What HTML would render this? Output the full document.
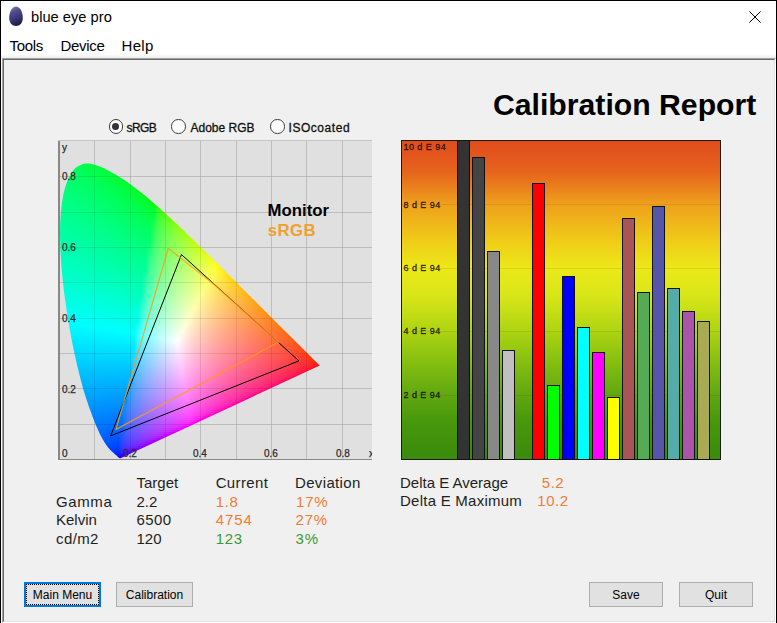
<!DOCTYPE html>
<html><head><meta charset="utf-8">
<style>
*{margin:0;padding:0;box-sizing:border-box}
html,body{width:777px;height:623px;overflow:hidden;background:#fff}
body{position:relative;font-family:"Liberation Sans",sans-serif;color:#000}
.a{position:absolute}
.t{position:absolute;line-height:1;white-space:pre}
#client{position:absolute;left:2px;top:58px;width:774px;height:565px;background:#f0f0f0;
  border-top:1px solid #a0a0a0;border-left:1px solid #a0a0a0;border-right:1px solid #fff;border-bottom:1px solid #fff}
#client2{position:absolute;left:3px;top:59px;width:772px;height:563px;
  border-top:1px solid #696969;border-left:1px solid #696969;border-right:1px solid #e3e3e3;border-bottom:1px solid #e3e3e3}
.menu{font-size:15px;letter-spacing:-0.3px;color:#000;top:37.8px}
.radio{position:absolute;width:14.5px;height:14.5px;border-radius:50%;border:1.3px solid #3c3c3c;background:#fff;top:119.2px}
.radio.on::after{content:"";position:absolute;left:2.45px;top:2.45px;width:7px;height:7px;border-radius:50%;background:#333}
.rl{font-size:12px;top:121.5px;color:#111;-webkit-text-stroke:0.3px #111}
#cie{position:absolute;left:58px;top:140px;width:314px;height:320px;background:#e0e0e0;overflow:hidden}
#horse{position:absolute;left:0;top:0;width:314px;height:320px;clip-path:polygon(62.6px 318.2px,61.9px 318.3px,61.2px 317.9px,60.6px 317.5px,60.0px 316.9px,59.5px 316.4px,58.8px 315.8px,58.2px 315.3px,57.5px 314.7px,56.9px 314.2px,56.4px 313.7px,55.8px 313.2px,55.1px 312.6px,54.4px 311.9px,53.6px 311.2px,52.8px 310.4px,51.9px 309.4px,51.0px 308.4px,50.5px 307.9px,50.0px 307.3px,49.4px 306.6px,48.9px 305.8px,48.3px 305.0px,47.6px 304.0px,47.0px 303.1px,46.3px 302.0px,45.6px 300.8px,44.8px 299.5px,44.0px 298.0px,43.2px 296.5px,42.4px 294.9px,41.5px 293.2px,40.6px 291.3px,39.7px 289.1px,38.7px 286.9px,37.7px 284.4px,36.6px 281.9px,35.5px 279.1px,34.3px 276.1px,33.2px 272.8px,31.9px 269.4px,30.6px 265.7px,29.3px 261.8px,27.9px 257.7px,26.5px 253.3px,25.1px 248.7px,23.8px 243.7px,22.4px 238.5px,21.0px 233.0px,19.6px 227.3px,18.2px 221.3px,16.8px 215.1px,15.5px 208.7px,14.1px 201.9px,12.8px 194.9px,11.5px 187.8px,10.2px 180.5px,9.1px 173.3px,8.0px 166.0px,6.9px 158.5px,5.9px 150.9px,5.1px 143.4px,4.3px 135.9px,3.6px 128.6px,3.1px 121.4px,2.6px 114.3px,2.3px 107.2px,2.1px 100.3px,2.0px 93.6px,2.1px 87.2px,2.3px 81.0px,2.7px 74.9px,3.2px 69.0px,3.9px 63.4px,4.7px 58.2px,5.6px 53.3px,6.8px 48.8px,8.1px 44.6px,9.5px 40.7px,11.1px 37.2px,12.8px 34.0px,14.5px 31.3px,16.4px 29.1px,18.4px 27.3px,20.5px 25.9px,22.7px 24.9px,24.9px 24.1px,27.1px 23.6px,29.4px 23.4px,31.7px 23.5px,34.1px 24.0px,36.5px 24.7px,38.9px 25.5px,41.3px 26.3px,43.7px 27.2px,46.1px 28.3px,48.5px 29.5px,50.9px 30.8px,53.3px 32.2px,55.7px 33.5px,58.0px 34.8px,60.3px 36.2px,62.6px 37.7px,64.8px 39.1px,67.1px 40.6px,69.3px 42.1px,71.5px 43.7px,73.7px 45.3px,75.8px 46.9px,78.0px 48.5px,80.2px 50.2px,82.3px 51.8px,84.5px 53.6px,86.6px 55.3px,88.8px 57.1px,90.9px 58.9px,93.1px 60.7px,95.2px 62.5px,97.3px 64.4px,99.4px 66.2px,101.6px 68.1px,103.7px 70.0px,105.8px 72.0px,107.9px 73.9px,110.0px 75.8px,112.2px 77.8px,114.3px 79.8px,116.4px 81.8px,118.5px 83.8px,120.6px 85.8px,122.7px 87.8px,124.9px 89.8px,127.0px 91.8px,129.1px 93.9px,131.2px 95.9px,133.3px 98.0px,135.5px 100.0px,137.6px 102.1px,139.7px 104.2px,141.8px 106.3px,143.9px 108.3px,146.0px 110.4px,148.1px 112.5px,150.2px 114.5px,152.3px 116.6px,154.4px 118.7px,156.5px 120.7px,158.6px 122.8px,160.7px 124.9px,162.7px 126.9px,164.8px 129.0px,166.8px 131.0px,168.9px 133.0px,170.9px 135.1px,172.9px 137.1px,175.0px 139.1px,177.0px 141.1px,179.0px 143.1px,180.9px 145.1px,182.9px 147.0px,184.8px 149.0px,186.8px 150.9px,188.7px 152.8px,190.6px 154.7px,192.5px 156.6px,194.4px 158.5px,196.2px 160.3px,198.1px 162.1px,199.9px 163.9px,201.7px 165.7px,203.4px 167.5px,205.2px 169.2px,206.9px 170.9px,208.6px 172.6px,210.2px 174.3px,211.9px 175.9px,213.5px 177.5px,215.0px 179.0px,216.5px 180.6px,218.0px 182.0px,219.5px 183.5px,220.9px 184.9px,222.2px 186.2px,223.6px 187.6px,224.9px 188.9px,226.2px 190.2px,227.5px 191.5px,228.8px 192.7px,230.0px 193.9px,231.1px 195.1px,232.3px 196.2px,233.4px 197.3px,234.4px 198.3px,235.4px 199.3px,236.4px 200.3px,237.4px 201.3px,238.3px 202.2px,239.2px 203.1px,240.1px 203.9px,240.9px 204.8px,241.7px 205.6px,242.5px 206.3px,243.2px 207.1px,243.9px 207.8px,244.6px 208.5px,245.3px 209.1px,245.9px 209.8px,246.5px 210.4px,247.1px 211.0px,247.7px 211.6px,248.2px 212.1px,248.8px 212.6px,249.3px 213.1px,250.2px 214.1px,251.1px 215.0px,252.0px 215.8px,252.7px 216.6px,253.5px 217.3px,254.2px 218.0px,254.8px 218.7px,255.5px 219.3px,256.0px 219.9px,256.6px 220.4px,257.3px 221.1px,257.9px 221.7px,258.5px 222.3px,259.1px 222.9px,259.6px 223.4px,260.1px 223.9px,260.7px 224.5px,261.2px 225.0px,261.7px 225.5px)}
#horse i{position:absolute;left:0;width:314px;display:block}
.gu{position:absolute;background:#d0d0d0}.gl{position:absolute;background:rgba(0,0,0,0.09)}
.cl{font-size:10px;color:#2a2a2a;-webkit-text-stroke:0.25px #2a2a2a}
#bars{position:absolute;left:401px;top:140px;width:320px;height:320px;border:1px solid #1a1a1a;
  background:linear-gradient(180deg,#e04c1c 0px,#e6621c 30px,#eea01c 63px,#f0cc18 100px,#ece818 127px,#d8e618 155px,#aed412 190px,#86c010 220px,#62a810 253px,#48980c 280px,#3a8a0c 318px)}
.bar{position:absolute;width:13px;border:1px solid #111;bottom:0}
.bl{font-size:9px;letter-spacing:0.45px;color:rgba(20,12,0,0.85);-webkit-text-stroke:0.3px rgba(20,12,0,0.85);left:1.5px}
.bg{position:absolute;left:0;width:318px;height:1px;background:rgba(90,60,0,0.12)}
.tb{font-size:15px;color:#1e1e1e}
.or{color:#f07d32}
.gr{color:#3c9a30}
.btn{position:absolute;top:582px;width:77px;height:25px;background:#e1e1e1;border:1px solid #adadad;font-size:12px;color:#000;line-height:23px;text-align:center}
</style></head><body>
<!-- window frame -->
<div class="a" style="left:0;top:0;width:777px;height:1px;background:#000"></div>
<div class="a" style="left:0;top:0;width:1px;height:623px;background:#000"></div>
<div class="a" style="left:776px;top:0;width:1px;height:623px;background:#000"></div>
<!-- icon -->
<svg class="a" style="left:8px;top:6px" width="16" height="21" viewBox="0 0 16 21">
<defs><linearGradient id="eg" x1="0" y1="0" x2="0.3" y2="1"><stop offset="0" stop-color="#8c8ab4"/><stop offset="0.35" stop-color="#504c90"/><stop offset="0.7" stop-color="#3a3676"/><stop offset="1" stop-color="#22203e"/></linearGradient></defs>
<path d="M8 0.5 C4.2 0.5 1.2 5.5 1.2 11.8 C1.2 17.2 4.2 20 8 20 C11.8 20 14.8 17.2 14.8 11.8 C14.8 5.5 11.8 0.5 8 0.5Z" fill="url(#eg)"/>
</svg>
<div class="t" style="left:31px;top:9.5px;font-size:14.7px;color:#000">blue eye pro</div>
<!-- close X -->
<svg class="a" style="left:748px;top:10px" width="14" height="14" viewBox="0 0 14 14"><path d="M1.4 1.4L12.6 12.6M12.6 1.4L1.4 12.6" stroke="#000" stroke-width="1"/></svg>
<!-- menu -->
<div class="t menu" style="left:9.5px">Tools</div>
<div class="t menu" style="left:60.5px">Device</div>
<div class="t menu" style="left:121.5px;letter-spacing:0.3px">Help</div>
<div class="a" style="left:1px;top:54px;width:775px;height:4px;background:linear-gradient(180deg,#fff,#ededed)"></div><div id="client"></div><div id="client2"></div>

<div class="t" style="left:493px;top:89.8px;font-size:30.2px;font-weight:bold;color:#000">Calibration Report</div>

<!-- radios -->
<div class="radio on" style="left:108.7px"></div>
<div class="t rl" style="left:126.5px;letter-spacing:-0.6px">sRGB</div>
<div class="radio" style="left:171px"></div>
<div class="t rl" style="left:190.5px">Adobe RGB</div>
<div class="radio" style="left:270px"></div>
<div class="t rl" style="left:288.5px;letter-spacing:0.55px">ISOcoated</div>

<!-- CIE chart -->
<div id="cie">
<div class="gu" style="left:36px;top:0;width:1px;height:320px"></div><div class="gu" style="left:0;top:284px;width:314px;height:1px"></div><div class="gu" style="left:72px;top:0;width:1px;height:320px"></div><div class="gu" style="left:0;top:248px;width:314px;height:1px"></div><div class="gu" style="left:107px;top:0;width:1px;height:320px"></div><div class="gu" style="left:0;top:213px;width:314px;height:1px"></div><div class="gu" style="left:142px;top:0;width:1px;height:320px"></div><div class="gu" style="left:0;top:178px;width:314px;height:1px"></div><div class="gu" style="left:178px;top:0;width:1px;height:320px"></div><div class="gu" style="left:0;top:142px;width:314px;height:1px"></div><div class="gu" style="left:213px;top:0;width:1px;height:320px"></div><div class="gu" style="left:0;top:107px;width:314px;height:1px"></div><div class="gu" style="left:248px;top:0;width:1px;height:320px"></div><div class="gu" style="left:0;top:72px;width:314px;height:1px"></div><div class="gu" style="left:284px;top:0;width:1px;height:320px"></div><div class="gu" style="left:0;top:36px;width:314px;height:1px"></div><div id="horse"><i style="top:0px;height:2px;background:linear-gradient(90deg,#00ff4c 0px,#00ff49 4px,#00ff44 8px,#00ff3f 12px,#00ff39 16px,#00ff33 20px,#00ff2b 24px,#00ff21 28px,#00ff0f 32px,#00ff00 36px,#00ff00 40px,#00ff00 44px,#00ff00 48px,#00ff00 52px,#00ff00 56px,#00ff00 60px,#00ff00 64px,#00ff00 68px,#00ff00 72px,#00ff00 76px,#00ff00 80px,#00ff00 84px,#00ff00 88px,#00ff00 92px,#00ff00 96px,#00ff00 100px,#00ff00 104px,#0fff00 108px,#35ff00 112px,#47ff00 116px,#55ff00 120px,#61ff00 124px,#6cff00 128px,#75ff00 132px,#7eff00 136px,#86ff00 140px,#8eff00 144px,#96ff00 148px,#9dff00 152px,#a3ff00 156px,#aaff00 160px,#b0ff00 164px,#b6ff00 168px,#bcff00 172px,#c2ff00 176px,#c8ff00 180px,#cdff00 184px,#d3ff00 188px,#d8ff00 192px,#deff00 196px,#e3ff00 200px,#e8ff00 204px,#edff00 208px,#f2ff00 212px,#f7ff00 216px,#fcff00 220px,#fffd00 224px,#fff800 228px,#fff400 232px,#ffef00 236px,#ffeb00 240px,#ffe700 244px,#ffe300 248px,#ffe000 252px,#ffdc00 256px,#ffd900 260px,#ffd500 264px,#ffd200 268px,#ffcf00 272px,#ffcc00 276px,#ffc900 280px,#ffc600 284px,#ffc400 288px,#ffc100 292px,#ffbe00 296px,#ffbc00 300px,#ffb900 304px,#ffb700 308px,#ffb400 312px,#ffb200 316px)"></i><i style="top:2px;height:2px;background:linear-gradient(90deg,#00ff4f 0px,#00ff4b 4px,#00ff47 8px,#00ff42 12px,#00ff3d 16px,#00ff37 20px,#00ff2f 24px,#00ff27 28px,#00ff1a 32px,#00ff00 36px,#00ff00 40px,#00ff00 44px,#00ff00 48px,#00ff00 52px,#00ff00 56px,#00ff00 60px,#00ff00 64px,#00ff00 68px,#00ff00 72px,#00ff00 76px,#00ff00 80px,#00ff00 84px,#00ff00 88px,#00ff00 92px,#00ff00 96px,#00ff00 100px,#00ff00 104px,#15ff00 108px,#36ff00 112px,#49ff00 116px,#57ff00 120px,#62ff00 124px,#6dff00 128px,#76ff00 132px,#7fff00 136px,#87ff00 140px,#8fff00 144px,#97ff00 148px,#9eff00 152px,#a4ff00 156px,#abff00 160px,#b1ff00 164px,#b7ff00 168px,#bdff00 172px,#c3ff00 176px,#c9ff00 180px,#cfff00 184px,#d4ff00 188px,#daff00 192px,#dfff00 196px,#e4ff00 200px,#e9ff00 204px,#eeff00 208px,#f3ff00 212px,#f9ff00 216px,#fdff00 220px,#fffc00 224px,#fff700 228px,#fff200 232px,#ffee00 236px,#ffea00 240px,#ffe600 244px,#ffe200 248px,#ffdf00 252px,#ffdb00 256px,#ffd800 260px,#ffd400 264px,#ffd100 268px,#ffce00 272px,#ffcb00 276px,#ffc800 280px,#ffc500 284px,#ffc300 288px,#ffc000 292px,#ffbd00 296px,#ffbb00 300px,#ffb800 304px,#ffb600 308px,#ffb300 312px,#ffb100 316px)"></i><i style="top:4px;height:2px;background:linear-gradient(90deg,#00ff51 0px,#00ff4e 4px,#00ff49 8px,#00ff45 12px,#00ff40 16px,#00ff3a 20px,#00ff33 24px,#00ff2c 28px,#00ff21 32px,#00ff0f 36px,#00ff00 40px,#00ff00 44px,#00ff00 48px,#00ff00 52px,#00ff00 56px,#00ff00 60px,#00ff00 64px,#00ff00 68px,#00ff00 72px,#00ff00 76px,#00ff00 80px,#00ff00 84px,#00ff00 88px,#00ff00 92px,#00ff00 96px,#00ff00 100px,#00ff00 104px,#1aff00 108px,#38ff00 112px,#4aff00 116px,#58ff00 120px,#64ff00 124px,#6eff00 128px,#78ff00 132px,#80ff00 136px,#88ff00 140px,#90ff00 144px,#98ff00 148px,#9fff00 152px,#a5ff00 156px,#acff00 160px,#b2ff00 164px,#b8ff00 168px,#beff00 172px,#c4ff00 176px,#caff00 180px,#d0ff00 184px,#d5ff00 188px,#dbff00 192px,#e0ff00 196px,#e5ff00 200px,#eaff00 204px,#f0ff00 208px,#f5ff00 212px,#faff00 216px,#ffff00 220px,#fffa00 224px,#fff600 228px,#fff100 232px,#ffed00 236px,#ffe900 240px,#ffe500 244px,#ffe100 248px,#ffde00 252px,#ffda00 256px,#ffd700 260px,#ffd300 264px,#ffd000 268px,#ffcd00 272px,#ffca00 276px,#ffc700 280px,#ffc400 284px,#ffc200 288px,#ffbf00 292px,#ffbc00 296px,#ffba00 300px,#ffb700 304px,#ffb500 308px,#ffb300 312px,#ffb000 316px)"></i><i style="top:6px;height:2px;background:linear-gradient(90deg,#00ff53 0px,#00ff50 4px,#00ff4c 8px,#00ff48 12px,#00ff43 16px,#00ff3d 20px,#00ff37 24px,#00ff30 28px,#00ff27 32px,#00ff1b 36px,#00ff00 40px,#00ff00 44px,#00ff00 48px,#00ff00 52px,#00ff00 56px,#00ff00 60px,#00ff00 64px,#00ff00 68px,#00ff00 72px,#00ff00 76px,#00ff00 80px,#00ff00 84px,#00ff00 88px,#00ff00 92px,#00ff00 96px,#00ff00 100px,#00ff00 104px,#1eff00 108px,#3aff00 112px,#4bff00 116px,#59ff00 120px,#65ff00 124px,#6fff00 128px,#79ff00 132px,#81ff00 136px,#89ff00 140px,#91ff00 144px,#99ff00 148px,#a0ff00 152px,#a6ff00 156px,#adff00 160px,#b3ff00 164px,#b9ff00 168px,#c0ff00 172px,#c5ff00 176px,#cbff00 180px,#d1ff00 184px,#d6ff00 188px,#dcff00 192px,#e1ff00 196px,#e6ff00 200px,#ecff00 204px,#f1ff00 208px,#f6ff00 212px,#fbff00 216px,#fffe00 220px,#fff900 224px,#fff400 228px,#fff000 232px,#ffec00 236px,#ffe800 240px,#ffe400 244px,#ffe000 248px,#ffdc00 252px,#ffd900 256px,#ffd600 260px,#ffd200 264px,#ffcf00 268px,#ffcc00 272px,#ffc900 276px,#ffc600 280px,#ffc300 284px,#ffc100 288px,#ffbe00 292px,#ffbb00 296px,#ffb900 300px,#ffb600 304px,#ffb400 308px,#ffb200 312px,#ffaf00 316px)"></i><i style="top:8px;height:2px;background:linear-gradient(90deg,#00ff55 0px,#00ff52 4px,#00ff4e 8px,#00ff4a 12px,#00ff45 16px,#00ff40 20px,#00ff3b 24px,#00ff34 28px,#00ff2c 32px,#00ff22 36px,#00ff10 40px,#00ff00 44px,#00ff00 48px,#00ff00 52px,#00ff00 56px,#00ff00 60px,#00ff00 64px,#00ff00 68px,#00ff00 72px,#00ff00 76px,#00ff00 80px,#00ff00 84px,#00ff00 88px,#00ff00 92px,#00ff00 96px,#00ff00 100px,#00ff00 104px,#21ff00 108px,#3cff00 112px,#4dff00 116px,#5aff00 120px,#66ff00 124px,#70ff00 128px,#7aff00 132px,#82ff00 136px,#8bff00 140px,#92ff00 144px,#9aff00 148px,#a1ff00 152px,#a7ff00 156px,#aeff00 160px,#b4ff00 164px,#bbff00 168px,#c1ff00 172px,#c6ff00 176px,#ccff00 180px,#d2ff00 184px,#d7ff00 188px,#ddff00 192px,#e2ff00 196px,#e8ff00 200px,#edff00 204px,#f2ff00 208px,#f7ff00 212px,#fcff00 216px,#fffd00 220px,#fff800 224px,#fff300 228px,#ffef00 232px,#ffeb00 236px,#ffe700 240px,#ffe300 244px,#ffdf00 248px,#ffdb00 252px,#ffd800 256px,#ffd400 260px,#ffd100 264px,#ffce00 268px,#ffcb00 272px,#ffc800 276px,#ffc500 280px,#ffc200 284px,#ffc000 288px,#ffbd00 292px,#ffba00 296px,#ffb800 300px,#ffb500 304px,#ffb300 308px,#ffb100 312px,#ffae00 316px)"></i><i style="top:10px;height:2px;background:linear-gradient(90deg,#00ff58 0px,#00ff55 4px,#00ff51 8px,#00ff4d 12px,#00ff48 16px,#00ff43 20px,#00ff3e 24px,#00ff38 28px,#00ff31 32px,#00ff28 36px,#00ff1b 40px,#00ff00 44px,#00ff00 48px,#00ff00 52px,#00ff00 56px,#00ff00 60px,#00ff00 64px,#00ff00 68px,#00ff00 72px,#00ff00 76px,#00ff00 80px,#00ff00 84px,#00ff00 88px,#00ff00 92px,#00ff00 96px,#00ff00 100px,#00ff00 104px,#24ff00 108px,#3dff00 112px,#4eff00 116px,#5bff00 120px,#67ff00 124px,#71ff00 128px,#7bff00 132px,#83ff00 136px,#8cff00 140px,#93ff00 144px,#9bff00 148px,#a2ff00 152px,#a8ff00 156px,#afff00 160px,#b5ff00 164px,#bcff00 168px,#c2ff00 172px,#c8ff00 176px,#cdff00 180px,#d3ff00 184px,#d9ff00 188px,#deff00 192px,#e4ff00 196px,#e9ff00 200px,#eeff00 204px,#f3ff00 208px,#f8ff00 212px,#feff00 216px,#fffb00 220px,#fff700 224px,#fff200 228px,#ffee00 232px,#ffe900 236px,#ffe500 240px,#ffe200 244px,#ffde00 248px,#ffda00 252px,#ffd700 256px,#ffd300 260px,#ffd000 264px,#ffcd00 268px,#ffca00 272px,#ffc700 276px,#ffc400 280px,#ffc100 284px,#ffbf00 288px,#ffbc00 292px,#ffb900 296px,#ffb700 300px,#ffb400 304px,#ffb200 308px,#ffb000 312px,#ffad00 316px)"></i><i style="top:12px;height:2px;background:linear-gradient(90deg,#00ff5a 0px,#00ff57 4px,#00ff53 8px,#00ff4f 12px,#00ff4b 16px,#00ff46 20px,#00ff41 24px,#00ff3b 28px,#00ff35 32px,#00ff2d 36px,#00ff22 40px,#00ff11 44px,#00ff00 48px,#00ff00 52px,#00ff00 56px,#00ff00 60px,#00ff00 64px,#00ff00 68px,#00ff00 72px,#00ff00 76px,#00ff00 80px,#00ff00 84px,#00ff00 88px,#00ff00 92px,#00ff00 96px,#00ff00 100px,#00ff00 104px,#27ff00 108px,#3fff00 112px,#4fff00 116px,#5dff00 120px,#68ff00 124px,#72ff00 128px,#7cff00 132px,#84ff00 136px,#8dff00 140px,#94ff00 144px,#9cff00 148px,#a3ff00 152px,#aaff00 156px,#b0ff00 160px,#b7ff00 164px,#bdff00 168px,#c3ff00 172px,#c9ff00 176px,#cfff00 180px,#d4ff00 184px,#daff00 188px,#dfff00 192px,#e5ff00 196px,#eaff00 200px,#efff00 204px,#f5ff00 208px,#faff00 212px,#ffff00 216px,#fffa00 220px,#fff500 224px,#fff100 228px,#ffec00 232px,#ffe800 236px,#ffe400 240px,#ffe000 244px,#ffdd00 248px,#ffd900 252px,#ffd600 256px,#ffd200 260px,#ffcf00 264px,#ffcc00 268px,#ffc900 272px,#ffc600 276px,#ffc300 280px,#ffc000 284px,#ffbe00 288px,#ffbb00 292px,#ffb800 296px,#ffb600 300px,#ffb300 304px,#ffb100 308px,#ffaf00 312px,#ffac00 316px)"></i><i style="top:14px;height:2px;background:linear-gradient(90deg,#00ff5c 0px,#00ff59 4px,#00ff55 8px,#00ff52 12px,#00ff4d 16px,#00ff49 20px,#00ff44 24px,#00ff3e 28px,#00ff38 32px,#00ff31 36px,#00ff28 40px,#00ff1c 44px,#00ff00 48px,#00ff00 52px,#00ff00 56px,#00ff00 60px,#00ff00 64px,#00ff00 68px,#00ff00 72px,#00ff00 76px,#00ff00 80px,#00ff00 84px,#00ff00 88px,#00ff00 92px,#00ff00 96px,#00ff00 100px,#00ff00 104px,#29ff00 108px,#41ff00 112px,#51ff00 116px,#5eff00 120px,#69ff00 124px,#73ff00 128px,#7dff00 132px,#85ff00 136px,#8eff00 140px,#95ff00 144px,#9dff00 148px,#a4ff00 152px,#abff00 156px,#b1ff00 160px,#b8ff00 164px,#beff00 168px,#c4ff00 172px,#caff00 176px,#d0ff00 180px,#d5ff00 184px,#dbff00 188px,#e0ff00 192px,#e6ff00 196px,#ebff00 200px,#f1ff00 204px,#f6ff00 208px,#fbff00 212px,#fffe00 216px,#fff900 220px,#fff400 224px,#fff000 228px,#ffeb00 232px,#ffe700 236px,#ffe300 240px,#ffdf00 244px,#ffdc00 248px,#ffd800 252px,#ffd500 256px,#ffd100 260px,#ffce00 264px,#ffcb00 268px,#ffc800 272px,#ffc500 276px,#ffc200 280px,#ffbf00 284px,#ffbd00 288px,#ffba00 292px,#ffb700 296px,#ffb500 300px,#ffb200 304px,#ffb000 308px,#ffae00 312px,#ffac00 316px)"></i><i style="top:16px;height:2px;background:linear-gradient(90deg,#00ff5e 0px,#00ff5b 4px,#00ff58 8px,#00ff54 12px,#00ff50 16px,#00ff4c 20px,#00ff47 24px,#00ff42 28px,#00ff3c 32px,#00ff35 36px,#00ff2d 40px,#00ff23 44px,#00ff12 48px,#00ff00 52px,#00ff00 56px,#00ff00 60px,#00ff00 64px,#00ff00 68px,#00ff00 72px,#00ff00 76px,#00ff00 80px,#00ff00 84px,#00ff00 88px,#00ff00 92px,#00ff00 96px,#00ff00 100px,#00ff00 104px,#2cff00 108px,#42ff00 112px,#52ff00 116px,#5fff00 120px,#6aff00 124px,#75ff00 128px,#7eff00 132px,#87ff00 136px,#8fff00 140px,#96ff00 144px,#9eff00 148px,#a5ff00 152px,#acff00 156px,#b2ff00 160px,#b9ff00 164px,#bfff00 168px,#c5ff00 172px,#cbff00 176px,#d1ff00 180px,#d7ff00 184px,#dcff00 188px,#e2ff00 192px,#e7ff00 196px,#edff00 200px,#f2ff00 204px,#f7ff00 208px,#fcff00 212px,#fffc00 216px,#fff800 220px,#fff300 224px,#ffee00 228px,#ffea00 232px,#ffe600 236px,#ffe200 240px,#ffde00 244px,#ffda00 248px,#ffd700 252px,#ffd300 256px,#ffd000 260px,#ffcd00 264px,#ffca00 268px,#ffc700 272px,#ffc400 276px,#ffc100 280px,#ffbe00 284px,#ffbc00 288px,#ffb900 292px,#ffb600 296px,#ffb400 300px,#ffb200 304px,#ffaf00 308px,#ffad00 312px,#ffab00 316px)"></i><i style="top:18px;height:2px;background:linear-gradient(90deg,#00ff60 0px,#00ff5d 4px,#00ff5a 8px,#00ff56 12px,#00ff52 16px,#00ff4e 20px,#00ff4a 24px,#00ff45 28px,#00ff3f 32px,#00ff39 36px,#00ff32 40px,#00ff29 44px,#00ff1c 48px,#00ff00 52px,#00ff00 56px,#00ff00 60px,#00ff00 64px,#00ff00 68px,#00ff00 72px,#00ff00 76px,#00ff00 80px,#00ff00 84px,#00ff00 88px,#00ff00 92px,#00ff00 96px,#00ff00 100px,#00ff00 104px,#2eff00 108px,#44ff00 112px,#53ff00 116px,#60ff00 120px,#6cff00 124px,#76ff00 128px,#7fff00 132px,#88ff00 136px,#90ff00 140px,#97ff00 144px,#9fff00 148px,#a6ff00 152px,#adff00 156px,#b3ff00 160px,#baff00 164px,#c0ff00 168px,#c6ff00 172px,#ccff00 176px,#d2ff00 180px,#d8ff00 184px,#ddff00 188px,#e3ff00 192px,#e8ff00 196px,#eeff00 200px,#f3ff00 204px,#f8ff00 208px,#feff00 212px,#fffb00 216px,#fff600 220px,#fff200 224px,#ffed00 228px,#ffe900 232px,#ffe500 236px,#ffe100 240px,#ffdd00 244px,#ffd900 248px,#ffd600 252px,#ffd200 256px,#ffcf00 260px,#ffcc00 264px,#ffc900 268px,#ffc600 272px,#ffc300 276px,#ffc000 280px,#ffbd00 284px,#ffbb00 288px,#ffb800 292px,#ffb500 296px,#ffb300 300px,#ffb100 304px,#ffae00 308px,#ffac00 312px,#ffaa00 316px)"></i><i style="top:20px;height:2px;background:linear-gradient(90deg,#00ff62 0px,#00ff5f 4px,#00ff5c 8px,#00ff58 12px,#00ff55 16px,#00ff51 20px,#00ff4c 24px,#00ff48 28px,#00ff42 32px,#00ff3c 36px,#00ff36 40px,#00ff2e 44px,#00ff23 48px,#00ff12 52px,#00ff00 56px,#00ff00 60px,#00ff00 64px,#00ff00 68px,#00ff00 72px,#00ff00 76px,#00ff00 80px,#00ff00 84px,#00ff00 88px,#00ff00 92px,#00ff00 96px,#00ff00 100px,#00ff00 104px,#30ff00 108px,#45ff00 112px,#55ff00 116px,#62ff00 120px,#6dff00 124px,#77ff00 128px,#80ff00 132px,#89ff00 136px,#91ff00 140px,#99ff00 144px,#a0ff00 148px,#a7ff00 152px,#aeff00 156px,#b4ff00 160px,#bbff00 164px,#c1ff00 168px,#c7ff00 172px,#cdff00 176px,#d3ff00 180px,#d9ff00 184px,#dfff00 188px,#e4ff00 192px,#eaff00 196px,#efff00 200px,#f4ff00 204px,#faff00 208px,#ffff00 212px,#fffa00 216px,#fff500 220px,#fff000 224px,#ffec00 228px,#ffe800 232px,#ffe300 236px,#ffe000 240px,#ffdc00 244px,#ffd800 248px,#ffd500 252px,#ffd100 256px,#ffce00 260px,#ffcb00 264px,#ffc800 268px,#ffc500 272px,#ffc200 276px,#ffbf00 280px,#ffbc00 284px,#ffba00 288px,#ffb700 292px,#ffb400 296px,#ffb200 300px,#ffb000 304px,#ffad00 308px,#ffab00 312px,#ffa900 316px)"></i><i style="top:22px;height:2px;background:linear-gradient(90deg,#00ff64 0px,#00ff61 4px,#00ff5e 8px,#00ff5b 12px,#00ff57 16px,#00ff53 20px,#00ff4f 24px,#00ff4a 28px,#00ff45 32px,#00ff40 36px,#00ff3a 40px,#00ff32 44px,#00ff29 48px,#00ff1d 52px,#00ff00 56px,#00ff00 60px,#00ff00 64px,#00ff00 68px,#00ff00 72px,#00ff00 76px,#00ff00 80px,#00ff00 84px,#00ff00 88px,#00ff00 92px,#00ff00 96px,#00ff00 100px,#00ff00 104px,#32ff00 108px,#47ff00 112px,#56ff00 116px,#63ff00 120px,#6eff00 124px,#78ff00 128px,#81ff00 132px,#8aff00 136px,#92ff00 140px,#9aff00 144px,#a1ff00 148px,#a8ff00 152px,#afff00 156px,#b6ff00 160px,#bcff00 164px,#c2ff00 168px,#c8ff00 172px,#ceff00 176px,#d4ff00 180px,#daff00 184px,#e0ff00 188px,#e5ff00 192px,#ebff00 196px,#f0ff00 200px,#f6ff00 204px,#fbff00 208px,#fffe00 212px,#fff900 216px,#fff400 220px,#ffef00 224px,#ffeb00 228px,#ffe600 232px,#ffe200 236px,#ffde00 240px,#ffdb00 244px,#ffd700 248px,#ffd300 252px,#ffd000 256px,#ffcd00 260px,#ffca00 264px,#ffc700 268px,#ffc400 272px,#ffc100 276px,#ffbe00 280px,#ffbb00 284px,#ffb900 288px,#ffb600 292px,#ffb300 296px,#ffb100 300px,#ffaf00 304px,#ffac00 308px,#ffaa00 312px,#ffa800 316px)"></i><i style="top:24px;height:2px;background:linear-gradient(90deg,#00ff66 0px,#00ff64 4px,#00ff60 8px,#00ff5d 12px,#00ff59 16px,#00ff55 20px,#00ff51 24px,#00ff4d 28px,#00ff48 32px,#00ff43 36px,#00ff3d 40px,#00ff36 44px,#00ff2e 48px,#00ff24 52px,#00ff13 56px,#00ff00 60px,#00ff00 64px,#00ff00 68px,#00ff00 72px,#00ff00 76px,#00ff00 80px,#00ff00 84px,#00ff00 88px,#00ff00 92px,#00ff00 96px,#00ff00 100px,#00ff00 104px,#34ff00 108px,#48ff00 112px,#57ff00 116px,#64ff00 120px,#6fff00 124px,#79ff00 128px,#82ff00 132px,#8bff00 136px,#93ff00 140px,#9bff00 144px,#a2ff00 148px,#a9ff00 152px,#b0ff00 156px,#b7ff00 160px,#bdff00 164px,#c3ff00 168px,#caff00 172px,#d0ff00 176px,#d6ff00 180px,#dbff00 184px,#e1ff00 188px,#e7ff00 192px,#ecff00 196px,#f2ff00 200px,#f7ff00 204px,#fcff00 208px,#fffc00 212px,#fff700 216px,#fff200 220px,#ffee00 224px,#ffe900 228px,#ffe500 232px,#ffe100 236px,#ffdd00 240px,#ffd900 244px,#ffd600 248px,#ffd200 252px,#ffcf00 256px,#ffcc00 260px,#ffc900 264px,#ffc600 268px,#ffc300 272px,#ffc000 276px,#ffbd00 280px,#ffba00 284px,#ffb800 288px,#ffb500 292px,#ffb200 296px,#ffb000 300px,#ffae00 304px,#ffab00 308px,#ffa900 312px,#ffa700 316px)"></i><i style="top:26px;height:2px;background:linear-gradient(90deg,#00ff68 0px,#00ff66 4px,#00ff62 8px,#00ff5f 12px,#00ff5c 16px,#00ff58 20px,#00ff54 24px,#00ff50 28px,#00ff4b 32px,#00ff46 36px,#00ff40 40px,#00ff3a 44px,#00ff33 48px,#00ff2a 52px,#00ff1d 56px,#00ff00 60px,#00ff00 64px,#00ff00 68px,#00ff00 72px,#00ff00 76px,#00ff00 80px,#00ff00 84px,#00ff00 88px,#00ff00 92px,#00ff00 96px,#00ff00 100px,#0eff00 104px,#36ff00 108px,#4aff00 112px,#59ff00 116px,#65ff00 120px,#70ff00 124px,#7aff00 128px,#83ff00 132px,#8cff00 136px,#94ff00 140px,#9cff00 144px,#a3ff00 148px,#aaff00 152px,#b1ff00 156px,#b8ff00 160px,#beff00 164px,#c5ff00 168px,#cbff00 172px,#d1ff00 176px,#d7ff00 180px,#ddff00 184px,#e2ff00 188px,#e8ff00 192px,#edff00 196px,#f3ff00 200px,#f8ff00 204px,#feff00 208px,#fffb00 212px,#fff600 216px,#fff100 220px,#ffed00 224px,#ffe800 228px,#ffe400 232px,#ffe000 236px,#ffdc00 240px,#ffd800 244px,#ffd500 248px,#ffd100 252px,#ffce00 256px,#ffcb00 260px,#ffc700 264px,#ffc400 268px,#ffc100 272px,#ffbf00 276px,#ffbc00 280px,#ffb900 284px,#ffb600 288px,#ffb400 292px,#ffb100 296px,#ffaf00 300px,#ffad00 304px,#ffaa00 308px,#ffa800 312px,#ffa600 316px)"></i><i style="top:28px;height:2px;background:linear-gradient(90deg,#00ff6a 0px,#00ff67 4px,#00ff64 8px,#00ff61 12px,#00ff5e 16px,#00ff5a 20px,#00ff56 24px,#00ff52 28px,#00ff4e 32px,#00ff49 36px,#00ff44 40px,#00ff3e 44px,#00ff37 48px,#00ff2f 52px,#00ff25 56px,#00ff14 60px,#00ff00 64px,#00ff00 68px,#00ff00 72px,#00ff00 76px,#00ff00 80px,#00ff00 84px,#00ff00 88px,#00ff00 92px,#00ff00 96px,#00ff00 100px,#15ff00 104px,#38ff00 108px,#4bff00 112px,#5aff00 116px,#66ff00 120px,#71ff00 124px,#7bff00 128px,#84ff00 132px,#8dff00 136px,#95ff00 140px,#9dff00 144px,#a4ff00 148px,#abff00 152px,#b2ff00 156px,#b9ff00 160px,#bfff00 164px,#c6ff00 168px,#ccff00 172px,#d2ff00 176px,#d8ff00 180px,#deff00 184px,#e4ff00 188px,#e9ff00 192px,#efff00 196px,#f4ff00 200px,#faff00 204px,#ffff00 208px,#fffa00 212px,#fff500 216px,#fff000 220px,#ffeb00 224px,#ffe700 228px,#ffe300 232px,#ffdf00 236px,#ffdb00 240px,#ffd700 244px,#ffd400 248px,#ffd000 252px,#ffcd00 256px,#ffca00 260px,#ffc600 264px,#ffc300 268px,#ffc000 272px,#ffbe00 276px,#ffbb00 280px,#ffb800 284px,#ffb500 288px,#ffb300 292px,#ffb000 296px,#ffae00 300px,#ffac00 304px,#ffa900 308px,#ffa700 312px,#ffa500 316px)"></i><i style="top:30px;height:2px;background:linear-gradient(90deg,#00ff6c 0px,#00ff69 4px,#00ff66 8px,#00ff63 12px,#00ff60 16px,#00ff5c 20px,#00ff59 24px,#00ff55 28px,#00ff50 32px,#00ff4c 36px,#00ff47 40px,#00ff41 44px,#00ff3b 48px,#00ff33 52px,#00ff2a 56px,#00ff1e 60px,#00ff00 64px,#00ff00 68px,#00ff00 72px,#00ff00 76px,#00ff00 80px,#00ff00 84px,#00ff00 88px,#00ff00 92px,#00ff00 96px,#00ff00 100px,#1aff00 104px,#3aff00 108px,#4dff00 112px,#5bff00 116px,#68ff00 120px,#72ff00 124px,#7cff00 128px,#86ff00 132px,#8eff00 136px,#96ff00 140px,#9eff00 144px,#a5ff00 148px,#adff00 152px,#b3ff00 156px,#baff00 160px,#c1ff00 164px,#c7ff00 168px,#cdff00 172px,#d3ff00 176px,#d9ff00 180px,#dfff00 184px,#e5ff00 188px,#ebff00 192px,#f0ff00 196px,#f6ff00 200px,#fbff00 204px,#fffd00 208px,#fff800 212px,#fff300 216px,#ffef00 220px,#ffea00 224px,#ffe600 228px,#ffe100 232px,#ffdd00 236px,#ffda00 240px,#ffd600 244px,#ffd200 248px,#ffcf00 252px,#ffcc00 256px,#ffc800 260px,#ffc500 264px,#ffc200 268px,#ffbf00 272px,#ffbd00 276px,#ffba00 280px,#ffb700 284px,#ffb400 288px,#ffb200 292px,#ffaf00 296px,#ffad00 300px,#ffab00 304px,#ffa800 308px,#ffa600 312px,#ffa400 316px)"></i><i style="top:32px;height:2px;background:linear-gradient(90deg,#00ff6e 0px,#00ff6b 4px,#00ff68 8px,#00ff65 12px,#00ff62 16px,#00ff5f 20px,#00ff5b 24px,#00ff57 28px,#00ff53 32px,#00ff4f 36px,#00ff4a 40px,#00ff44 44px,#00ff3e 48px,#00ff38 52px,#00ff30 56px,#00ff25 60px,#00ff14 64px,#00ff00 68px,#00ff00 72px,#00ff00 76px,#00ff00 80px,#00ff00 84px,#00ff00 88px,#00ff00 92px,#00ff00 96px,#00ff00 100px,#1eff00 104px,#3cff00 108px,#4eff00 112px,#5dff00 116px,#69ff00 120px,#74ff00 124px,#7eff00 128px,#87ff00 132px,#8fff00 136px,#97ff00 140px,#9fff00 144px,#a7ff00 148px,#aeff00 152px,#b5ff00 156px,#bbff00 160px,#c2ff00 164px,#c8ff00 168px,#ceff00 172px,#d4ff00 176px,#daff00 180px,#e0ff00 184px,#e6ff00 188px,#ecff00 192px,#f1ff00 196px,#f7ff00 200px,#fdff00 204px,#fffc00 208px,#fff700 212px,#fff200 216px,#ffed00 220px,#ffe900 224px,#ffe400 228px,#ffe000 232px,#ffdc00 236px,#ffd800 240px,#ffd500 244px,#ffd100 248px,#ffce00 252px,#ffcb00 256px,#ffc700 260px,#ffc400 264px,#ffc100 268px,#ffbe00 272px,#ffbb00 276px,#ffb900 280px,#ffb600 284px,#ffb300 288px,#ffb100 292px,#ffae00 296px,#ffac00 300px,#ffaa00 304px,#ffa700 308px,#ffa500 312px,#ffa300 316px)"></i><i style="top:34px;height:2px;background:linear-gradient(90deg,#00ff70 0px,#00ff6d 4px,#00ff6a 8px,#00ff67 12px,#00ff64 16px,#00ff61 20px,#00ff5d 24px,#00ff5a 28px,#00ff56 32px,#00ff51 36px,#00ff4d 40px,#00ff48 44px,#00ff42 48px,#00ff3c 52px,#00ff34 56px,#00ff2b 60px,#00ff1e 64px,#00ff00 68px,#00ff00 72px,#00ff00 76px,#00ff00 80px,#00ff00 84px,#00ff00 88px,#00ff00 92px,#00ff00 96px,#00ff00 100px,#22ff00 104px,#3eff00 108px,#50ff00 112px,#5eff00 116px,#6aff00 120px,#75ff00 124px,#7fff00 128px,#88ff00 132px,#90ff00 136px,#98ff00 140px,#a0ff00 144px,#a8ff00 148px,#afff00 152px,#b6ff00 156px,#bcff00 160px,#c3ff00 164px,#c9ff00 168px,#d0ff00 172px,#d6ff00 176px,#dcff00 180px,#e2ff00 184px,#e7ff00 188px,#edff00 192px,#f3ff00 196px,#f8ff00 200px,#feff00 204px,#fffb00 208px,#fff500 212px,#fff100 216px,#ffec00 220px,#ffe700 224px,#ffe300 228px,#ffdf00 232px,#ffdb00 236px,#ffd700 240px,#ffd400 244px,#ffd000 248px,#ffcd00 252px,#ffc900 256px,#ffc600 260px,#ffc300 264px,#ffc000 268px,#ffbd00 272px,#ffba00 276px,#ffb800 280px,#ffb500 284px,#ffb200 288px,#ffb000 292px,#ffad00 296px,#ffab00 300px,#ffa900 304px,#ffa600 308px,#ffa400 312px,#ffa200 316px)"></i><i style="top:36px;height:2px;background:linear-gradient(90deg,#00ff71 0px,#00ff6f 4px,#00ff6c 8px,#00ff69 12px,#00ff66 16px,#00ff63 20px,#00ff60 24px,#00ff5c 28px,#00ff58 32px,#00ff54 36px,#00ff4f 40px,#00ff4b 44px,#00ff45 48px,#00ff3f 52px,#00ff38 56px,#00ff30 60px,#00ff26 64px,#00ff15 68px,#00ff00 72px,#00ff00 76px,#00ff00 80px,#00ff00 84px,#00ff00 88px,#00ff00 92px,#00ff00 96px,#00ff00 100px,#25ff00 104px,#40ff00 108px,#51ff00 112px,#5fff00 116px,#6bff00 120px,#76ff00 124px,#80ff00 128px,#89ff00 132px,#92ff00 136px,#9aff00 140px,#a1ff00 144px,#a9ff00 148px,#b0ff00 152px,#b7ff00 156px,#beff00 160px,#c4ff00 164px,#cbff00 168px,#d1ff00 172px,#d7ff00 176px,#ddff00 180px,#e3ff00 184px,#e9ff00 188px,#eeff00 192px,#f4ff00 196px,#faff00 200px,#ffff00 204px,#fff900 208px,#fff400 212px,#ffef00 216px,#ffeb00 220px,#ffe600 224px,#ffe200 228px,#ffde00 232px,#ffda00 236px,#ffd600 240px,#ffd200 244px,#ffcf00 248px,#ffcc00 252px,#ffc800 256px,#ffc500 260px,#ffc200 264px,#ffbf00 268px,#ffbc00 272px,#ffb900 276px,#ffb700 280px,#ffb400 284px,#ffb100 288px,#ffaf00 292px,#ffac00 296px,#ffaa00 300px,#ffa800 304px,#ffa500 308px,#ffa300 312px,#ffa100 316px)"></i><i style="top:38px;height:2px;background:linear-gradient(90deg,#00ff73 0px,#00ff71 4px,#00ff6e 8px,#00ff6b 12px,#00ff68 16px,#00ff65 20px,#00ff62 24px,#00ff5e 28px,#00ff5a 32px,#00ff56 36px,#00ff52 40px,#00ff4d 44px,#00ff48 48px,#00ff43 52px,#00ff3c 56px,#00ff35 60px,#00ff2c 64px,#00ff1f 68px,#00ff00 72px,#00ff00 76px,#00ff00 80px,#00ff00 84px,#00ff00 88px,#00ff00 92px,#00ff00 96px,#00ff00 100px,#28ff00 104px,#41ff00 108px,#53ff00 112px,#60ff00 116px,#6cff00 120px,#77ff00 124px,#81ff00 128px,#8aff00 132px,#93ff00 136px,#9bff00 140px,#a3ff00 144px,#aaff00 148px,#b1ff00 152px,#b8ff00 156px,#bfff00 160px,#c5ff00 164px,#ccff00 168px,#d2ff00 172px,#d8ff00 176px,#deff00 180px,#e4ff00 184px,#eaff00 188px,#f0ff00 192px,#f6ff00 196px,#fbff00 200px,#fffd00 204px,#fff800 208px,#fff300 212px,#ffee00 216px,#ffe900 220px,#ffe500 224px,#ffe100 228px,#ffdd00 232px,#ffd900 236px,#ffd500 240px,#ffd100 244px,#ffce00 248px,#ffca00 252px,#ffc700 256px,#ffc400 260px,#ffc100 264px,#ffbe00 268px,#ffbb00 272px,#ffb800 276px,#ffb600 280px,#ffb300 284px,#ffb000 288px,#ffae00 292px,#ffab00 296px,#ffa900 300px,#ffa700 304px,#ffa400 308px,#ffa200 312px,#ffa000 316px)"></i><i style="top:40px;height:2px;background:linear-gradient(90deg,#00ff75 0px,#00ff73 4px,#00ff70 8px,#00ff6d 12px,#00ff6a 16px,#00ff67 20px,#00ff64 24px,#00ff61 28px,#00ff5d 32px,#00ff59 36px,#00ff55 40px,#00ff50 44px,#00ff4b 48px,#00ff46 52px,#00ff40 56px,#00ff39 60px,#00ff31 64px,#00ff26 68px,#00ff16 72px,#00ff00 76px,#00ff00 80px,#00ff00 84px,#00ff00 88px,#00ff00 92px,#00ff00 96px,#00ff00 100px,#2aff00 104px,#43ff00 108px,#54ff00 112px,#62ff00 116px,#6eff00 120px,#78ff00 124px,#82ff00 128px,#8bff00 132px,#94ff00 136px,#9cff00 140px,#a4ff00 144px,#abff00 148px,#b2ff00 152px,#b9ff00 156px,#c0ff00 160px,#c7ff00 164px,#cdff00 168px,#d3ff00 172px,#d9ff00 176px,#e0ff00 180px,#e6ff00 184px,#ebff00 188px,#f1ff00 192px,#f7ff00 196px,#fdff00 200px,#fffc00 204px,#fff600 208px,#fff100 212px,#ffed00 216px,#ffe800 220px,#ffe400 224px,#ffdf00 228px,#ffdb00 232px,#ffd700 236px,#ffd400 240px,#ffd000 244px,#ffcd00 248px,#ffc900 252px,#ffc600 256px,#ffc300 260px,#ffc000 264px,#ffbd00 268px,#ffba00 272px,#ffb700 276px,#ffb400 280px,#ffb200 284px,#ffaf00 288px,#ffad00 292px,#ffaa00 296px,#ffa800 300px,#ffa600 304px,#ffa300 308px,#ffa100 312px,#ff9f00 316px)"></i><i style="top:42px;height:2px;background:linear-gradient(90deg,#00ff77 0px,#00ff75 4px,#00ff72 8px,#00ff6f 12px,#00ff6c 16px,#00ff69 20px,#00ff66 24px,#00ff63 28px,#00ff5f 32px,#00ff5b 36px,#00ff57 40px,#00ff53 44px,#00ff4e 48px,#00ff49 52px,#00ff43 56px,#00ff3d 60px,#00ff35 64px,#00ff2c 68px,#00ff20 72px,#00ff00 76px,#00ff00 80px,#00ff00 84px,#00ff00 88px,#00ff00 92px,#00ff00 96px,#00ff00 100px,#2dff00 104px,#45ff00 108px,#55ff00 112px,#63ff00 116px,#6fff00 120px,#7aff00 124px,#83ff00 128px,#8cff00 132px,#95ff00 136px,#9dff00 140px,#a5ff00 144px,#acff00 148px,#b3ff00 152px,#baff00 156px,#c1ff00 160px,#c8ff00 164px,#ceff00 168px,#d5ff00 172px,#dbff00 176px,#e1ff00 180px,#e7ff00 184px,#edff00 188px,#f3ff00 192px,#f8ff00 196px,#feff00 200px,#fffa00 204px,#fff500 208px,#fff000 212px,#ffeb00 216px,#ffe700 220px,#ffe200 224px,#ffde00 228px,#ffda00 232px,#ffd600 236px,#ffd200 240px,#ffcf00 244px,#ffcb00 248px,#ffc800 252px,#ffc500 256px,#ffc200 260px,#ffbf00 264px,#ffbc00 268px,#ffb900 272px,#ffb600 276px,#ffb300 280px,#ffb100 284px,#ffae00 288px,#ffac00 292px,#ffa900 296px,#ffa700 300px,#ffa500 304px,#ffa200 308px,#ffa000 312px,#ff9e00 316px)"></i><i style="top:44px;height:2px;background:linear-gradient(90deg,#00ff79 0px,#00ff77 4px,#00ff74 8px,#00ff71 12px,#00ff6e 16px,#00ff6b 20px,#00ff68 24px,#00ff65 28px,#00ff61 32px,#00ff5e 36px,#00ff5a 40px,#00ff56 44px,#00ff51 48px,#00ff4c 52px,#00ff47 56px,#00ff41 60px,#00ff3a 64px,#00ff31 68px,#00ff27 72px,#00ff16 76px,#00ff00 80px,#00ff00 84px,#00ff00 88px,#00ff00 92px,#00ff00 96px,#00ff00 100px,#2fff00 104px,#46ff00 108px,#57ff00 112px,#64ff00 116px,#70ff00 120px,#7bff00 124px,#84ff00 128px,#8eff00 132px,#96ff00 136px,#9eff00 140px,#a6ff00 144px,#adff00 148px,#b5ff00 152px,#bcff00 156px,#c2ff00 160px,#c9ff00 164px,#d0ff00 168px,#d6ff00 172px,#dcff00 176px,#e2ff00 180px,#e8ff00 184px,#eeff00 188px,#f4ff00 192px,#faff00 196px,#fffe00 200px,#fff900 204px,#fff400 208px,#ffef00 212px,#ffea00 216px,#ffe500 220px,#ffe100 224px,#ffdd00 228px,#ffd900 232px,#ffd500 236px,#ffd100 240px,#ffce00 244px,#ffca00 248px,#ffc700 252px,#ffc400 256px,#ffc100 260px,#ffbe00 264px,#ffbb00 268px,#ffb800 272px,#ffb500 276px,#ffb200 280px,#ffb000 284px,#ffad00 288px,#ffab00 292px,#ffa800 296px,#ffa600 300px,#ffa300 304px,#ffa100 308px,#ff9f00 312px,#ff9d00 316px)"></i><i style="top:46px;height:2px;background:linear-gradient(90deg,#00ff7b 0px,#00ff79 4px,#00ff76 8px,#00ff73 12px,#00ff70 16px,#00ff6e 20px,#00ff6a 24px,#00ff67 28px,#00ff64 32px,#00ff60 36px,#00ff5c 40px,#00ff58 44px,#00ff54 48px,#00ff4f 52px,#00ff4a 56px,#00ff44 60px,#00ff3e 64px,#00ff36 68px,#00ff2d 72px,#00ff20 76px,#00ff00 80px,#00ff00 84px,#00ff00 88px,#00ff00 92px,#00ff00 96px,#00ff00 100px,#32ff00 104px,#48ff00 108px,#58ff00 112px,#66ff00 116px,#71ff00 120px,#7cff00 124px,#86ff00 128px,#8fff00 132px,#97ff00 136px,#9fff00 140px,#a7ff00 144px,#afff00 148px,#b6ff00 152px,#bdff00 156px,#c4ff00 160px,#caff00 164px,#d1ff00 168px,#d7ff00 172px,#ddff00 176px,#e4ff00 180px,#eaff00 184px,#f0ff00 188px,#f5ff00 192px,#fbff00 196px,#fffd00 200px,#fff800 204px,#fff200 208px,#ffed00 212px,#ffe900 216px,#ffe400 220px,#ffe000 224px,#ffdc00 228px,#ffd800 232px,#ffd400 236px,#ffd000 240px,#ffcd00 244px,#ffc900 248px,#ffc600 252px,#ffc300 256px,#ffbf00 260px,#ffbc00 264px,#ffba00 268px,#ffb700 272px,#ffb400 276px,#ffb100 280px,#ffaf00 284px,#ffac00 288px,#ffaa00 292px,#ffa700 296px,#ffa500 300px,#ffa200 304px,#ffa000 308px,#ff9e00 312px,#ff9c00 316px)"></i><i style="top:48px;height:2px;background:linear-gradient(90deg,#00ff7c 0px,#00ff7a 4px,#00ff78 8px,#00ff75 12px,#00ff72 16px,#00ff70 20px,#00ff6d 24px,#00ff69 28px,#00ff66 32px,#00ff62 36px,#00ff5f 40px,#00ff5b 44px,#00ff57 48px,#00ff52 52px,#00ff4d 56px,#00ff48 60px,#00ff41 64px,#00ff3a 68px,#00ff32 72px,#00ff28 76px,#00ff17 80px,#00ff00 84px,#00ff00 88px,#00ff00 92px,#00ff00 96px,#00ff00 100px,#34ff00 104px,#4aff00 108px,#5aff00 112px,#67ff00 116px,#73ff00 120px,#7dff00 124px,#87ff00 128px,#90ff00 132px,#98ff00 136px,#a1ff00 140px,#a8ff00 144px,#b0ff00 148px,#b7ff00 152px,#beff00 156px,#c5ff00 160px,#ccff00 164px,#d2ff00 168px,#d8ff00 172px,#dfff00 176px,#e5ff00 180px,#ebff00 184px,#f1ff00 188px,#f7ff00 192px,#fdff00 196px,#fffc00 200px,#fff600 204px,#fff100 208px,#ffec00 212px,#ffe700 216px,#ffe300 220px,#ffde00 224px,#ffda00 228px,#ffd600 232px,#ffd300 236px,#ffcf00 240px,#ffcb00 244px,#ffc800 248px,#ffc500 252px,#ffc100 256px,#ffbe00 260px,#ffbb00 264px,#ffb800 268px,#ffb600 272px,#ffb300 276px,#ffb000 280px,#ffae00 284px,#ffab00 288px,#ffa900 292px,#ffa600 296px,#ffa400 300px,#ffa100 304px,#ff9f00 308px,#ff9d00 312px,#ff9b00 316px)"></i><i style="top:50px;height:2px;background:linear-gradient(90deg,#00ff7e 0px,#00ff7c 4px,#00ff7a 8px,#00ff77 12px,#00ff74 16px,#00ff72 20px,#00ff6f 24px,#00ff6b 28px,#00ff68 32px,#00ff65 36px,#00ff61 40px,#00ff5d 44px,#00ff59 48px,#00ff55 52px,#00ff50 56px,#00ff4b 60px,#00ff45 64px,#00ff3e 68px,#00ff37 72px,#00ff2e 76px,#00ff21 80px,#00ff00 84px,#00ff00 88px,#00ff00 92px,#00ff00 96px,#00ff00 100px,#36ff00 104px,#4bff00 108px,#5bff00 112px,#68ff00 116px,#74ff00 120px,#7eff00 124px,#88ff00 128px,#91ff00 132px,#9aff00 136px,#a2ff00 140px,#aaff00 144px,#b1ff00 148px,#b8ff00 152px,#bfff00 156px,#c6ff00 160px,#cdff00 164px,#d3ff00 168px,#daff00 172px,#e0ff00 176px,#e6ff00 180px,#ecff00 184px,#f2ff00 188px,#f8ff00 192px,#feff00 196px,#fffa00 200px,#fff500 204px,#fff000 208px,#ffeb00 212px,#ffe600 216px,#ffe100 220px,#ffdd00 224px,#ffd900 228px,#ffd500 232px,#ffd100 236px,#ffce00 240px,#ffca00 244px,#ffc700 248px,#ffc300 252px,#ffc000 256px,#ffbd00 260px,#ffba00 264px,#ffb700 268px,#ffb400 272px,#ffb200 276px,#ffaf00 280px,#ffac00 284px,#ffaa00 288px,#ffa700 292px,#ffa500 296px,#ffa300 300px,#ffa000 304px,#ff9e00 308px,#ff9c00 312px,#ff9a00 316px)"></i><i style="top:52px;height:2px;background:linear-gradient(90deg,#00ff80 0px,#00ff7e 4px,#00ff7c 8px,#00ff79 12px,#00ff76 16px,#00ff74 20px,#00ff71 24px,#00ff6e 28px,#00ff6a 32px,#00ff67 36px,#00ff63 40px,#00ff60 44px,#00ff5c 48px,#00ff57 52px,#00ff53 56px,#00ff4e 60px,#00ff48 64px,#00ff42 68px,#00ff3b 72px,#00ff33 76px,#00ff28 80px,#00ff18 84px,#00ff00 88px,#00ff00 92px,#00ff00 96px,#0dff00 100px,#38ff00 104px,#4dff00 108px,#5cff00 112px,#69ff00 116px,#75ff00 120px,#80ff00 124px,#89ff00 128px,#92ff00 132px,#9bff00 136px,#a3ff00 140px,#abff00 144px,#b2ff00 148px,#baff00 152px,#c1ff00 156px,#c7ff00 160px,#ceff00 164px,#d5ff00 168px,#dbff00 172px,#e1ff00 176px,#e8ff00 180px,#eeff00 184px,#f4ff00 188px,#faff00 192px,#fffe00 196px,#fff900 200px,#fff300 204px,#ffee00 208px,#ffe900 212px,#ffe500 216px,#ffe000 220px,#ffdc00 224px,#ffd800 228px,#ffd400 232px,#ffd000 236px,#ffcc00 240px,#ffc900 244px,#ffc600 248px,#ffc200 252px,#ffbf00 256px,#ffbc00 260px,#ffb900 264px,#ffb600 268px,#ffb300 272px,#ffb100 276px,#ffae00 280px,#ffab00 284px,#ffa900 288px,#ffa600 292px,#ffa400 296px,#ffa200 300px,#ff9f00 304px,#ff9d00 308px,#ff9b00 312px,#ff9900 316px)"></i><i style="top:54px;height:2px;background:linear-gradient(90deg,#00ff82 0px,#00ff80 4px,#00ff7d 8px,#00ff7b 12px,#00ff78 16px,#00ff76 20px,#00ff73 24px,#00ff70 28px,#00ff6d 32px,#00ff69 36px,#00ff66 40px,#00ff62 44px,#00ff5e 48px,#00ff5a 52px,#00ff56 56px,#00ff51 60px,#00ff4c 64px,#00ff46 68px,#00ff3f 72px,#00ff38 76px,#00ff2e 80px,#00ff22 84px,#00ff00 88px,#00ff00 92px,#00ff00 96px,#15ff00 100px,#3aff00 104px,#4eff00 108px,#5eff00 112px,#6bff00 116px,#76ff00 120px,#81ff00 124px,#8aff00 128px,#93ff00 132px,#9cff00 136px,#a4ff00 140px,#acff00 144px,#b4ff00 148px,#bbff00 152px,#c2ff00 156px,#c9ff00 160px,#cfff00 164px,#d6ff00 168px,#ddff00 172px,#e3ff00 176px,#e9ff00 180px,#efff00 184px,#f5ff00 188px,#fbff00 192px,#fffd00 196px,#fff700 200px,#fff200 204px,#ffed00 208px,#ffe800 212px,#ffe300 216px,#ffdf00 220px,#ffdb00 224px,#ffd700 228px,#ffd300 232px,#ffcf00 236px,#ffcb00 240px,#ffc800 244px,#ffc400 248px,#ffc100 252px,#ffbe00 256px,#ffbb00 260px,#ffb800 264px,#ffb500 268px,#ffb200 272px,#ffb000 276px,#ffad00 280px,#ffaa00 284px,#ffa800 288px,#ffa500 292px,#ffa300 296px,#ffa100 300px,#ff9e00 304px,#ff9c00 308px,#ff9a00 312px,#ff9800 316px)"></i><i style="top:56px;height:2px;background:linear-gradient(90deg,#00ff84 0px,#00ff82 4px,#00ff7f 8px,#00ff7d 12px,#00ff7a 16px,#00ff78 20px,#00ff75 24px,#00ff72 28px,#00ff6f 32px,#00ff6b 36px,#00ff68 40px,#00ff65 44px,#00ff61 48px,#00ff5d 52px,#00ff58 56px,#00ff54 60px,#00ff4f 64px,#00ff49 68px,#00ff43 72px,#00ff3c 76px,#00ff34 80px,#00ff29 84px,#00ff19 88px,#00ff00 92px,#00ff00 96px,#1aff00 100px,#3cff00 104px,#50ff00 108px,#5fff00 112px,#6cff00 116px,#78ff00 120px,#82ff00 124px,#8cff00 128px,#95ff00 132px,#9dff00 136px,#a5ff00 140px,#adff00 144px,#b5ff00 148px,#bcff00 152px,#c3ff00 156px,#caff00 160px,#d1ff00 164px,#d7ff00 168px,#deff00 172px,#e4ff00 176px,#ebff00 180px,#f1ff00 184px,#f7ff00 188px,#fdff00 192px,#fffb00 196px,#fff600 200px,#fff000 204px,#ffeb00 208px,#ffe600 212px,#ffe200 216px,#ffdd00 220px,#ffd900 224px,#ffd500 228px,#ffd100 232px,#ffce00 236px,#ffca00 240px,#ffc700 244px,#ffc300 248px,#ffc000 252px,#ffbd00 256px,#ffba00 260px,#ffb700 264px,#ffb400 268px,#ffb100 272px,#ffae00 276px,#ffac00 280px,#ffa900 284px,#ffa700 288px,#ffa400 292px,#ffa200 296px,#ffa000 300px,#ff9d00 304px,#ff9b00 308px,#ff9900 312px,#ff9700 316px)"></i><i style="top:58px;height:2px;background:linear-gradient(90deg,#00ff85 0px,#00ff84 4px,#00ff81 8px,#00ff7f 12px,#00ff7c 16px,#00ff7a 20px,#00ff77 24px,#00ff74 28px,#00ff71 32px,#00ff6e 36px,#00ff6a 40px,#00ff67 44px,#00ff63 48px,#00ff5f 52px,#00ff5b 56px,#00ff57 60px,#00ff52 64px,#00ff4c 68px,#00ff47 72px,#00ff40 76px,#00ff38 80px,#00ff2f 84px,#00ff22 88px,#00ff00 92px,#00ff00 96px,#1fff00 100px,#3eff00 104px,#51ff00 108px,#61ff00 112px,#6dff00 116px,#79ff00 120px,#83ff00 124px,#8dff00 128px,#96ff00 132px,#9eff00 136px,#a7ff00 140px,#aeff00 144px,#b6ff00 148px,#bdff00 152px,#c4ff00 156px,#cbff00 160px,#d2ff00 164px,#d9ff00 168px,#dfff00 172px,#e6ff00 176px,#ecff00 180px,#f2ff00 184px,#f8ff00 188px,#feff00 192px,#fffa00 196px,#fff400 200px,#ffef00 204px,#ffea00 208px,#ffe500 212px,#ffe100 216px,#ffdc00 220px,#ffd800 224px,#ffd400 228px,#ffd000 232px,#ffcc00 236px,#ffc900 240px,#ffc500 244px,#ffc200 248px,#ffbf00 252px,#ffbc00 256px,#ffb900 260px,#ffb600 264px,#ffb300 268px,#ffb000 272px,#ffad00 276px,#ffab00 280px,#ffa800 284px,#ffa600 288px,#ffa300 292px,#ffa100 296px,#ff9e00 300px,#ff9c00 304px,#ff9a00 308px,#ff9800 312px,#ff9600 316px)"></i><i style="top:60px;height:2px;background:linear-gradient(90deg,#00ff87 0px,#00ff85 4px,#00ff83 8px,#00ff81 12px,#00ff7e 16px,#00ff7b 20px,#00ff79 24px,#00ff76 28px,#00ff73 32px,#00ff70 36px,#00ff6d 40px,#00ff69 44px,#00ff66 48px,#00ff62 52px,#00ff5e 56px,#00ff59 60px,#00ff55 64px,#00ff50 68px,#00ff4a 72px,#00ff44 76px,#00ff3d 80px,#00ff34 84px,#00ff2a 88px,#00ff19 92px,#00ff00 96px,#22ff00 100px,#40ff00 104px,#53ff00 108px,#62ff00 112px,#6fff00 116px,#7aff00 120px,#84ff00 124px,#8eff00 128px,#97ff00 132px,#a0ff00 136px,#a8ff00 140px,#b0ff00 144px,#b7ff00 148px,#bfff00 152px,#c6ff00 156px,#cdff00 160px,#d4ff00 164px,#daff00 168px,#e1ff00 172px,#e7ff00 176px,#edff00 180px,#f4ff00 184px,#faff00 188px,#fffe00 192px,#fff800 196px,#fff300 200px,#ffed00 204px,#ffe800 208px,#ffe400 212px,#ffdf00 216px,#ffdb00 220px,#ffd700 224px,#ffd300 228px,#ffcf00 232px,#ffcb00 236px,#ffc800 240px,#ffc400 244px,#ffc100 248px,#ffbe00 252px,#ffba00 256px,#ffb700 260px,#ffb400 264px,#ffb200 268px,#ffaf00 272px,#ffac00 276px,#ffaa00 280px,#ffa700 284px,#ffa400 288px,#ffa200 292px,#ffa000 296px,#ff9d00 300px,#ff9b00 304px,#ff9900 308px,#ff9700 312px,#ff9500 316px)"></i><i style="top:62px;height:2px;background:linear-gradient(90deg,#00ff89 0px,#00ff87 4px,#00ff85 8px,#00ff82 12px,#00ff80 16px,#00ff7d 20px,#00ff7b 24px,#00ff78 28px,#00ff75 32px,#00ff72 36px,#00ff6f 40px,#00ff6c 44px,#00ff68 48px,#00ff64 52px,#00ff60 56px,#00ff5c 60px,#00ff58 64px,#00ff53 68px,#00ff4d 72px,#00ff48 76px,#00ff41 80px,#00ff39 84px,#00ff30 88px,#00ff23 92px,#00ff04 96px,#26ff00 100px,#42ff00 104px,#55ff00 108px,#63ff00 112px,#70ff00 116px,#7bff00 120px,#86ff00 124px,#8fff00 128px,#98ff00 132px,#a1ff00 136px,#a9ff00 140px,#b1ff00 144px,#b9ff00 148px,#c0ff00 152px,#c7ff00 156px,#ceff00 160px,#d5ff00 164px,#dcff00 168px,#e2ff00 172px,#e9ff00 176px,#efff00 180px,#f5ff00 184px,#fbff00 188px,#fffd00 192px,#fff700 196px,#fff100 200px,#ffec00 204px,#ffe700 208px,#ffe200 212px,#ffde00 216px,#ffd900 220px,#ffd500 224px,#ffd100 228px,#ffce00 232px,#ffca00 236px,#ffc600 240px,#ffc300 244px,#ffc000 248px,#ffbc00 252px,#ffb900 256px,#ffb600 260px,#ffb300 264px,#ffb000 268px,#ffae00 272px,#ffab00 276px,#ffa800 280px,#ffa600 284px,#ffa300 288px,#ffa100 292px,#ff9f00 296px,#ff9c00 300px,#ff9a00 304px,#ff9800 308px,#ff9600 312px,#ff9400 316px)"></i><i style="top:64px;height:2px;background:linear-gradient(90deg,#00ff8b 0px,#00ff89 4px,#00ff87 8px,#00ff84 12px,#00ff82 16px,#00ff7f 20px,#00ff7d 24px,#00ff7a 28px,#00ff77 32px,#00ff74 36px,#00ff71 40px,#00ff6e 44px,#00ff6a 48px,#00ff67 52px,#00ff63 56px,#00ff5f 60px,#00ff5a 64px,#00ff56 68px,#00ff51 72px,#00ff4b 76px,#00ff45 80px,#00ff3e 84px,#00ff35 88px,#00ff2a 92px,#00ff1a 96px,#29ff00 100px,#44ff00 104px,#56ff00 108px,#65ff00 112px,#71ff00 116px,#7dff00 120px,#87ff00 124px,#91ff00 128px,#9aff00 132px,#a2ff00 136px,#aaff00 140px,#b2ff00 144px,#baff00 148px,#c1ff00 152px,#c8ff00 156px,#cfff00 160px,#d6ff00 164px,#ddff00 168px,#e4ff00 172px,#eaff00 176px,#f0ff00 180px,#f7ff00 184px,#fdff00 188px,#fffb00 192px,#fff500 196px,#fff000 200px,#ffeb00 204px,#ffe600 208px,#ffe100 212px,#ffdc00 216px,#ffd800 220px,#ffd400 224px,#ffd000 228px,#ffcc00 232px,#ffc900 236px,#ffc500 240px,#ffc200 244px,#ffbe00 248px,#ffbb00 252px,#ffb800 256px,#ffb500 260px,#ffb200 264px,#ffaf00 268px,#ffad00 272px,#ffaa00 276px,#ffa700 280px,#ffa500 284px,#ffa200 288px,#ffa000 292px,#ff9e00 296px,#ff9b00 300px,#ff9900 304px,#ff9700 308px,#ff9500 312px,#ff9200 316px)"></i><i style="top:66px;height:2px;background:linear-gradient(90deg,#00ff8d 0px,#00ff8b 4px,#00ff89 8px,#00ff86 12px,#00ff84 16px,#00ff81 20px,#00ff7f 24px,#00ff7c 28px,#00ff79 32px,#00ff76 36px,#00ff73 40px,#00ff70 44px,#00ff6d 48px,#00ff69 52px,#00ff65 56px,#00ff61 60px,#00ff5d 64px,#00ff59 68px,#00ff54 72px,#00ff4e 76px,#00ff48 80px,#00ff42 84px,#00ff3a 88px,#00ff30 92px,#00ff24 96px,#2cff07 100px,#46ff00 104px,#58ff00 108px,#66ff00 112px,#73ff00 116px,#7eff00 120px,#88ff00 124px,#92ff00 128px,#9bff00 132px,#a4ff00 136px,#acff00 140px,#b4ff00 144px,#bbff00 148px,#c3ff00 152px,#caff00 156px,#d1ff00 160px,#d8ff00 164px,#deff00 168px,#e5ff00 172px,#ecff00 176px,#f2ff00 180px,#f8ff00 184px,#feff00 188px,#fff900 192px,#fff400 196px,#ffee00 200px,#ffe900 204px,#ffe400 208px,#ffe000 212px,#ffdb00 216px,#ffd700 220px,#ffd300 224px,#ffcf00 228px,#ffcb00 232px,#ffc700 236px,#ffc400 240px,#ffc000 244px,#ffbd00 248px,#ffba00 252px,#ffb700 256px,#ffb400 260px,#ffb100 264px,#ffae00 268px,#ffab00 272px,#ffa900 276px,#ffa600 280px,#ffa400 284px,#ffa100 288px,#ff9f00 292px,#ff9c00 296px,#ff9a00 300px,#ff9800 304px,#ff9600 308px,#ff9300 312px,#ff9100 316px)"></i><i style="top:68px;height:2px;background:linear-gradient(90deg,#00ff8e 0px,#00ff8d 4px,#00ff8a 8px,#00ff88 12px,#00ff86 16px,#00ff83 20px,#00ff81 24px,#00ff7e 28px,#00ff7b 32px,#00ff78 36px,#00ff75 40px,#00ff72 44px,#00ff6f 48px,#00ff6c 52px,#00ff68 56px,#00ff64 60px,#00ff60 64px,#00ff5c 68px,#00ff57 72px,#00ff52 76px,#00ff4c 80px,#00ff46 84px,#00ff3e 88px,#00ff36 92px,#00ff2b 96px,#2fff1b 100px,#48ff00 104px,#59ff00 108px,#68ff00 112px,#74ff00 116px,#7fff00 120px,#8aff00 124px,#93ff00 128px,#9cff00 132px,#a5ff00 136px,#adff00 140px,#b5ff00 144px,#bdff00 148px,#c4ff00 152px,#cbff00 156px,#d2ff00 160px,#d9ff00 164px,#e0ff00 168px,#e7ff00 172px,#edff00 176px,#f3ff00 180px,#faff00 184px,#fffe00 188px,#fff800 192px,#fff200 196px,#ffed00 200px,#ffe800 204px,#ffe300 208px,#ffde00 212px,#ffda00 216px,#ffd500 220px,#ffd100 224px,#ffcd00 228px,#ffca00 232px,#ffc600 236px,#ffc300 240px,#ffbf00 244px,#ffbc00 248px,#ffb900 252px,#ffb600 256px,#ffb300 260px,#ffb000 264px,#ffad00 268px,#ffaa00 272px,#ffa800 276px,#ffa500 280px,#ffa300 284px,#ffa000 288px,#ff9e00 292px,#ff9b00 296px,#ff9900 300px,#ff9700 304px,#ff9500 308px,#ff9200 312px,#ff9000 316px)"></i><i style="top:70px;height:2px;background:linear-gradient(90deg,#00ff90 0px,#00ff8e 4px,#00ff8c 8px,#00ff8a 12px,#00ff88 16px,#00ff85 20px,#00ff83 24px,#00ff80 28px,#00ff7d 32px,#00ff7b 36px,#00ff78 40px,#00ff75 44px,#00ff71 48px,#00ff6e 52px,#00ff6a 56px,#00ff67 60px,#00ff63 64px,#00ff5e 68px,#00ff5a 72px,#00ff55 76px,#00ff4f 80px,#00ff49 84px,#00ff43 88px,#00ff3b 92px,#00ff31 96px,#31ff24 100px,#49ff09 104px,#5bff00 108px,#69ff00 112px,#75ff00 116px,#81ff00 120px,#8bff00 124px,#94ff00 128px,#9dff00 132px,#a6ff00 136px,#aeff00 140px,#b6ff00 144px,#beff00 148px,#c5ff00 152px,#cdff00 156px,#d4ff00 160px,#dbff00 164px,#e1ff00 168px,#e8ff00 172px,#efff00 176px,#f5ff00 180px,#fbff00 184px,#fffc00 188px,#fff600 192px,#fff100 196px,#ffeb00 200px,#ffe600 204px,#ffe100 208px,#ffdd00 212px,#ffd800 216px,#ffd400 220px,#ffd000 224px,#ffcc00 228px,#ffc800 232px,#ffc500 236px,#ffc100 240px,#ffbe00 244px,#ffbb00 248px,#ffb800 252px,#ffb400 256px,#ffb200 260px,#ffaf00 264px,#ffac00 268px,#ffa900 272px,#ffa600 276px,#ffa400 280px,#ffa100 284px,#ff9f00 288px,#ff9d00 292px,#ff9a00 296px,#ff9800 300px,#ff9600 304px,#ff9300 308px,#ff9100 312px,#ff8f00 316px)"></i><i style="top:72px;height:2px;background:linear-gradient(90deg,#00ff92 0px,#00ff90 4px,#00ff8e 8px,#00ff8c 12px,#00ff89 16px,#00ff87 20px,#00ff85 24px,#00ff82 28px,#00ff7f 32px,#00ff7d 36px,#00ff7a 40px,#00ff77 44px,#00ff74 48px,#00ff70 52px,#00ff6d 56px,#00ff69 60px,#00ff65 64px,#00ff61 68px,#00ff5d 72px,#00ff58 76px,#00ff53 80px,#00ff4d 84px,#00ff47 88px,#00ff3f 92px,#00ff37 96px,#34ff2c 100px,#4bff1c 104px,#5cff00 108px,#6aff00 112px,#77ff00 116px,#82ff00 120px,#8cff00 124px,#96ff00 128px,#9fff00 132px,#a7ff00 136px,#b0ff00 140px,#b8ff00 144px,#bfff00 148px,#c7ff00 152px,#ceff00 156px,#d5ff00 160px,#dcff00 164px,#e3ff00 168px,#eaff00 172px,#f0ff00 176px,#f7ff00 180px,#fdff00 184px,#fffb00 188px,#fff500 192px,#ffef00 196px,#ffea00 200px,#ffe500 204px,#ffe000 208px,#ffdb00 212px,#ffd700 216px,#ffd300 220px,#ffcf00 224px,#ffcb00 228px,#ffc700 232px,#ffc400 236px,#ffc000 240px,#ffbd00 244px,#ffb900 248px,#ffb600 252px,#ffb300 256px,#ffb000 260px,#ffad00 264px,#ffab00 268px,#ffa800 272px,#ffa500 276px,#ffa300 280px,#ffa000 284px,#ff9e00 288px,#ff9b00 292px,#ff9900 296px,#ff9700 300px,#ff9500 304px,#ff9200 308px,#ff9000 312px,#ff8e00 316px)"></i><i style="top:74px;height:2px;background:linear-gradient(90deg,#00ff94 0px,#00ff92 4px,#00ff90 8px,#00ff8e 12px,#00ff8b 16px,#00ff89 20px,#00ff87 24px,#00ff84 28px,#00ff81 32px,#00ff7f 36px,#00ff7c 40px,#00ff79 44px,#00ff76 48px,#00ff73 52px,#00ff6f 56px,#00ff6c 60px,#00ff68 64px,#00ff64 68px,#00ff5f 72px,#00ff5b 76px,#00ff56 80px,#00ff50 84px,#00ff4a 88px,#00ff43 92px,#00ff3c 96px,#36ff32 100px,#4dff25 104px,#5eff0b 108px,#6cff00 112px,#78ff00 116px,#83ff00 120px,#8dff00 124px,#97ff00 128px,#a0ff00 132px,#a9ff00 136px,#b1ff00 140px,#b9ff00 144px,#c1ff00 148px,#c8ff00 152px,#cfff00 156px,#d7ff00 160px,#ddff00 164px,#e4ff00 168px,#ebff00 172px,#f2ff00 176px,#f8ff00 180px,#ffff00 184px,#fff900 188px,#fff300 192px,#ffee00 196px,#ffe800 200px,#ffe300 204px,#ffdf00 208px,#ffda00 212px,#ffd600 216px,#ffd100 220px,#ffcd00 224px,#ffca00 228px,#ffc600 232px,#ffc200 236px,#ffbf00 240px,#ffbb00 244px,#ffb800 248px,#ffb500 252px,#ffb200 256px,#ffaf00 260px,#ffac00 264px,#ffaa00 268px,#ffa700 272px,#ffa400 276px,#ffa200 280px,#ff9f00 284px,#ff9d00 288px,#ff9a00 292px,#ff9800 296px,#ff9600 300px,#ff9300 304px,#ff9100 308px,#ff8f00 312px,#ff8d00 316px)"></i><i style="top:76px;height:2px;background:linear-gradient(90deg,#00ff95 0px,#00ff94 4px,#00ff92 8px,#00ff8f 12px,#00ff8d 16px,#00ff8b 20px,#00ff89 24px,#00ff86 28px,#00ff83 32px,#00ff81 36px,#00ff7e 40px,#00ff7b 44px,#00ff78 48px,#00ff75 52px,#00ff72 56px,#00ff6e 60px,#00ff6a 64px,#00ff66 68px,#00ff62 72px,#00ff5e 76px,#00ff59 80px,#00ff54 84px,#00ff4e 88px,#00ff47 92px,#00ff40 96px,#38ff37 100px,#4fff2d 104px,#5fff1c 108px,#6dff00 112px,#79ff00 116px,#84ff00 120px,#8fff00 124px,#98ff00 128px,#a1ff00 132px,#aaff00 136px,#b2ff00 140px,#baff00 144px,#c2ff00 148px,#caff00 152px,#d1ff00 156px,#d8ff00 160px,#dfff00 164px,#e6ff00 168px,#edff00 172px,#f3ff00 176px,#faff00 180px,#fffe00 184px,#fff700 188px,#fff200 192px,#ffec00 196px,#ffe700 200px,#ffe200 204px,#ffdd00 208px,#ffd900 212px,#ffd400 216px,#ffd000 220px,#ffcc00 224px,#ffc800 228px,#ffc500 232px,#ffc100 236px,#ffbe00 240px,#ffba00 244px,#ffb700 248px,#ffb400 252px,#ffb100 256px,#ffae00 260px,#ffab00 264px,#ffa800 268px,#ffa600 272px,#ffa300 276px,#ffa000 280px,#ff9e00 284px,#ff9c00 288px,#ff9900 292px,#ff9700 296px,#ff9500 300px,#ff9200 304px,#ff9000 308px,#ff8e00 312px,#ff8c00 316px)"></i><i style="top:78px;height:2px;background:linear-gradient(90deg,#00ff97 0px,#00ff96 4px,#00ff93 8px,#00ff91 12px,#00ff8f 16px,#00ff8d 20px,#00ff8a 24px,#00ff88 28px,#00ff85 32px,#00ff83 36px,#00ff80 40px,#00ff7d 44px,#00ff7a 48px,#00ff77 52px,#00ff74 56px,#00ff70 60px,#00ff6d 64px,#00ff69 68px,#00ff65 72px,#00ff61 76px,#00ff5c 80px,#00ff57 84px,#00ff51 88px,#00ff4b 92px,#0aff44 96px,#3bff3c 100px,#50ff33 104px,#61ff26 108px,#6fff0c 112px,#7bff00 116px,#86ff00 120px,#90ff00 124px,#9aff00 128px,#a3ff00 132px,#abff00 136px,#b4ff00 140px,#bcff00 144px,#c3ff00 148px,#cbff00 152px,#d2ff00 156px,#d9ff00 160px,#e0ff00 164px,#e7ff00 168px,#eeff00 172px,#f5ff00 176px,#fbff00 180px,#fffc00 184px,#fff600 188px,#fff000 192px,#ffeb00 196px,#ffe500 200px,#ffe000 204px,#ffdc00 208px,#ffd700 212px,#ffd300 216px,#ffcf00 220px,#ffcb00 224px,#ffc700 228px,#ffc300 232px,#ffc000 236px,#ffbc00 240px,#ffb900 244px,#ffb600 248px,#ffb300 252px,#ffb000 256px,#ffad00 260px,#ffaa00 264px,#ffa700 268px,#ffa400 272px,#ffa200 276px,#ff9f00 280px,#ff9d00 284px,#ff9a00 288px,#ff9800 292px,#ff9600 296px,#ff9300 300px,#ff9100 304px,#ff8f00 308px,#ff8d00 312px,#ff8b00 316px)"></i><i style="top:80px;height:2px;background:linear-gradient(90deg,#00ff99 0px,#00ff97 4px,#00ff95 8px,#00ff93 12px,#00ff91 16px,#00ff8f 20px,#00ff8c 24px,#00ff8a 28px,#00ff88 32px,#00ff85 36px,#00ff82 40px,#00ff7f 44px,#00ff7d 48px,#00ff79 52px,#00ff76 56px,#00ff73 60px,#00ff6f 64px,#00ff6c 68px,#00ff68 72px,#00ff63 76px,#00ff5f 80px,#00ff5a 84px,#00ff55 88px,#00ff4f 92px,#14ff48 96px,#3dff41 100px,#52ff38 104px,#62ff2d 108px,#70ff1d 112px,#7cff00 116px,#87ff00 120px,#91ff00 124px,#9bff00 128px,#a4ff00 132px,#adff00 136px,#b5ff00 140px,#bdff00 144px,#c5ff00 148px,#ccff00 152px,#d4ff00 156px,#dbff00 160px,#e2ff00 164px,#e9ff00 168px,#f0ff00 172px,#f7ff00 176px,#fdff00 180px,#fffa00 184px,#fff400 188px,#ffef00 192px,#ffe900 196px,#ffe400 200px,#ffdf00 204px,#ffda00 208px,#ffd600 212px,#ffd100 216px,#ffcd00 220px,#ffc900 224px,#ffc600 228px,#ffc200 232px,#ffbe00 236px,#ffbb00 240px,#ffb800 244px,#ffb500 248px,#ffb100 252px,#ffae00 256px,#ffac00 260px,#ffa900 264px,#ffa600 268px,#ffa300 272px,#ffa100 276px,#ff9e00 280px,#ff9c00 284px,#ff9900 288px,#ff9700 292px,#ff9500 296px,#ff9200 300px,#ff9000 304px,#ff8e00 308px,#ff8c00 312px,#ff8a00 316px)"></i><i style="top:82px;height:2px;background:linear-gradient(90deg,#00ff9b 0px,#00ff99 4px,#00ff97 8px,#00ff95 12px,#00ff93 16px,#00ff91 20px,#00ff8e 24px,#00ff8c 28px,#00ff8a 32px,#00ff87 36px,#00ff84 40px,#00ff82 44px,#00ff7f 48px,#00ff7c 52px,#00ff79 56px,#00ff75 60px,#00ff72 64px,#00ff6e 68px,#00ff6a 72px,#00ff66 76px,#00ff62 80px,#00ff5d 84px,#00ff58 88px,#00ff53 92px,#1aff4c 96px,#3fff45 100px,#54ff3d 104px,#64ff34 108px,#71ff27 112px,#7dff0d 116px,#89ff00 120px,#93ff00 124px,#9cff00 128px,#a5ff00 132px,#aeff00 136px,#b6ff00 140px,#bfff00 144px,#c6ff00 148px,#ceff00 152px,#d5ff00 156px,#dcff00 160px,#e4ff00 164px,#ebff00 168px,#f1ff00 172px,#f8ff00 176px,#ffff00 180px,#fff900 184px,#fff300 188px,#ffed00 192px,#ffe800 196px,#ffe200 200px,#ffdd00 204px,#ffd900 208px,#ffd400 212px,#ffd000 216px,#ffcc00 220px,#ffc800 224px,#ffc400 228px,#ffc100 232px,#ffbd00 236px,#ffba00 240px,#ffb600 244px,#ffb300 248px,#ffb000 252px,#ffad00 256px,#ffaa00 260px,#ffa700 264px,#ffa500 268px,#ffa200 272px,#ff9f00 276px,#ff9d00 280px,#ff9a00 284px,#ff9800 288px,#ff9600 292px,#ff9300 296px,#ff9100 300px,#ff8f00 304px,#ff8d00 308px,#ff8b00 312px,#ff8900 316px)"></i><i style="top:84px;height:2px;background:linear-gradient(90deg,#00ff9d 0px,#00ff9b 4px,#00ff99 8px,#00ff97 12px,#00ff95 16px,#00ff93 20px,#00ff90 24px,#00ff8e 28px,#00ff8c 32px,#00ff89 36px,#00ff86 40px,#00ff84 44px,#00ff81 48px,#00ff7e 52px,#00ff7b 56px,#00ff78 60px,#00ff74 64px,#00ff71 68px,#00ff6d 72px,#00ff69 76px,#00ff65 80px,#00ff60 84px,#00ff5b 88px,#00ff56 92px,#1fff50 96px,#41ff4a 100px,#55ff42 104px,#65ff39 108px,#73ff2e 112px,#7fff1e 116px,#8aff00 120px,#94ff00 124px,#9eff00 128px,#a7ff00 132px,#b0ff00 136px,#b8ff00 140px,#c0ff00 144px,#c8ff00 148px,#cfff00 152px,#d7ff00 156px,#deff00 160px,#e5ff00 164px,#ecff00 168px,#f3ff00 172px,#faff00 176px,#fffd00 180px,#fff700 184px,#fff100 188px,#ffeb00 192px,#ffe600 196px,#ffe100 200px,#ffdc00 204px,#ffd700 208px,#ffd300 212px,#ffcf00 216px,#ffcb00 220px,#ffc700 224px,#ffc300 228px,#ffbf00 232px,#ffbc00 236px,#ffb800 240px,#ffb500 244px,#ffb200 248px,#ffaf00 252px,#ffac00 256px,#ffa900 260px,#ffa600 264px,#ffa400 268px,#ffa100 272px,#ff9e00 276px,#ff9c00 280px,#ff9900 284px,#ff9700 288px,#ff9500 292px,#ff9200 296px,#ff9000 300px,#ff8e00 304px,#ff8c00 308px,#ff8900 312px,#ff8700 316px)"></i><i style="top:86px;height:2px;background:linear-gradient(90deg,#00ff9e 0px,#00ff9d 4px,#00ff9b 8px,#00ff99 12px,#00ff97 16px,#00ff94 20px,#00ff92 24px,#00ff90 28px,#00ff8e 32px,#00ff8b 36px,#00ff89 40px,#00ff86 44px,#00ff83 48px,#00ff80 52px,#00ff7d 56px,#00ff7a 60px,#00ff77 64px,#00ff73 68px,#00ff70 72px,#00ff6c 76px,#00ff68 80px,#00ff63 84px,#00ff5e 88px,#00ff59 92px,#23ff54 96px,#43ff4d 100px,#57ff46 104px,#67ff3e 108px,#74ff35 112px,#80ff27 116px,#8bff0f 120px,#95ff00 124px,#9fff00 128px,#a8ff00 132px,#b1ff00 136px,#b9ff00 140px,#c1ff00 144px,#c9ff00 148px,#d1ff00 152px,#d8ff00 156px,#e0ff00 160px,#e7ff00 164px,#eeff00 168px,#f5ff00 172px,#fcff00 176px,#fffc00 180px,#fff500 184px,#ffef00 188px,#ffea00 192px,#ffe400 196px,#ffdf00 200px,#ffdb00 204px,#ffd600 208px,#ffd100 212px,#ffcd00 216px,#ffc900 220px,#ffc500 224px,#ffc200 228px,#ffbe00 232px,#ffba00 236px,#ffb700 240px,#ffb400 244px,#ffb100 248px,#ffae00 252px,#ffab00 256px,#ffa800 260px,#ffa500 264px,#ffa200 268px,#ffa000 272px,#ff9d00 276px,#ff9b00 280px,#ff9800 284px,#ff9600 288px,#ff9300 292px,#ff9100 296px,#ff8f00 300px,#ff8d00 304px,#ff8a00 308px,#ff8800 312px,#ff8600 316px)"></i><i style="top:88px;height:2px;background:linear-gradient(90deg,#00ffa0 0px,#00ff9f 4px,#00ff9d 8px,#00ff9b 12px,#00ff99 16px,#00ff96 20px,#00ff94 24px,#00ff92 28px,#00ff90 32px,#00ff8d 36px,#00ff8b 40px,#00ff88 44px,#00ff85 48px,#00ff82 52px,#00ff7f 56px,#00ff7c 60px,#00ff79 64px,#00ff76 68px,#00ff72 72px,#00ff6e 76px,#00ff6a 80px,#00ff66 84px,#00ff61 88px,#00ff5c 92px,#27ff57 96px,#45ff51 100px,#59ff4b 104px,#68ff43 108px,#76ff3a 112px,#82ff2f 116px,#8dff1f 120px,#97ff00 124px,#a0ff00 128px,#aaff00 132px,#b2ff00 136px,#bbff00 140px,#c3ff00 144px,#cbff00 148px,#d2ff00 152px,#daff00 156px,#e1ff00 160px,#e8ff00 164px,#efff00 168px,#f6ff00 172px,#fdff00 176px,#fffa00 180px,#fff400 184px,#ffee00 188px,#ffe800 192px,#ffe300 196px,#ffde00 200px,#ffd900 204px,#ffd400 208px,#ffd000 212px,#ffcc00 216px,#ffc800 220px,#ffc400 224px,#ffc000 228px,#ffbd00 232px,#ffb900 236px,#ffb600 240px,#ffb300 244px,#ffaf00 248px,#ffac00 252px,#ffa900 256px,#ffa700 260px,#ffa400 264px,#ffa100 268px,#ff9e00 272px,#ff9c00 276px,#ff9900 280px,#ff9700 284px,#ff9500 288px,#ff9200 292px,#ff9000 296px,#ff8e00 300px,#ff8b00 304px,#ff8900 308px,#ff8700 312px,#ff8500 316px)"></i><i style="top:90px;height:2px;background:linear-gradient(90deg,#00ffa2 0px,#00ffa0 4px,#00ff9e 8px,#00ff9c 12px,#00ff9a 16px,#00ff98 20px,#00ff96 24px,#00ff94 28px,#00ff92 32px,#00ff8f 36px,#00ff8d 40px,#00ff8a 44px,#00ff87 48px,#00ff85 52px,#00ff82 56px,#00ff7f 60px,#00ff7c 64px,#00ff78 68px,#00ff75 72px,#00ff71 76px,#00ff6d 80px,#00ff69 84px,#00ff64 88px,#00ff60 92px,#2aff5a 96px,#47ff55 100px,#5aff4f 104px,#6aff47 108px,#77ff3f 112px,#83ff35 116px,#8eff28 120px,#98ff10 124px,#a2ff00 128px,#abff00 132px,#b4ff00 136px,#bcff00 140px,#c4ff00 144px,#ccff00 148px,#d4ff00 152px,#dbff00 156px,#e3ff00 160px,#eaff00 164px,#f1ff00 168px,#f8ff00 172px,#ffff00 176px,#fff800 180px,#fff200 184px,#ffec00 188px,#ffe700 192px,#ffe100 196px,#ffdc00 200px,#ffd800 204px,#ffd300 208px,#ffcf00 212px,#ffca00 216px,#ffc600 220px,#ffc300 224px,#ffbf00 228px,#ffbb00 232px,#ffb800 236px,#ffb500 240px,#ffb100 244px,#ffae00 248px,#ffab00 252px,#ffa800 256px,#ffa500 260px,#ffa300 264px,#ffa000 268px,#ff9d00 272px,#ff9b00 276px,#ff9800 280px,#ff9600 284px,#ff9300 288px,#ff9100 292px,#ff8f00 296px,#ff8c00 300px,#ff8a00 304px,#ff8800 308px,#ff8600 312px,#ff8400 316px)"></i><i style="top:92px;height:2px;background:linear-gradient(90deg,#00ffa4 0px,#00ffa2 4px,#00ffa0 8px,#00ff9e 12px,#00ff9c 16px,#00ff9a 20px,#00ff98 24px,#00ff96 28px,#00ff94 32px,#00ff91 36px,#00ff8f 40px,#00ff8c 44px,#00ff8a 48px,#00ff87 52px,#00ff84 56px,#00ff81 60px,#00ff7e 64px,#00ff7b 68px,#00ff77 72px,#00ff74 76px,#00ff70 80px,#00ff6c 84px,#00ff67 88px,#00ff63 92px,#2dff5e 96px,#49ff58 100px,#5cff52 104px,#6bff4c 108px,#79ff44 112px,#85ff3b 116px,#8fff30 120px,#9aff20 124px,#a3ff00 128px,#acff00 132px,#b5ff00 136px,#beff00 140px,#c6ff00 144px,#ceff00 148px,#d5ff00 152px,#ddff00 156px,#e4ff00 160px,#ecff00 164px,#f3ff00 168px,#faff00 172px,#fffd00 176px,#fff700 180px,#fff000 184px,#ffeb00 188px,#ffe500 192px,#ffe000 196px,#ffdb00 200px,#ffd600 204px,#ffd200 208px,#ffcd00 212px,#ffc900 216px,#ffc500 220px,#ffc100 224px,#ffbe00 228px,#ffba00 232px,#ffb700 236px,#ffb300 240px,#ffb000 244px,#ffad00 248px,#ffaa00 252px,#ffa700 256px,#ffa400 260px,#ffa100 264px,#ff9f00 268px,#ff9c00 272px,#ff9900 276px,#ff9700 280px,#ff9500 284px,#ff9200 288px,#ff9000 292px,#ff8e00 296px,#ff8b00 300px,#ff8900 304px,#ff8700 308px,#ff8500 312px,#ff8300 316px)"></i><i style="top:94px;height:2px;background:linear-gradient(90deg,#00ffa5 0px,#00ffa4 4px,#00ffa2 8px,#00ffa0 12px,#00ff9e 16px,#00ff9c 20px,#00ff9a 24px,#00ff98 28px,#00ff96 32px,#00ff93 36px,#00ff91 40px,#00ff8e 44px,#00ff8c 48px,#00ff89 52px,#00ff86 56px,#00ff83 60px,#00ff80 64px,#00ff7d 68px,#00ff7a 72px,#00ff76 76px,#00ff72 80px,#00ff6f 84px,#00ff6a 88px,#00ff66 92px,#30ff61 96px,#4bff5c 100px,#5eff56 104px,#6dff50 108px,#7aff49 112px,#86ff40 116px,#91ff36 120px,#9bff29 124px,#a5ff11 128px,#aeff00 132px,#b7ff00 136px,#bfff00 140px,#c7ff00 144px,#cfff00 148px,#d7ff00 152px,#dfff00 156px,#e6ff00 160px,#edff00 164px,#f5ff00 168px,#fcff00 172px,#fffb00 176px,#fff500 180px,#ffef00 184px,#ffe900 188px,#ffe300 192px,#ffde00 196px,#ffd900 200px,#ffd500 204px,#ffd000 208px,#ffcc00 212px,#ffc800 216px,#ffc400 220px,#ffc000 224px,#ffbc00 228px,#ffb900 232px,#ffb500 236px,#ffb200 240px,#ffaf00 244px,#ffac00 248px,#ffa900 252px,#ffa600 256px,#ffa300 260px,#ffa000 264px,#ff9d00 268px,#ff9b00 272px,#ff9800 276px,#ff9600 280px,#ff9300 284px,#ff9100 288px,#ff8f00 292px,#ff8c00 296px,#ff8a00 300px,#ff8800 304px,#ff8600 308px,#ff8400 312px,#ff8200 316px)"></i><i style="top:96px;height:2px;background:linear-gradient(90deg,#00ffa7 0px,#00ffa6 4px,#00ffa4 8px,#00ffa2 12px,#00ffa0 16px,#00ff9e 20px,#00ff9c 24px,#00ff9a 28px,#00ff98 32px,#00ff95 36px,#00ff93 40px,#00ff90 44px,#00ff8e 48px,#00ff8b 52px,#00ff89 56px,#00ff86 60px,#00ff83 64px,#00ff80 68px,#00ff7c 72px,#00ff79 76px,#00ff75 80px,#00ff71 84px,#00ff6d 88px,#00ff69 92px,#33ff64 96px,#4dff5f 100px,#5fff5a 104px,#6eff54 108px,#7cff4d 112px,#87ff45 116px,#92ff3c 120px,#9dff31 124px,#a6ff20 128px,#afff00 132px,#b8ff00 136px,#c1ff00 140px,#c9ff00 144px,#d1ff00 148px,#d9ff00 152px,#e0ff00 156px,#e8ff00 160px,#efff00 164px,#f6ff00 168px,#fdff00 172px,#fffa00 176px,#fff300 180px,#ffed00 184px,#ffe700 188px,#ffe200 192px,#ffdd00 196px,#ffd800 200px,#ffd300 204px,#ffcf00 208px,#ffca00 212px,#ffc600 216px,#ffc200 220px,#ffbe00 224px,#ffbb00 228px,#ffb700 232px,#ffb400 236px,#ffb100 240px,#ffad00 244px,#ffaa00 248px,#ffa700 252px,#ffa400 256px,#ffa200 260px,#ff9f00 264px,#ff9c00 268px,#ff9a00 272px,#ff9700 276px,#ff9500 280px,#ff9200 284px,#ff9000 288px,#ff8d00 292px,#ff8b00 296px,#ff8900 300px,#ff8700 304px,#ff8500 308px,#ff8200 312px,#ff8000 316px)"></i><i style="top:98px;height:2px;background:linear-gradient(90deg,#00ffa9 0px,#00ffa8 4px,#00ffa6 8px,#00ffa4 12px,#00ffa2 16px,#00ffa0 20px,#00ff9e 24px,#00ff9c 28px,#00ff9a 32px,#00ff97 36px,#00ff95 40px,#00ff93 44px,#00ff90 48px,#00ff8d 52px,#00ff8b 56px,#00ff88 60px,#00ff85 64px,#00ff82 68px,#00ff7f 72px,#00ff7b 76px,#00ff78 80px,#00ff74 84px,#00ff70 88px,#00ff6c 92px,#36ff67 96px,#4fff62 100px,#61ff5d 104px,#70ff57 108px,#7dff51 112px,#89ff4a 116px,#94ff41 120px,#9eff37 124px,#a8ff2a 128px,#b1ff12 132px,#baff00 136px,#c2ff00 140px,#caff00 144px,#d2ff00 148px,#daff00 152px,#e2ff00 156px,#e9ff00 160px,#f1ff00 164px,#f8ff00 168px,#ffff00 172px,#fff800 176px,#fff100 180px,#ffeb00 184px,#ffe600 188px,#ffe000 192px,#ffdb00 196px,#ffd600 200px,#ffd200 204px,#ffcd00 208px,#ffc900 212px,#ffc500 216px,#ffc100 220px,#ffbd00 224px,#ffb900 228px,#ffb600 232px,#ffb300 236px,#ffaf00 240px,#ffac00 244px,#ffa900 248px,#ffa600 252px,#ffa300 256px,#ffa000 260px,#ff9e00 264px,#ff9b00 268px,#ff9800 272px,#ff9600 276px,#ff9300 280px,#ff9100 284px,#ff8f00 288px,#ff8c00 292px,#ff8a00 296px,#ff8800 300px,#ff8500 304px,#ff8300 308px,#ff8100 312px,#ff7f00 316px)"></i><i style="top:100px;height:2px;background:linear-gradient(90deg,#00ffab 0px,#00ffa9 4px,#00ffa8 8px,#00ffa6 12px,#00ffa4 16px,#00ffa2 20px,#00ffa0 24px,#00ff9e 28px,#00ff9c 32px,#00ff99 36px,#00ff97 40px,#00ff95 44px,#00ff92 48px,#00ff90 52px,#00ff8d 56px,#00ff8a 60px,#00ff87 64px,#00ff84 68px,#00ff81 72px,#00ff7e 76px,#00ff7a 80px,#00ff77 84px,#00ff73 88px,#00ff6f 92px,#38ff6a 96px,#51ff66 100px,#63ff60 104px,#71ff5b 108px,#7eff55 112px,#8aff4e 116px,#95ff46 120px,#9fff3d 124px,#a9ff32 128px,#b2ff21 132px,#bbff00 136px,#c4ff00 140px,#ccff00 144px,#d4ff00 148px,#dcff00 152px,#e4ff00 156px,#ebff00 160px,#f3ff00 164px,#faff00 168px,#fffd00 172px,#fff600 176px,#fff000 180px,#ffea00 184px,#ffe400 188px,#ffdf00 192px,#ffda00 196px,#ffd500 200px,#ffd000 204px,#ffcc00 208px,#ffc700 212px,#ffc300 216px,#ffbf00 220px,#ffbc00 224px,#ffb800 228px,#ffb500 232px,#ffb100 236px,#ffae00 240px,#ffab00 244px,#ffa800 248px,#ffa500 252px,#ffa200 256px,#ff9f00 260px,#ff9c00 264px,#ff9a00 268px,#ff9700 272px,#ff9500 276px,#ff9200 280px,#ff9000 284px,#ff8d00 288px,#ff8b00 292px,#ff8900 296px,#ff8600 300px,#ff8400 304px,#ff8200 308px,#ff8000 312px,#ff7e00 316px)"></i><i style="top:102px;height:2px;background:linear-gradient(90deg,#00ffad 0px,#00ffab 4px,#00ffaa 8px,#00ffa8 12px,#00ffa6 16px,#00ffa4 20px,#00ffa2 24px,#00ffa0 28px,#00ff9e 32px,#00ff9b 36px,#00ff99 40px,#00ff97 44px,#00ff94 48px,#00ff92 52px,#00ff8f 56px,#00ff8d 60px,#00ff8a 64px,#00ff87 68px,#00ff84 72px,#00ff80 76px,#00ff7d 80px,#00ff79 84px,#00ff76 88px,#00ff72 92px,#3bff6d 96px,#52ff69 100px,#64ff64 104px,#73ff5e 108px,#80ff59 112px,#8cff52 116px,#97ff4b 120px,#a1ff43 124px,#abff38 128px,#b4ff2b 132px,#bdff13 136px,#c5ff00 140px,#ceff00 144px,#d6ff00 148px,#deff00 152px,#e5ff00 156px,#edff00 160px,#f4ff00 164px,#fcff00 168px,#fffb00 172px,#fff400 176px,#ffee00 180px,#ffe800 184px,#ffe200 188px,#ffdd00 192px,#ffd800 196px,#ffd300 200px,#ffcf00 204px,#ffca00 208px,#ffc600 212px,#ffc200 216px,#ffbe00 220px,#ffba00 224px,#ffb700 228px,#ffb300 232px,#ffb000 236px,#ffad00 240px,#ffa900 244px,#ffa600 248px,#ffa300 252px,#ffa100 256px,#ff9e00 260px,#ff9b00 264px,#ff9800 268px,#ff9600 272px,#ff9300 276px,#ff9100 280px,#ff8e00 284px,#ff8c00 288px,#ff8a00 292px,#ff8700 296px,#ff8500 300px,#ff8300 304px,#ff8100 308px,#ff7f00 312px,#ff7d00 316px)"></i><i style="top:104px;height:2px;background:linear-gradient(90deg,#00ffaf 0px,#00ffad 4px,#00ffab 8px,#00ffaa 12px,#00ffa8 16px,#00ffa6 20px,#00ffa4 24px,#00ffa2 28px,#00ffa0 32px,#00ff9e 36px,#00ff9b 40px,#00ff99 44px,#00ff97 48px,#00ff94 52px,#00ff92 56px,#00ff8f 60px,#00ff8c 64px,#00ff89 68px,#00ff86 72px,#00ff83 76px,#00ff80 80px,#00ff7c 84px,#00ff78 88px,#06ff74 92px,#3dff70 96px,#54ff6c 100px,#66ff67 104px,#75ff62 108px,#81ff5c 112px,#8dff56 116px,#98ff4f 120px,#a2ff47 124px,#acff3e 128px,#b5ff33 132px,#beff22 136px,#c7ff00 140px,#cfff00 144px,#d7ff00 148px,#dfff00 152px,#e7ff00 156px,#efff00 160px,#f6ff00 164px,#feff00 168px,#fff900 172px,#fff300 176px,#ffec00 180px,#ffe600 184px,#ffe100 188px,#ffdb00 192px,#ffd600 196px,#ffd200 200px,#ffcd00 204px,#ffc900 208px,#ffc400 212px,#ffc000 216px,#ffbd00 220px,#ffb900 224px,#ffb500 228px,#ffb200 232px,#ffae00 236px,#ffab00 240px,#ffa800 244px,#ffa500 248px,#ffa200 252px,#ff9f00 256px,#ff9c00 260px,#ff9a00 264px,#ff9700 268px,#ff9500 272px,#ff9200 276px,#ff9000 280px,#ff8d00 284px,#ff8b00 288px,#ff8800 292px,#ff8600 296px,#ff8400 300px,#ff8200 304px,#ff8000 308px,#ff7e00 312px,#ff7b00 316px)"></i><i style="top:106px;height:2px;background:linear-gradient(90deg,#00ffb0 0px,#00ffaf 4px,#00ffad 8px,#00ffac 12px,#00ffaa 16px,#00ffa8 20px,#00ffa6 24px,#00ffa4 28px,#00ffa2 32px,#00ffa0 36px,#00ff9d 40px,#00ff9b 44px,#00ff99 48px,#00ff96 52px,#00ff94 56px,#00ff91 60px,#00ff8e 64px,#00ff8c 68px,#00ff89 72px,#00ff85 76px,#00ff82 80px,#00ff7f 84px,#00ff7b 88px,#14ff77 92px,#40ff73 96px,#56ff6f 100px,#67ff6a 104px,#76ff65 108px,#83ff60 112px,#8fff5a 116px,#9aff54 120px,#a4ff4c 124px,#aeff44 128px,#b7ff39 132px,#c0ff2c 136px,#c9ff14 140px,#d1ff00 144px,#d9ff00 148px,#e1ff00 152px,#e9ff00 156px,#f0ff00 160px,#f8ff00 164px,#ffff00 168px,#fff700 172px,#fff100 176px,#ffeb00 180px,#ffe500 184px,#ffdf00 188px,#ffda00 192px,#ffd500 196px,#ffd000 200px,#ffcb00 204px,#ffc700 208px,#ffc300 212px,#ffbf00 216px,#ffbb00 220px,#ffb700 224px,#ffb400 228px,#ffb000 232px,#ffad00 236px,#ffaa00 240px,#ffa700 244px,#ffa400 248px,#ffa100 252px,#ff9e00 256px,#ff9b00 260px,#ff9800 264px,#ff9600 268px,#ff9300 272px,#ff9100 276px,#ff8e00 280px,#ff8c00 284px,#ff8a00 288px,#ff8700 292px,#ff8500 296px,#ff8300 300px,#ff8100 304px,#ff7e00 308px,#ff7c00 312px,#ff7a00 316px)"></i><i style="top:108px;height:2px;background:linear-gradient(90deg,#00ffb2 0px,#00ffb1 4px,#00ffaf 8px,#00ffad 12px,#00ffac 16px,#00ffaa 20px,#00ffa8 24px,#00ffa6 28px,#00ffa4 32px,#00ffa2 36px,#00ffa0 40px,#00ff9d 44px,#00ff9b 48px,#00ff99 52px,#00ff96 56px,#00ff93 60px,#00ff91 64px,#00ff8e 68px,#00ff8b 72px,#00ff88 76px,#00ff85 80px,#00ff81 84px,#00ff7e 88px,#1bff7a 92px,#42ff76 96px,#58ff72 100px,#69ff6d 104px,#78ff69 108px,#85ff63 112px,#90ff5e 116px,#9bff58 120px,#a5ff51 124px,#afff49 128px,#b9ff3f 132px,#c1ff34 136px,#caff23 140px,#d3ff00 144px,#dbff00 148px,#e3ff00 152px,#ebff00 156px,#f2ff00 160px,#faff00 164px,#fffd00 168px,#fff600 172px,#ffef00 176px,#ffe900 180px,#ffe300 184px,#ffdd00 188px,#ffd800 192px,#ffd300 196px,#ffce00 200px,#ffca00 204px,#ffc600 208px,#ffc100 212px,#ffbe00 216px,#ffba00 220px,#ffb600 224px,#ffb200 228px,#ffaf00 232px,#ffac00 236px,#ffa900 240px,#ffa500 244px,#ffa200 248px,#ff9f00 252px,#ff9d00 256px,#ff9a00 260px,#ff9700 264px,#ff9500 268px,#ff9200 272px,#ff8f00 276px,#ff8d00 280px,#ff8b00 284px,#ff8800 288px,#ff8600 292px,#ff8400 296px,#ff8100 300px,#ff7f00 304px,#ff7d00 308px,#ff7b00 312px,#ff7900 316px)"></i><i style="top:110px;height:2px;background:linear-gradient(90deg,#00ffb4 0px,#00ffb3 4px,#00ffb1 8px,#00ffaf 12px,#00ffae 16px,#00ffac 20px,#00ffaa 24px,#00ffa8 28px,#00ffa6 32px,#00ffa4 36px,#00ffa2 40px,#00ff9f 44px,#00ff9d 48px,#00ff9b 52px,#00ff98 56px,#00ff96 60px,#00ff93 64px,#00ff90 68px,#00ff8d 72px,#00ff8a 76px,#00ff87 80px,#00ff84 84px,#00ff80 88px,#20ff7d 92px,#44ff79 96px,#5aff75 100px,#6bff71 104px,#79ff6c 108px,#86ff67 112px,#92ff61 116px,#9dff5b 120px,#a7ff55 124px,#b1ff4d 128px,#baff45 132px,#c3ff3b 136px,#ccff2d 140px,#d4ff15 144px,#dcff00 148px,#e5ff00 152px,#ecff00 156px,#f4ff00 160px,#fcff00 164px,#fffb00 168px,#fff400 172px,#ffed00 176px,#ffe700 180px,#ffe100 184px,#ffdc00 188px,#ffd700 192px,#ffd200 196px,#ffcd00 200px,#ffc800 204px,#ffc400 208px,#ffc000 212px,#ffbc00 216px,#ffb800 220px,#ffb500 224px,#ffb100 228px,#ffae00 232px,#ffaa00 236px,#ffa700 240px,#ffa400 244px,#ffa100 248px,#ff9e00 252px,#ff9b00 256px,#ff9900 260px,#ff9600 264px,#ff9300 268px,#ff9100 272px,#ff8e00 276px,#ff8c00 280px,#ff8900 284px,#ff8700 288px,#ff8500 292px,#ff8200 296px,#ff8000 300px,#ff7e00 304px,#ff7c00 308px,#ff7a00 312px,#ff7800 316px)"></i><i style="top:112px;height:2px;background:linear-gradient(90deg,#00ffb6 0px,#00ffb5 4px,#00ffb3 8px,#00ffb1 12px,#00ffb0 16px,#00ffae 20px,#00ffac 24px,#00ffaa 28px,#00ffa8 32px,#00ffa6 36px,#00ffa4 40px,#00ffa2 44px,#00ff9f 48px,#00ff9d 52px,#00ff9b 56px,#00ff98 60px,#00ff95 64px,#00ff93 68px,#00ff90 72px,#00ff8d 76px,#00ff8a 80px,#00ff87 84px,#00ff83 88px,#24ff80 92px,#46ff7c 96px,#5cff78 100px,#6cff74 104px,#7bff6f 108px,#88ff6a 112px,#93ff65 116px,#9eff5f 120px,#a9ff59 124px,#b2ff52 128px,#bcff4a 132px,#c5ff41 136px,#cdff35 140px,#d6ff24 144px,#deff00 148px,#e6ff00 152px,#eeff00 156px,#f6ff00 160px,#feff00 164px,#fff900 168px,#fff200 172px,#ffeb00 176px,#ffe500 180px,#ffe000 184px,#ffda00 188px,#ffd500 192px,#ffd000 196px,#ffcb00 200px,#ffc700 204px,#ffc300 208px,#ffbf00 212px,#ffbb00 216px,#ffb700 220px,#ffb300 224px,#ffb000 228px,#ffac00 232px,#ffa900 236px,#ffa600 240px,#ffa300 244px,#ffa000 248px,#ff9d00 252px,#ff9a00 256px,#ff9700 260px,#ff9500 264px,#ff9200 268px,#ff8f00 272px,#ff8d00 276px,#ff8a00 280px,#ff8800 284px,#ff8600 288px,#ff8300 292px,#ff8100 296px,#ff7f00 300px,#ff7d00 304px,#ff7b00 308px,#ff7800 312px,#ff7600 316px)"></i><i style="top:114px;height:2px;background:linear-gradient(90deg,#00ffb8 0px,#00ffb7 4px,#00ffb5 8px,#00ffb3 12px,#00ffb1 16px,#00ffb0 20px,#00ffae 24px,#00ffac 28px,#00ffaa 32px,#00ffa8 36px,#00ffa6 40px,#00ffa4 44px,#00ffa1 48px,#00ff9f 52px,#00ff9d 56px,#00ff9a 60px,#00ff98 64px,#00ff95 68px,#00ff92 72px,#00ff8f 76px,#00ff8c 80px,#00ff89 84px,#00ff86 88px,#28ff82 92px,#49ff7f 96px,#5dff7b 100px,#6eff77 104px,#7cff72 108px,#89ff6e 112px,#95ff68 116px,#a0ff63 120px,#aaff5d 124px,#b4ff56 128px,#bdff4f 132px,#c6ff46 136px,#cfff3c 140px,#d8ff2e 144px,#e0ff17 148px,#e8ff00 152px,#f0ff00 156px,#f8ff00 160px,#fffe00 164px,#fff700 168px,#fff000 172px,#ffea00 176px,#ffe400 180px,#ffde00 184px,#ffd800 188px,#ffd300 192px,#ffce00 196px,#ffca00 200px,#ffc500 204px,#ffc100 208px,#ffbd00 212px,#ffb900 216px,#ffb500 220px,#ffb200 224px,#ffae00 228px,#ffab00 232px,#ffa800 236px,#ffa400 240px,#ffa100 244px,#ff9e00 248px,#ff9b00 252px,#ff9900 256px,#ff9600 260px,#ff9300 264px,#ff9100 268px,#ff8e00 272px,#ff8c00 276px,#ff8900 280px,#ff8700 284px,#ff8400 288px,#ff8200 292px,#ff8000 296px,#ff7e00 300px,#ff7b00 304px,#ff7900 308px,#ff7700 312px,#ff7500 316px)"></i><i style="top:116px;height:2px;background:linear-gradient(90deg,#00ffba 0px,#00ffb8 4px,#00ffb7 8px,#00ffb5 12px,#00ffb3 16px,#00ffb2 20px,#00ffb0 24px,#00ffae 28px,#00ffac 32px,#00ffaa 36px,#00ffa8 40px,#00ffa6 44px,#00ffa4 48px,#00ffa1 52px,#00ff9f 56px,#00ff9d 60px,#00ff9a 64px,#00ff97 68px,#00ff95 72px,#00ff92 76px,#00ff8f 80px,#00ff8c 84px,#00ff89 88px,#2cff85 92px,#4bff82 96px,#5fff7e 100px,#70ff7a 104px,#7eff75 108px,#8bff71 112px,#97ff6c 116px,#a1ff67 120px,#acff61 124px,#b6ff5b 128px,#bfff53 132px,#c8ff4b 136px,#d1ff42 140px,#d9ff36 144px,#e2ff25 148px,#eaff00 152px,#f2ff00 156px,#faff00 160px,#fffc00 164px,#fff500 168px,#ffee00 172px,#ffe800 176px,#ffe200 180px,#ffdc00 184px,#ffd700 188px,#ffd200 192px,#ffcd00 196px,#ffc800 200px,#ffc400 204px,#ffc000 208px,#ffbb00 212px,#ffb800 216px,#ffb400 220px,#ffb000 224px,#ffad00 228px,#ffa900 232px,#ffa600 236px,#ffa300 240px,#ffa000 244px,#ff9d00 248px,#ff9a00 252px,#ff9700 256px,#ff9500 260px,#ff9200 264px,#ff8f00 268px,#ff8d00 272px,#ff8a00 276px,#ff8800 280px,#ff8500 284px,#ff8300 288px,#ff8100 292px,#ff7f00 296px,#ff7c00 300px,#ff7a00 304px,#ff7800 308px,#ff7600 312px,#ff7400 316px)"></i><i style="top:118px;height:2px;background:linear-gradient(90deg,#00ffbc 0px,#00ffba 4px,#00ffb9 8px,#00ffb7 12px,#00ffb5 16px,#00ffb4 20px,#00ffb2 24px,#00ffb0 28px,#00ffae 32px,#00ffac 36px,#00ffaa 40px,#00ffa8 44px,#00ffa6 48px,#00ffa4 52px,#00ffa1 56px,#00ff9f 60px,#00ff9c 64px,#00ff9a 68px,#00ff97 72px,#00ff94 76px,#00ff91 80px,#00ff8e 84px,#00ff8b 88px,#2fff88 92px,#4dff84 96px,#61ff81 100px,#71ff7d 104px,#80ff79 108px,#8cff74 112px,#98ff6f 116px,#a3ff6a 120px,#adff65 124px,#b7ff5f 128px,#c1ff58 132px,#caff50 136px,#d3ff47 140px,#dbff3d 144px,#e4ff2f 148px,#ecff18 152px,#f4ff00 156px,#fcff00 160px,#fffa00 164px,#fff300 168px,#ffec00 172px,#ffe600 176px,#ffe000 180px,#ffda00 184px,#ffd500 188px,#ffd000 192px,#ffcb00 196px,#ffc700 200px,#ffc200 204px,#ffbe00 208px,#ffba00 212px,#ffb600 216px,#ffb200 220px,#ffaf00 224px,#ffab00 228px,#ffa800 232px,#ffa500 236px,#ffa200 240px,#ff9f00 244px,#ff9c00 248px,#ff9900 252px,#ff9600 256px,#ff9300 260px,#ff9100 264px,#ff8e00 268px,#ff8b00 272px,#ff8900 276px,#ff8600 280px,#ff8400 284px,#ff8200 288px,#ff7f00 292px,#ff7d00 296px,#ff7b00 300px,#ff7900 304px,#ff7700 308px,#ff7500 312px,#ff7200 316px)"></i><i style="top:120px;height:2px;background:linear-gradient(90deg,#00ffbe 0px,#00ffbc 4px,#00ffbb 8px,#00ffb9 12px,#00ffb7 16px,#00ffb6 20px,#00ffb4 24px,#00ffb2 28px,#00ffb0 32px,#00ffae 36px,#00ffac 40px,#00ffaa 44px,#00ffa8 48px,#00ffa6 52px,#00ffa4 56px,#00ffa1 60px,#00ff9f 64px,#00ff9c 68px,#00ff9a 72px,#00ff97 76px,#00ff94 80px,#00ff91 84px,#00ff8e 88px,#33ff8b 92px,#4fff87 96px,#63ff83 100px,#73ff80 104px,#81ff7c 108px,#8eff77 112px,#9aff73 116px,#a5ff6e 120px,#afff68 124px,#b9ff63 128px,#c2ff5c 132px,#ccff55 136px,#d4ff4d 140px,#ddff43 144px,#e5ff37 148px,#eeff26 152px,#f6ff00 156px,#feff00 160px,#fff800 164px,#fff100 168px,#ffeb00 172px,#ffe400 176px,#ffde00 180px,#ffd900 184px,#ffd300 188px,#ffce00 192px,#ffca00 196px,#ffc500 200px,#ffc100 204px,#ffbc00 208px,#ffb800 212px,#ffb500 216px,#ffb100 220px,#ffad00 224px,#ffaa00 228px,#ffa700 232px,#ffa300 236px,#ffa000 240px,#ff9d00 244px,#ff9a00 248px,#ff9700 252px,#ff9500 256px,#ff9200 260px,#ff8f00 264px,#ff8d00 268px,#ff8a00 272px,#ff8800 276px,#ff8500 280px,#ff8300 284px,#ff8000 288px,#ff7e00 292px,#ff7c00 296px,#ff7a00 300px,#ff7700 304px,#ff7500 308px,#ff7300 312px,#ff7100 316px)"></i><i style="top:122px;height:2px;background:linear-gradient(90deg,#00ffbf 0px,#00ffbe 4px,#00ffbd 8px,#00ffbb 12px,#00ffb9 16px,#00ffb8 20px,#00ffb6 24px,#00ffb4 28px,#00ffb2 32px,#00ffb0 36px,#00ffae 40px,#00ffac 44px,#00ffaa 48px,#00ffa8 52px,#00ffa6 56px,#00ffa4 60px,#00ffa1 64px,#00ff9f 68px,#00ff9c 72px,#00ff99 76px,#00ff97 80px,#00ff94 84px,#00ff91 88px,#36ff8d 92px,#51ff8a 96px,#65ff86 100px,#75ff83 104px,#83ff7f 108px,#90ff7a 112px,#9bff76 116px,#a6ff71 120px,#b1ff6c 124px,#bbff66 128px,#c4ff60 132px,#cdff59 136px,#d6ff52 140px,#dfff49 144px,#e7ff3e 148px,#f0ff30 152px,#f8ff19 156px,#fffe00 160px,#fff600 164px,#ffef00 168px,#ffe900 172px,#ffe200 176px,#ffdd00 180px,#ffd700 184px,#ffd200 188px,#ffcd00 192px,#ffc800 196px,#ffc300 200px,#ffbf00 204px,#ffbb00 208px,#ffb700 212px,#ffb300 216px,#ffaf00 220px,#ffac00 224px,#ffa800 228px,#ffa500 232px,#ffa200 236px,#ff9f00 240px,#ff9c00 244px,#ff9900 248px,#ff9600 252px,#ff9300 256px,#ff9000 260px,#ff8e00 264px,#ff8b00 268px,#ff8900 272px,#ff8600 276px,#ff8400 280px,#ff8100 284px,#ff7f00 288px,#ff7d00 292px,#ff7b00 296px,#ff7800 300px,#ff7600 304px,#ff7400 308px,#ff7200 312px,#ff7000 316px)"></i><i style="top:124px;height:2px;background:linear-gradient(90deg,#00ffc1 0px,#00ffc0 4px,#00ffbf 8px,#00ffbd 12px,#00ffbb 16px,#00ffba 20px,#00ffb8 24px,#00ffb6 28px,#00ffb4 32px,#00ffb3 36px,#00ffb1 40px,#00ffaf 44px,#00ffad 48px,#00ffaa 52px,#00ffa8 56px,#00ffa6 60px,#00ffa4 64px,#00ffa1 68px,#00ff9e 72px,#00ff9c 76px,#00ff99 80px,#00ff96 84px,#00ff93 88px,#39ff90 92px,#53ff8d 96px,#67ff89 100px,#77ff86 104px,#85ff82 108px,#91ff7e 112px,#9dff79 116px,#a8ff75 120px,#b2ff70 124px,#bcff6a 128px,#c6ff64 132px,#cfff5e 136px,#d8ff57 140px,#e1ff4e 144px,#e9ff44 148px,#f2ff38 152px,#faff27 156px,#fffc00 160px,#fff400 164px,#ffed00 168px,#ffe700 172px,#ffe100 176px,#ffdb00 180px,#ffd500 184px,#ffd000 188px,#ffcb00 192px,#ffc600 196px,#ffc200 200px,#ffbd00 204px,#ffb900 208px,#ffb500 212px,#ffb200 216px,#ffae00 220px,#ffaa00 224px,#ffa700 228px,#ffa400 232px,#ffa000 236px,#ff9d00 240px,#ff9a00 244px,#ff9700 248px,#ff9500 252px,#ff9200 256px,#ff8f00 260px,#ff8c00 264px,#ff8a00 268px,#ff8700 272px,#ff8500 276px,#ff8200 280px,#ff8000 284px,#ff7e00 288px,#ff7b00 292px,#ff7900 296px,#ff7700 300px,#ff7500 304px,#ff7300 308px,#ff7000 312px,#ff6e00 316px)"></i><i style="top:126px;height:2px;background:linear-gradient(90deg,#00ffc3 0px,#00ffc2 4px,#00ffc1 8px,#00ffbf 12px,#00ffbd 16px,#00ffbc 20px,#00ffba 24px,#00ffb8 28px,#00ffb7 32px,#00ffb5 36px,#00ffb3 40px,#00ffb1 44px,#00ffaf 48px,#00ffad 52px,#00ffaa 56px,#00ffa8 60px,#00ffa6 64px,#00ffa3 68px,#00ffa1 72px,#00ff9e 76px,#00ff9c 80px,#00ff99 84px,#00ff96 88px,#3bff93 92px,#55ff90 96px,#68ff8c 100px,#78ff89 104px,#86ff85 108px,#93ff81 112px,#9fff7d 116px,#aaff78 120px,#b4ff73 124px,#beff6e 128px,#c8ff68 132px,#d1ff62 136px,#daff5b 140px,#e3ff53 144px,#ebff4a 148px,#f4ff40 152px,#fcff31 156px,#fffa1a 160px,#fff200 164px,#ffeb00 168px,#ffe500 172px,#ffdf00 176px,#ffd900 180px,#ffd400 184px,#ffce00 188px,#ffc900 192px,#ffc500 196px,#ffc000 200px,#ffbc00 204px,#ffb800 208px,#ffb400 212px,#ffb000 216px,#ffac00 220px,#ffa900 224px,#ffa500 228px,#ffa200 232px,#ff9f00 236px,#ff9c00 240px,#ff9900 244px,#ff9600 248px,#ff9300 252px,#ff9000 256px,#ff8e00 260px,#ff8b00 264px,#ff8800 268px,#ff8600 272px,#ff8300 276px,#ff8100 280px,#ff7f00 284px,#ff7c00 288px,#ff7a00 292px,#ff7800 296px,#ff7600 300px,#ff7300 304px,#ff7100 308px,#ff6f00 312px,#ff6d00 316px)"></i><i style="top:128px;height:2px;background:linear-gradient(90deg,#00ffc5 0px,#00ffc4 4px,#00ffc3 8px,#00ffc1 12px,#00ffbf 16px,#00ffbe 20px,#00ffbc 24px,#00ffba 28px,#00ffb9 32px,#00ffb7 36px,#00ffb5 40px,#00ffb3 44px,#00ffb1 48px,#00ffaf 52px,#00ffad 56px,#00ffab 60px,#00ffa8 64px,#00ffa6 68px,#00ffa3 72px,#00ffa1 76px,#00ff9e 80px,#00ff9b 84px,#00ff99 88px,#3eff95 92px,#57ff92 96px,#6aff8f 100px,#7aff8b 104px,#88ff88 108px,#95ff84 112px,#a0ff80 116px,#abff7b 120px,#b6ff77 124px,#c0ff72 128px,#c9ff6c 132px,#d3ff66 136px,#dcff60 140px,#e5ff58 144px,#edff50 148px,#f6ff46 152px,#feff3a 156px,#fff827 160px,#fff000 164px,#ffea00 168px,#ffe300 172px,#ffdd00 176px,#ffd700 180px,#ffd200 184px,#ffcd00 188px,#ffc800 192px,#ffc300 196px,#ffbf00 200px,#ffba00 204px,#ffb600 208px,#ffb200 212px,#ffaf00 216px,#ffab00 220px,#ffa700 224px,#ffa400 228px,#ffa100 232px,#ff9e00 236px,#ff9a00 240px,#ff9700 244px,#ff9500 248px,#ff9200 252px,#ff8f00 256px,#ff8c00 260px,#ff8a00 264px,#ff8700 268px,#ff8400 272px,#ff8200 276px,#ff8000 280px,#ff7d00 284px,#ff7b00 288px,#ff7900 292px,#ff7600 296px,#ff7400 300px,#ff7200 304px,#ff7000 308px,#ff6e00 312px,#ff6c00 316px)"></i><i style="top:130px;height:2px;background:linear-gradient(90deg,#00ffc7 0px,#00ffc6 4px,#00ffc5 8px,#00ffc3 12px,#00ffc2 16px,#00ffc0 20px,#00ffbe 24px,#00ffbd 28px,#00ffbb 32px,#00ffb9 36px,#00ffb7 40px,#00ffb5 44px,#00ffb3 48px,#00ffb1 52px,#00ffaf 56px,#00ffad 60px,#00ffab 64px,#00ffa8 68px,#00ffa6 72px,#00ffa3 76px,#00ffa1 80px,#00ff9e 84px,#00ff9b 88px,#41ff98 92px,#59ff95 96px,#6cff92 100px,#7cff8e 104px,#8aff8b 108px,#96ff87 112px,#a2ff83 116px,#adff7f 120px,#b8ff7a 124px,#c2ff75 128px,#cbff70 132px,#d5ff6a 136px,#deff64 140px,#e7ff5d 144px,#efff55 148px,#f8ff4c 152px,#fffe41 156px,#fff631 160px,#ffef1a 164px,#ffe800 168px,#ffe100 172px,#ffdb00 176px,#ffd500 180px,#ffd000 184px,#ffcb00 188px,#ffc600 192px,#ffc100 196px,#ffbd00 200px,#ffb900 204px,#ffb500 208px,#ffb100 212px,#ffad00 216px,#ffa900 220px,#ffa600 224px,#ffa200 228px,#ff9f00 232px,#ff9c00 236px,#ff9900 240px,#ff9600 244px,#ff9300 248px,#ff9000 252px,#ff8d00 256px,#ff8b00 260px,#ff8800 264px,#ff8600 268px,#ff8300 272px,#ff8100 276px,#ff7e00 280px,#ff7c00 284px,#ff7900 288px,#ff7700 292px,#ff7500 296px,#ff7300 300px,#ff7100 304px,#ff6e00 308px,#ff6c00 312px,#ff6a00 316px)"></i><i style="top:132px;height:2px;background:linear-gradient(90deg,#00ffc9 0px,#00ffc8 4px,#00ffc7 8px,#00ffc5 12px,#00ffc4 16px,#00ffc2 20px,#00ffc0 24px,#00ffbf 28px,#00ffbd 32px,#00ffbb 36px,#00ffb9 40px,#00ffb7 44px,#00ffb6 48px,#00ffb4 52px,#00ffb1 56px,#00ffaf 60px,#00ffad 64px,#00ffab 68px,#00ffa8 72px,#00ffa6 76px,#00ffa3 80px,#00ffa1 84px,#13ff9e 88px,#43ff9b 92px,#5bff98 96px,#6eff95 100px,#7dff91 104px,#8bff8e 108px,#98ff8a 112px,#a4ff86 116px,#afff82 120px,#b9ff7e 124px,#c3ff79 128px,#cdff74 132px,#d7ff6e 136px,#e0ff68 140px,#e9ff61 144px,#f1ff5a 148px,#faff51 152px,#fffc47 156px,#fff438 160px,#ffed27 164px,#ffe600 168px,#ffdf00 172px,#ffd900 176px,#ffd400 180px,#ffce00 184px,#ffc900 188px,#ffc400 192px,#ffc000 196px,#ffbb00 200px,#ffb700 204px,#ffb300 208px,#ffaf00 212px,#ffab00 216px,#ffa800 220px,#ffa400 224px,#ffa100 228px,#ff9e00 232px,#ff9b00 236px,#ff9700 240px,#ff9500 244px,#ff9200 248px,#ff8f00 252px,#ff8c00 256px,#ff8900 260px,#ff8700 264px,#ff8400 268px,#ff8200 272px,#ff7f00 276px,#ff7d00 280px,#ff7a00 284px,#ff7800 288px,#ff7600 292px,#ff7400 296px,#ff7100 300px,#ff6f00 304px,#ff6d00 308px,#ff6b00 312px,#ff6900 316px)"></i><i style="top:134px;height:2px;background:linear-gradient(90deg,#00ffcb 0px,#00ffca 4px,#00ffc9 8px,#00ffc7 12px,#00ffc6 16px,#00ffc4 20px,#00ffc3 24px,#00ffc1 28px,#00ffbf 32px,#00ffbd 36px,#00ffbc 40px,#00ffba 44px,#00ffb8 48px,#00ffb6 52px,#00ffb4 56px,#00ffb2 60px,#00ffb0 64px,#00ffad 68px,#00ffab 72px,#00ffa8 76px,#00ffa6 80px,#00ffa3 84px,#1bffa1 88px,#46ff9e 92px,#5dff9b 96px,#70ff98 100px,#7fff94 104px,#8dff91 108px,#9aff8d 112px,#a6ff89 116px,#b1ff85 120px,#bbff81 124px,#c5ff7c 128px,#cfff77 132px,#d8ff72 136px,#e2ff6c 140px,#ebff66 144px,#f3ff5f 148px,#fcff57 152px,#fffa4c 156px,#fff23f 160px,#ffeb30 164px,#ffe41a 168px,#ffdd00 172px,#ffd700 176px,#ffd200 180px,#ffcc00 184px,#ffc700 188px,#ffc300 192px,#ffbe00 196px,#ffba00 200px,#ffb500 204px,#ffb100 208px,#ffae00 212px,#ffaa00 216px,#ffa600 220px,#ffa300 224px,#ff9f00 228px,#ff9c00 232px,#ff9900 236px,#ff9600 240px,#ff9300 244px,#ff9000 248px,#ff8d00 252px,#ff8b00 256px,#ff8800 260px,#ff8500 264px,#ff8300 268px,#ff8000 272px,#ff7e00 276px,#ff7b00 280px,#ff7900 284px,#ff7700 288px,#ff7400 292px,#ff7200 296px,#ff7000 300px,#ff6e00 304px,#ff6c00 308px,#ff6900 312px,#ff6700 316px)"></i><i style="top:136px;height:2px;background:linear-gradient(90deg,#00ffcd 0px,#00ffcc 4px,#00ffcb 8px,#00ffc9 12px,#00ffc8 16px,#00ffc6 20px,#00ffc5 24px,#00ffc3 28px,#00ffc1 32px,#00ffc0 36px,#00ffbe 40px,#00ffbc 44px,#00ffba 48px,#00ffb8 52px,#00ffb6 56px,#00ffb4 60px,#00ffb2 64px,#00ffb0 68px,#00ffad 72px,#00ffab 76px,#00ffa9 80px,#00ffa6 84px,#21ffa3 88px,#48ffa0 92px,#5fff9d 96px,#71ff9a 100px,#81ff97 104px,#8fff94 108px,#9cff90 112px,#a7ff8c 116px,#b2ff89 120px,#bdff84 124px,#c7ff80 128px,#d1ff7b 132px,#daff76 136px,#e4ff70 140px,#edff6a 144px,#f6ff63 148px,#feff5c 152px,#fff751 156px,#fff045 160px,#ffe937 164px,#ffe226 168px,#ffdc00 172px,#ffd600 176px,#ffd000 180px,#ffcb00 184px,#ffc600 188px,#ffc100 192px,#ffbc00 196px,#ffb800 200px,#ffb400 204px,#ffb000 208px,#ffac00 212px,#ffa800 216px,#ffa500 220px,#ffa100 224px,#ff9e00 228px,#ff9b00 232px,#ff9800 236px,#ff9500 240px,#ff9200 244px,#ff8f00 248px,#ff8c00 252px,#ff8900 256px,#ff8600 260px,#ff8400 264px,#ff8100 268px,#ff7f00 272px,#ff7c00 276px,#ff7a00 280px,#ff7800 284px,#ff7500 288px,#ff7300 292px,#ff7100 296px,#ff6e00 300px,#ff6c00 304px,#ff6a00 308px,#ff6800 312px,#ff6600 316px)"></i><i style="top:138px;height:2px;background:linear-gradient(90deg,#00ffcf 0px,#00ffce 4px,#00ffcd 8px,#00ffcb 12px,#00ffca 16px,#00ffc8 20px,#00ffc7 24px,#00ffc5 28px,#00ffc4 32px,#00ffc2 36px,#00ffc0 40px,#00ffbe 44px,#00ffbc 48px,#00ffbb 52px,#00ffb9 56px,#00ffb7 60px,#00ffb4 64px,#00ffb2 68px,#00ffb0 72px,#00ffae 76px,#00ffab 80px,#00ffa9 84px,#26ffa6 88px,#4bffa3 92px,#61ffa0 96px,#73ff9d 100px,#83ff9a 104px,#91ff97 108px,#9dff93 112px,#a9ff90 116px,#b4ff8c 120px,#bfff88 124px,#c9ff83 128px,#d3ff7f 132px,#dcff7a 136px,#e6ff74 140px,#efff6e 144px,#f8ff68 148px,#fffe60 152px,#fff555 156px,#ffee4a 160px,#ffe63d 164px,#ffe02f 168px,#ffda19 172px,#ffd400 176px,#ffce00 180px,#ffc900 184px,#ffc400 188px,#ffbf00 192px,#ffbb00 196px,#ffb600 200px,#ffb200 204px,#ffae00 208px,#ffaa00 212px,#ffa700 216px,#ffa300 220px,#ffa000 224px,#ff9c00 228px,#ff9900 232px,#ff9600 236px,#ff9300 240px,#ff9000 244px,#ff8d00 248px,#ff8a00 252px,#ff8800 256px,#ff8500 260px,#ff8200 264px,#ff8000 268px,#ff7d00 272px,#ff7b00 276px,#ff7800 280px,#ff7600 284px,#ff7400 288px,#ff7100 292px,#ff6f00 296px,#ff6d00 300px,#ff6b00 304px,#ff6900 308px,#ff6600 312px,#ff6400 316px)"></i><i style="top:140px;height:2px;background:linear-gradient(90deg,#00ffd1 0px,#00ffd0 4px,#00ffcf 8px,#00ffcd 12px,#00ffcc 16px,#00ffcb 20px,#00ffc9 24px,#00ffc7 28px,#00ffc6 32px,#00ffc4 36px,#00ffc2 40px,#00ffc1 44px,#00ffbf 48px,#00ffbd 52px,#00ffbb 56px,#00ffb9 60px,#00ffb7 64px,#00ffb5 68px,#00ffb2 72px,#00ffb0 76px,#00ffae 80px,#00ffab 84px,#2affa9 88px,#4dffa6 92px,#63ffa3 96px,#75ffa0 100px,#85ff9d 104px,#92ff9a 108px,#9fff96 112px,#abff93 116px,#b6ff8f 120px,#c1ff8b 124px,#cbff87 128px,#d5ff82 132px,#deff7d 136px,#e8ff78 140px,#f1ff72 144px,#faff6c 148px,#fffb64 152px,#fff359 156px,#ffec4f 160px,#ffe443 164px,#ffde36 168px,#ffd825 172px,#ffd200 176px,#ffcc00 180px,#ffc700 184px,#ffc200 188px,#ffbd00 192px,#ffb900 196px,#ffb500 200px,#ffb100 204px,#ffad00 208px,#ffa900 212px,#ffa500 216px,#ffa200 220px,#ff9e00 224px,#ff9b00 228px,#ff9800 232px,#ff9500 236px,#ff9100 240px,#ff8f00 244px,#ff8c00 248px,#ff8900 252px,#ff8600 256px,#ff8300 260px,#ff8100 264px,#ff7e00 268px,#ff7c00 272px,#ff7900 276px,#ff7700 280px,#ff7500 284px,#ff7200 288px,#ff7000 292px,#ff6e00 296px,#ff6b00 300px,#ff6900 304px,#ff6700 308px,#ff6500 312px,#ff6300 316px)"></i><i style="top:142px;height:2px;background:linear-gradient(90deg,#00ffd3 0px,#00ffd2 4px,#00ffd1 8px,#00ffd0 12px,#00ffce 16px,#00ffcd 20px,#00ffcb 24px,#00ffca 28px,#00ffc8 32px,#00ffc6 36px,#00ffc5 40px,#00ffc3 44px,#00ffc1 48px,#00ffbf 52px,#00ffbd 56px,#00ffbb 60px,#00ffb9 64px,#00ffb7 68px,#00ffb5 72px,#00ffb3 76px,#00ffb0 80px,#00ffae 84px,#2effab 88px,#4fffa9 92px,#65ffa6 96px,#77ffa3 100px,#86ffa0 104px,#94ff9d 108px,#a1ff9a 112px,#adff96 116px,#b8ff92 120px,#c3ff8e 124px,#cdff8a 128px,#d7ff86 132px,#e1ff81 136px,#eaff7c 140px,#f3ff77 144px,#fcff71 148px,#fff968 152px,#fff15d 156px,#ffe953 160px,#ffe248 164px,#ffdc3c 168px,#ffd62e 172px,#ffd019 176px,#ffcb00 180px,#ffc500 184px,#ffc000 188px,#ffbc00 192px,#ffb700 196px,#ffb300 200px,#ffaf00 204px,#ffab00 208px,#ffa700 212px,#ffa400 216px,#ffa000 220px,#ff9d00 224px,#ff9900 228px,#ff9600 232px,#ff9300 236px,#ff9000 240px,#ff8d00 244px,#ff8a00 248px,#ff8700 252px,#ff8500 256px,#ff8200 260px,#ff7f00 264px,#ff7d00 268px,#ff7a00 272px,#ff7800 276px,#ff7500 280px,#ff7300 284px,#ff7100 288px,#ff6e00 292px,#ff6c00 296px,#ff6a00 300px,#ff6800 304px,#ff6500 308px,#ff6300 312px,#ff6100 316px)"></i><i style="top:144px;height:2px;background:linear-gradient(90deg,#00ffd5 0px,#00ffd4 4px,#00ffd3 8px,#00ffd2 12px,#00ffd0 16px,#00ffcf 20px,#00ffcd 24px,#00ffcc 28px,#00ffca 32px,#00ffc9 36px,#00ffc7 40px,#00ffc5 44px,#00ffc4 48px,#00ffc2 52px,#00ffc0 56px,#00ffbe 60px,#00ffbc 64px,#00ffba 68px,#00ffb8 72px,#00ffb5 76px,#00ffb3 80px,#00ffb1 84px,#32ffae 88px,#52ffac 92px,#67ffa9 96px,#79ffa6 100px,#88ffa3 104px,#96ffa0 108px,#a3ff9d 112px,#afff99 116px,#baff96 120px,#c5ff92 124px,#cfff8e 128px,#d9ff89 132px,#e3ff85 136px,#ecff80 140px,#f5ff7b 144px,#feff75 148px,#fff76b 152px,#ffef61 156px,#ffe757 160px,#ffe04d 164px,#ffda41 168px,#ffd435 172px,#ffce25 176px,#ffc900 180px,#ffc400 184px,#ffbf00 188px,#ffba00 192px,#ffb600 196px,#ffb100 200px,#ffad00 204px,#ffa900 208px,#ffa600 212px,#ffa200 216px,#ff9e00 220px,#ff9b00 224px,#ff9800 228px,#ff9500 232px,#ff9100 236px,#ff8e00 240px,#ff8b00 244px,#ff8900 248px,#ff8600 252px,#ff8300 256px,#ff8000 260px,#ff7e00 264px,#ff7b00 268px,#ff7900 272px,#ff7600 276px,#ff7400 280px,#ff7200 284px,#ff6f00 288px,#ff6d00 292px,#ff6b00 296px,#ff6800 300px,#ff6600 304px,#ff6400 308px,#ff6200 312px,#ff6000 316px)"></i><i style="top:146px;height:2px;background:linear-gradient(90deg,#00ffd8 0px,#00ffd7 4px,#00ffd5 8px,#00ffd4 12px,#00ffd2 16px,#00ffd1 20px,#00ffd0 24px,#00ffce 28px,#00ffcd 32px,#00ffcb 36px,#00ffc9 40px,#00ffc8 44px,#00ffc6 48px,#00ffc4 52px,#00ffc2 56px,#00ffc0 60px,#00ffbe 64px,#00ffbc 68px,#00ffba 72px,#00ffb8 76px,#00ffb6 80px,#00ffb3 84px,#35ffb1 88px,#54ffae 92px,#69ffac 96px,#7bffa9 100px,#8affa6 104px,#98ffa3 108px,#a5ffa0 112px,#b1ff9c 116px,#bcff99 120px,#c7ff95 124px,#d1ff91 128px,#dbff8d 132px,#e5ff89 136px,#eeff84 140px,#f8ff7f 144px,#fffd78 148px,#fff56e 152px,#ffed65 156px,#ffe55b 160px,#ffde51 164px,#ffd846 168px,#ffd23b 172px,#ffcc2d 176px,#ffc719 180px,#ffc200 184px,#ffbd00 188px,#ffb800 192px,#ffb400 196px,#ffb000 200px,#ffac00 204px,#ffa800 208px,#ffa400 212px,#ffa000 216px,#ff9d00 220px,#ff9900 224px,#ff9600 228px,#ff9300 232px,#ff9000 236px,#ff8d00 240px,#ff8a00 244px,#ff8700 248px,#ff8400 252px,#ff8200 256px,#ff7f00 260px,#ff7c00 264px,#ff7a00 268px,#ff7700 272px,#ff7500 276px,#ff7200 280px,#ff7000 284px,#ff6e00 288px,#ff6b00 292px,#ff6900 296px,#ff6700 300px,#ff6500 304px,#ff6200 308px,#ff6000 312px,#ff5e00 316px)"></i><i style="top:148px;height:2px;background:linear-gradient(90deg,#00ffda 0px,#00ffd9 4px,#00ffd7 8px,#00ffd6 12px,#00ffd5 16px,#00ffd3 20px,#00ffd2 24px,#00ffd0 28px,#00ffcf 32px,#00ffcd 36px,#00ffcc 40px,#00ffca 44px,#00ffc8 48px,#00ffc7 52px,#00ffc5 56px,#00ffc3 60px,#00ffc1 64px,#00ffbf 68px,#00ffbd 72px,#00ffbb 76px,#00ffb8 80px,#00ffb6 84px,#39ffb4 88px,#56ffb1 92px,#6bffaf 96px,#7dffac 100px,#8cffa9 104px,#9affa6 108px,#a7ffa3 112px,#b2ffa0 116px,#beff9c 120px,#c9ff98 124px,#d3ff95 128px,#ddff91 132px,#e7ff8c 136px,#f1ff88 140px,#faff83 144px,#fffb7b 148px,#fff271 152px,#ffea68 156px,#ffe35e 160px,#ffdc55 164px,#ffd64b 168px,#ffd040 172px,#ffca34 176px,#ffc524 180px,#ffc000 184px,#ffbb00 188px,#ffb600 192px,#ffb200 196px,#ffae00 200px,#ffaa00 204px,#ffa600 208px,#ffa200 212px,#ff9f00 216px,#ff9b00 220px,#ff9800 224px,#ff9400 228px,#ff9100 232px,#ff8e00 236px,#ff8b00 240px,#ff8800 244px,#ff8500 248px,#ff8300 252px,#ff8000 256px,#ff7d00 260px,#ff7b00 264px,#ff7800 268px,#ff7600 272px,#ff7300 276px,#ff7100 280px,#ff6e00 284px,#ff6c00 288px,#ff6a00 292px,#ff6700 296px,#ff6500 300px,#ff6300 304px,#ff6100 308px,#ff5f00 312px,#ff5c00 316px)"></i><i style="top:150px;height:2px;background:linear-gradient(90deg,#00ffdc 0px,#00ffdb 4px,#00ffda 8px,#00ffd8 12px,#00ffd7 16px,#00ffd6 20px,#00ffd4 24px,#00ffd3 28px,#00ffd1 32px,#00ffd0 36px,#00ffce 40px,#00ffcc 44px,#00ffcb 48px,#00ffc9 52px,#00ffc7 56px,#00ffc5 60px,#00ffc3 64px,#00ffc1 68px,#00ffbf 72px,#00ffbd 76px,#00ffbb 80px,#00ffb9 84px,#3cffb6 88px,#59ffb4 92px,#6dffb1 96px,#7fffaf 100px,#8effac 104px,#9cffa9 108px,#a8ffa6 112px,#b4ffa3 116px,#c0ff9f 120px,#cbff9c 124px,#d5ff98 128px,#dfff94 132px,#e9ff90 136px,#f3ff8b 140px,#fcff87 144px,#fff97e 148px,#fff075 152px,#ffe86b 156px,#ffe162 160px,#ffda59 164px,#ffd44f 168px,#ffce45 172px,#ffc83a 176px,#ffc32c 180px,#ffbe19 184px,#ffb900 188px,#ffb500 192px,#ffb000 196px,#ffac00 200px,#ffa800 204px,#ffa400 208px,#ffa100 212px,#ff9d00 216px,#ff9900 220px,#ff9600 224px,#ff9300 228px,#ff9000 232px,#ff8d00 236px,#ff8a00 240px,#ff8700 244px,#ff8400 248px,#ff8100 252px,#ff7e00 256px,#ff7c00 260px,#ff7900 264px,#ff7700 268px,#ff7400 272px,#ff7200 276px,#ff6f00 280px,#ff6d00 284px,#ff6a00 288px,#ff6800 292px,#ff6600 296px,#ff6400 300px,#ff6100 304px,#ff5f00 308px,#ff5d00 312px,#ff5b00 316px)"></i><i style="top:152px;height:2px;background:linear-gradient(90deg,#00ffde 0px,#00ffdd 4px,#00ffdc 8px,#00ffda 12px,#00ffd9 16px,#00ffd8 20px,#00ffd6 24px,#00ffd5 28px,#00ffd4 32px,#00ffd2 36px,#00ffd0 40px,#00ffcf 44px,#00ffcd 48px,#00ffcb 52px,#00ffca 56px,#00ffc8 60px,#00ffc6 64px,#00ffc4 68px,#00ffc2 72px,#00ffc0 76px,#00ffbe 80px,#00ffbc 84px,#3fffb9 88px,#5bffb7 92px,#6fffb4 96px,#81ffb2 100px,#90ffaf 104px,#9effac 108px,#aaffa9 112px,#b6ffa6 116px,#c2ffa3 120px,#cdff9f 124px,#d7ff9c 128px,#e1ff98 132px,#ebff94 136px,#f5ff8f 140px,#ffff8a 144px,#fff681 148px,#ffee77 152px,#ffe66e 156px,#ffdf65 160px,#ffd85c 164px,#ffd253 168px,#ffcc49 172px,#ffc73f 176px,#ffc133 180px,#ffbc24 184px,#ffb700 188px,#ffb300 192px,#ffaf00 196px,#ffaa00 200px,#ffa600 204px,#ffa300 208px,#ff9f00 212px,#ff9b00 216px,#ff9800 220px,#ff9400 224px,#ff9100 228px,#ff8e00 232px,#ff8b00 236px,#ff8800 240px,#ff8500 244px,#ff8200 248px,#ff8000 252px,#ff7d00 256px,#ff7a00 260px,#ff7800 264px,#ff7500 268px,#ff7200 272px,#ff7000 276px,#ff6e00 280px,#ff6b00 284px,#ff6900 288px,#ff6600 292px,#ff6400 296px,#ff6200 300px,#ff6000 304px,#ff5d00 308px,#ff5b00 312px,#ff5900 316px)"></i><i style="top:154px;height:2px;background:linear-gradient(90deg,#00ffe0 0px,#00ffdf 4px,#00ffde 8px,#00ffdd 12px,#00ffdb 16px,#00ffda 20px,#00ffd9 24px,#00ffd7 28px,#00ffd6 32px,#00ffd4 36px,#00ffd3 40px,#00ffd1 44px,#00ffd0 48px,#00ffce 52px,#00ffcc 56px,#00ffca 60px,#00ffc9 64px,#00ffc7 68px,#00ffc5 72px,#00ffc3 76px,#00ffc1 80px,#00ffbe 84px,#42ffbc 88px,#5dffba 92px,#72ffb7 96px,#83ffb5 100px,#92ffb2 104px,#a0ffaf 108px,#acffac 112px,#b8ffa9 116px,#c4ffa6 120px,#cfffa3 124px,#d9ff9f 128px,#e4ff9b 132px,#eeff97 136px,#f8ff93 140px,#fffd8d 144px,#fff484 148px,#ffec7a 152px,#ffe471 156px,#ffdd68 160px,#ffd65f 164px,#ffd056 168px,#ffca4d 172px,#ffc543 176px,#ffbf39 180px,#ffba2c 184px,#ffb619 188px,#ffb100 192px,#ffad00 196px,#ffa900 200px,#ffa500 204px,#ffa100 208px,#ff9d00 212px,#ff9a00 216px,#ff9600 220px,#ff9300 224px,#ff9000 228px,#ff8c00 232px,#ff8900 236px,#ff8600 240px,#ff8400 244px,#ff8100 248px,#ff7e00 252px,#ff7b00 256px,#ff7900 260px,#ff7600 264px,#ff7300 268px,#ff7100 272px,#ff6e00 276px,#ff6c00 280px,#ff6a00 284px,#ff6700 288px,#ff6500 292px,#ff6300 296px,#ff6000 300px,#ff5e00 304px,#ff5c00 308px,#ff5900 312px,#ff5700 316px)"></i><i style="top:156px;height:2px;background:linear-gradient(90deg,#00ffe2 0px,#00ffe1 4px,#00ffe0 8px,#00ffdf 12px,#00ffde 16px,#00ffdc 20px,#00ffdb 24px,#00ffda 28px,#00ffd8 32px,#00ffd7 36px,#00ffd5 40px,#00ffd4 44px,#00ffd2 48px,#00ffd1 52px,#00ffcf 56px,#00ffcd 60px,#00ffcb 64px,#00ffc9 68px,#00ffc7 72px,#00ffc5 76px,#00ffc3 80px,#00ffc1 84px,#45ffbf 88px,#5fffbd 92px,#74ffba 96px,#85ffb8 100px,#94ffb5 104px,#a2ffb2 108px,#aeffb0 112px,#baffad 116px,#c6ffa9 120px,#d1ffa6 124px,#dcffa3 128px,#e6ff9f 132px,#f0ff9b 136px,#faff97 140px,#fffa90 144px,#fff286 148px,#ffe97d 152px,#ffe274 156px,#ffdb6b 160px,#ffd463 164px,#ffce5a 168px,#ffc851 172px,#ffc348 176px,#ffbd3e 180px,#ffb932 184px,#ffb424 188px,#ffaf00 192px,#ffab00 196px,#ffa700 200px,#ffa300 204px,#ff9f00 208px,#ff9b00 212px,#ff9800 216px,#ff9400 220px,#ff9100 224px,#ff8e00 228px,#ff8b00 232px,#ff8800 236px,#ff8500 240px,#ff8200 244px,#ff7f00 248px,#ff7c00 252px,#ff7a00 256px,#ff7700 260px,#ff7400 264px,#ff7200 268px,#ff6f00 272px,#ff6d00 276px,#ff6a00 280px,#ff6800 284px,#ff6500 288px,#ff6300 292px,#ff6100 296px,#ff5e00 300px,#ff5c00 304px,#ff5a00 308px,#ff5800 312px,#ff5500 316px)"></i><i style="top:158px;height:2px;background:linear-gradient(90deg,#00ffe5 0px,#00ffe4 4px,#00ffe2 8px,#00ffe1 12px,#00ffe0 16px,#00ffdf 20px,#00ffdd 24px,#00ffdc 28px,#00ffdb 32px,#00ffd9 36px,#00ffd8 40px,#00ffd6 44px,#00ffd5 48px,#00ffd3 52px,#00ffd1 56px,#00ffd0 60px,#00ffce 64px,#00ffcc 68px,#00ffca 72px,#00ffc8 76px,#00ffc6 80px,#12ffc4 84px,#48ffc2 88px,#62ffc0 92px,#76ffbd 96px,#87ffbb 100px,#96ffb8 104px,#a4ffb6 108px,#b0ffb3 112px,#bdffb0 116px,#c8ffad 120px,#d3ffa9 124px,#deffa6 128px,#e8ffa2 132px,#f2ff9f 136px,#fcff9b 140px,#fff892 144px,#ffef89 148px,#ffe780 152px,#ffe077 156px,#ffd96e 160px,#ffd266 164px,#ffcc5d 168px,#ffc654 172px,#ffc14c 176px,#ffbc42 180px,#ffb738 184px,#ffb22b 188px,#ffae19 192px,#ffa900 196px,#ffa500 200px,#ffa100 204px,#ff9d00 208px,#ff9a00 212px,#ff9600 216px,#ff9300 220px,#ff8f00 224px,#ff8c00 228px,#ff8900 232px,#ff8600 236px,#ff8300 240px,#ff8000 244px,#ff7d00 248px,#ff7b00 252px,#ff7800 256px,#ff7500 260px,#ff7300 264px,#ff7000 268px,#ff6e00 272px,#ff6b00 276px,#ff6900 280px,#ff6600 284px,#ff6400 288px,#ff6100 292px,#ff5f00 296px,#ff5d00 300px,#ff5a00 304px,#ff5800 308px,#ff5600 312px,#ff5400 316px)"></i><i style="top:160px;height:2px;background:linear-gradient(90deg,#00ffe7 0px,#00ffe6 4px,#00ffe5 8px,#00ffe3 12px,#00ffe2 16px,#00ffe1 20px,#00ffe0 24px,#00ffde 28px,#00ffdd 32px,#00ffdc 36px,#00ffda 40px,#00ffd9 44px,#00ffd7 48px,#00ffd6 52px,#00ffd4 56px,#00ffd2 60px,#00ffd1 64px,#00ffcf 68px,#00ffcd 72px,#00ffcb 76px,#00ffc9 80px,#1bffc7 84px,#4affc5 88px,#64ffc3 92px,#78ffc0 96px,#89ffbe 100px,#98ffbb 104px,#a6ffb9 108px,#b2ffb6 112px,#bfffb3 116px,#caffb0 120px,#d5ffad 124px,#e0ffaa 128px,#ebffa6 132px,#f5ffa2 136px,#ffff9e 140px,#fff694 144px,#ffed8b 148px,#ffe582 152px,#ffdd79 156px,#ffd671 160px,#ffd069 164px,#ffca60 168px,#ffc458 172px,#ffbf4f 176px,#ffba46 180px,#ffb53c 184px,#ffb031 188px,#ffac23 192px,#ffa700 196px,#ffa300 200px,#ff9f00 204px,#ff9c00 208px,#ff9800 212px,#ff9400 216px,#ff9100 220px,#ff8e00 224px,#ff8b00 228px,#ff8700 232px,#ff8400 236px,#ff8100 240px,#ff7f00 244px,#ff7c00 248px,#ff7900 252px,#ff7600 256px,#ff7400 260px,#ff7100 264px,#ff6e00 268px,#ff6c00 272px,#ff6900 276px,#ff6700 280px,#ff6400 284px,#ff6200 288px,#ff6000 292px,#ff5d00 296px,#ff5b00 300px,#ff5900 304px,#ff5600 308px,#ff5400 312px,#ff5200 316px)"></i><i style="top:162px;height:2px;background:linear-gradient(90deg,#00ffe9 0px,#00ffe8 4px,#00ffe7 8px,#00ffe6 12px,#00ffe5 16px,#00ffe3 20px,#00ffe2 24px,#00ffe1 28px,#00ffe0 32px,#00ffde 36px,#00ffdd 40px,#00ffdb 44px,#00ffda 48px,#00ffd8 52px,#00ffd7 56px,#00ffd5 60px,#00ffd3 64px,#00ffd2 68px,#00ffd0 72px,#00ffce 76px,#00ffcc 80px,#22ffca 84px,#4dffc8 88px,#66ffc6 92px,#7affc3 96px,#8bffc1 100px,#9affbf 104px,#a8ffbc 108px,#b5ffb9 112px,#c1ffb6 116px,#ccffb3 120px,#d8ffb0 124px,#e3ffad 128px,#edffaa 132px,#f7ffa6 136px,#fffca1 140px,#fff397 144px,#ffea8d 148px,#ffe384 152px,#ffdb7c 156px,#ffd474 160px,#ffce6b 164px,#ffc863 168px,#ffc25b 172px,#ffbd53 176px,#ffb84a 180px,#ffb341 184px,#ffae37 188px,#ffaa2b 192px,#ffa619 196px,#ffa200 200px,#ff9e00 204px,#ff9a00 208px,#ff9600 212px,#ff9300 216px,#ff8f00 220px,#ff8c00 224px,#ff8900 228px,#ff8600 232px,#ff8300 236px,#ff8000 240px,#ff7d00 244px,#ff7a00 248px,#ff7700 252px,#ff7500 256px,#ff7200 260px,#ff6f00 264px,#ff6d00 268px,#ff6a00 272px,#ff6800 276px,#ff6500 280px,#ff6300 284px,#ff6000 288px,#ff5e00 292px,#ff5c00 296px,#ff5900 300px,#ff5700 304px,#ff5400 308px,#ff5200 312px,#ff5000 316px)"></i><i style="top:164px;height:2px;background:linear-gradient(90deg,#00ffeb 0px,#00ffea 4px,#00ffe9 8px,#00ffe8 12px,#00ffe7 16px,#00ffe6 20px,#00ffe5 24px,#00ffe3 28px,#00ffe2 32px,#00ffe1 36px,#00ffdf 40px,#00ffde 44px,#00ffdc 48px,#00ffdb 52px,#00ffd9 56px,#00ffd8 60px,#00ffd6 64px,#00ffd4 68px,#00ffd3 72px,#00ffd1 76px,#00ffcf 80px,#28ffcd 84px,#50ffcb 88px,#68ffc9 92px,#7cffc6 96px,#8dffc4 100px,#9cffc2 104px,#aaffbf 108px,#b7ffbd 112px,#c3ffba 116px,#cfffb7 120px,#daffb4 124px,#e5ffb1 128px,#f0ffad 132px,#faffaa 136px,#fffaa3 140px,#fff199 144px,#ffe890 148px,#ffe087 152px,#ffd97e 156px,#ffd276 160px,#ffcc6e 164px,#ffc666 168px,#ffc05e 172px,#ffbb56 176px,#ffb64e 180px,#ffb145 184px,#ffac3b 188px,#ffa831 192px,#ffa423 196px,#ffa003 200px,#ff9c00 204px,#ff9800 208px,#ff9400 212px,#ff9100 216px,#ff8e00 220px,#ff8a00 224px,#ff8700 228px,#ff8400 232px,#ff8100 236px,#ff7e00 240px,#ff7b00 244px,#ff7800 248px,#ff7600 252px,#ff7300 256px,#ff7000 260px,#ff6e00 264px,#ff6b00 268px,#ff6800 272px,#ff6600 276px,#ff6300 280px,#ff6100 284px,#ff5e00 288px,#ff5c00 292px,#ff5a00 296px,#ff5700 300px,#ff5500 304px,#ff5300 308px,#ff5000 312px,#ff4e00 316px)"></i><i style="top:166px;height:2px;background:linear-gradient(90deg,#00ffee 0px,#00ffed 4px,#00ffec 8px,#00ffeb 12px,#00ffe9 16px,#00ffe8 20px,#00ffe7 24px,#00ffe6 28px,#00ffe5 32px,#00ffe3 36px,#00ffe2 40px,#00ffe0 44px,#00ffdf 48px,#00ffde 52px,#00ffdc 56px,#00ffda 60px,#00ffd9 64px,#00ffd7 68px,#00ffd5 72px,#00ffd4 76px,#00ffd2 80px,#2cffd0 84px,#52ffce 88px,#6bffcc 92px,#7effca 96px,#8fffc7 100px,#9effc5 104px,#acffc2 108px,#b9ffc0 112px,#c5ffbd 116px,#d1ffba 120px,#dcffb7 124px,#e7ffb4 128px,#f2ffb1 132px,#fdffae 136px,#fff7a5 140px,#ffee9b 144px,#ffe692 148px,#ffde89 152px,#ffd781 156px,#ffd079 160px,#ffca71 164px,#ffc469 168px,#ffbe61 172px,#ffb959 176px,#ffb451 180px,#ffaf49 184px,#ffaa40 188px,#ffa636 192px,#ffa22a 196px,#ff9e19 200px,#ff9a00 204px,#ff9600 208px,#ff9300 212px,#ff8f00 216px,#ff8c00 220px,#ff8900 224px,#ff8500 228px,#ff8200 232px,#ff7f00 236px,#ff7c00 240px,#ff7900 244px,#ff7700 248px,#ff7400 252px,#ff7100 256px,#ff6e00 260px,#ff6c00 264px,#ff6900 268px,#ff6700 272px,#ff6400 276px,#ff6200 280px,#ff5f00 284px,#ff5d00 288px,#ff5a00 292px,#ff5800 296px,#ff5500 300px,#ff5300 304px,#ff5100 308px,#ff4e00 312px,#ff4c00 316px)"></i><i style="top:168px;height:2px;background:linear-gradient(90deg,#00fff0 0px,#00ffef 4px,#00ffee 8px,#00ffed 12px,#00ffec 16px,#00ffeb 20px,#00ffea 24px,#00ffe8 28px,#00ffe7 32px,#00ffe6 36px,#00ffe4 40px,#00ffe3 44px,#00ffe2 48px,#00ffe0 52px,#00ffdf 56px,#00ffdd 60px,#00ffdc 64px,#00ffda 68px,#00ffd8 72px,#00ffd7 76px,#00ffd5 80px,#31ffd3 84px,#55ffd1 88px,#6dffcf 92px,#80ffcd 96px,#91ffca 100px,#a0ffc8 104px,#aeffc6 108px,#bbffc3 112px,#c7ffc1 116px,#d3ffbe 120px,#dfffbb 124px,#eaffb8 128px,#f5ffb5 132px,#ffffb1 136px,#fff5a7 140px,#ffec9d 144px,#ffe394 148px,#ffdc8b 152px,#ffd483 156px,#ffce7b 160px,#ffc873 164px,#ffc26b 168px,#ffbc64 172px,#ffb75c 176px,#ffb254 180px,#ffad4c 184px,#ffa944 188px,#ffa43a 192px,#ffa030 196px,#ff9c23 200px,#ff9806 204px,#ff9400 208px,#ff9100 212px,#ff8d00 216px,#ff8a00 220px,#ff8700 224px,#ff8400 228px,#ff8000 232px,#ff7d00 236px,#ff7a00 240px,#ff7800 244px,#ff7500 248px,#ff7200 252px,#ff6f00 256px,#ff6d00 260px,#ff6a00 264px,#ff6700 268px,#ff6500 272px,#ff6200 276px,#ff6000 280px,#ff5d00 284px,#ff5b00 288px,#ff5800 292px,#ff5600 296px,#ff5300 300px,#ff5100 304px,#ff4f00 308px,#ff4c00 312px,#ff4a00 316px)"></i><i style="top:170px;height:2px;background:linear-gradient(90deg,#00fff2 0px,#00fff1 4px,#00fff0 8px,#00ffef 12px,#00ffee 16px,#00ffed 20px,#00ffec 24px,#00ffeb 28px,#00ffea 32px,#00ffe8 36px,#00ffe7 40px,#00ffe6 44px,#00ffe4 48px,#00ffe3 52px,#00ffe2 56px,#00ffe0 60px,#00ffde 64px,#00ffdd 68px,#00ffdb 72px,#00ffda 76px,#00ffd8 80px,#35ffd6 84px,#58ffd4 88px,#6fffd2 92px,#82ffd0 96px,#93ffce 100px,#a2ffcb 104px,#b0ffc9 108px,#bdffc7 112px,#caffc4 116px,#d6ffc1 120px,#e1ffbf 124px,#ecffbc 128px,#f7ffb9 132px,#fffcb3 136px,#fff2a9 140px,#ffe99f 144px,#ffe196 148px,#ffd98e 152px,#ffd285 156px,#ffcc7d 160px,#ffc576 164px,#ffc06e 168px,#ffba66 172px,#ffb55f 176px,#ffb057 180px,#ffab4f 184px,#ffa747 188px,#ffa23f 192px,#ff9e35 196px,#ff9a2a 200px,#ff9619 204px,#ff9300 208px,#ff8f00 212px,#ff8c00 216px,#ff8800 220px,#ff8500 224px,#ff8200 228px,#ff7f00 232px,#ff7c00 236px,#ff7900 240px,#ff7600 244px,#ff7300 248px,#ff7000 252px,#ff6d00 256px,#ff6b00 260px,#ff6800 264px,#ff6600 268px,#ff6300 272px,#ff6000 276px,#ff5e00 280px,#ff5b00 284px,#ff5900 288px,#ff5600 292px,#ff5400 296px,#ff5100 300px,#ff4f00 304px,#ff4d00 308px,#ff4a00 312px,#ff4800 316px)"></i><i style="top:172px;height:2px;background:linear-gradient(90deg,#00fff5 0px,#00fff4 4px,#00fff3 8px,#00fff2 12px,#00fff1 16px,#00fff0 20px,#00ffef 24px,#00ffed 28px,#00ffec 32px,#00ffeb 36px,#00ffea 40px,#00ffe8 44px,#00ffe7 48px,#00ffe6 52px,#00ffe4 56px,#00ffe3 60px,#00ffe1 64px,#00ffe0 68px,#00ffde 72px,#00ffdd 76px,#00ffdb 80px,#39ffd9 84px,#5affd7 88px,#72ffd5 92px,#85ffd3 96px,#95ffd1 100px,#a5ffcf 104px,#b3ffcd 108px,#c0ffca 112px,#ccffc8 116px,#d8ffc5 120px,#e4ffc2 124px,#efffbf 128px,#faffbc 132px,#fff9b5 136px,#fff0ab 140px,#ffe7a1 144px,#ffdf98 148px,#ffd790 152px,#ffd087 156px,#ffc980 160px,#ffc378 164px,#ffbd70 168px,#ffb869 172px,#ffb362 176px,#ffae5a 180px,#ffa953 184px,#ffa54b 188px,#ffa042 192px,#ff9c39 196px,#ff982f 200px,#ff9422 204px,#ff9108 208px,#ff8d00 212px,#ff8a00 216px,#ff8600 220px,#ff8300 224px,#ff8000 228px,#ff7d00 232px,#ff7a00 236px,#ff7700 240px,#ff7400 244px,#ff7100 248px,#ff6e00 252px,#ff6c00 256px,#ff6900 260px,#ff6600 264px,#ff6400 268px,#ff6100 272px,#ff5e00 276px,#ff5c00 280px,#ff5900 284px,#ff5700 288px,#ff5400 292px,#ff5200 296px,#ff4f00 300px,#ff4d00 304px,#ff4a00 308px,#ff4800 312px,#ff4500 316px)"></i><i style="top:174px;height:2px;background:linear-gradient(90deg,#00fff7 0px,#00fff6 4px,#00fff5 8px,#00fff4 12px,#00fff3 16px,#00fff2 20px,#00fff1 24px,#00fff0 28px,#00ffef 32px,#00ffee 36px,#00ffec 40px,#00ffeb 44px,#00ffea 48px,#00ffe9 52px,#00ffe7 56px,#00ffe6 60px,#00ffe4 64px,#00ffe3 68px,#00ffe1 72px,#00ffe0 76px,#00ffde 80px,#3dffdc 84px,#5dffda 88px,#74ffd8 92px,#87ffd6 96px,#98ffd4 100px,#a7ffd2 104px,#b5ffd0 108px,#c2ffce 112px,#cfffcb 116px,#dbffc9 120px,#e6ffc6 124px,#f2ffc3 128px,#fdffc0 132px,#fff7b7 136px,#ffedad 140px,#ffe4a3 144px,#ffdc9a 148px,#ffd592 152px,#ffce8a 156px,#ffc782 160px,#ffc17a 164px,#ffbb73 168px,#ffb66b 172px,#ffb164 176px,#ffac5d 180px,#ffa756 184px,#ffa34e 188px,#ff9e46 192px,#ff9a3e 196px,#ff9634 200px,#ff9329 204px,#ff8f19 208px,#ff8b00 212px,#ff8800 216px,#ff8500 220px,#ff8100 224px,#ff7e00 228px,#ff7b00 232px,#ff7800 236px,#ff7500 240px,#ff7200 244px,#ff6f00 248px,#ff6d00 252px,#ff6a00 256px,#ff6700 260px,#ff6400 264px,#ff6200 268px,#ff5f00 272px,#ff5d00 276px,#ff5a00 280px,#ff5700 284px,#ff5500 288px,#ff5200 292px,#ff5000 296px,#ff4d00 300px,#ff4b00 304px,#ff4800 308px,#ff4600 312px,#ff4300 316px)"></i><i style="top:176px;height:2px;background:linear-gradient(90deg,#00fff9 0px,#00fff9 4px,#00fff8 8px,#00fff7 12px,#00fff6 16px,#00fff5 20px,#00fff4 24px,#00fff3 28px,#00fff2 32px,#00fff0 36px,#00ffef 40px,#00ffee 44px,#00ffed 48px,#00ffeb 52px,#00ffea 56px,#00ffe9 60px,#00ffe7 64px,#00ffe6 68px,#00ffe4 72px,#00ffe3 76px,#00ffe1 80px,#40ffdf 84px,#5fffdd 88px,#76ffdc 92px,#89ffda 96px,#9affd8 100px,#a9ffd6 104px,#b7ffd3 108px,#c4ffd1 112px,#d1ffcf 116px,#ddffcc 120px,#e9ffca 124px,#f4ffc7 128px,#fffec4 132px,#fff4b9 136px,#ffeaaf 140px,#ffe2a5 144px,#ffda9c 148px,#ffd294 152px,#ffcb8c 156px,#ffc584 160px,#ffbf7c 164px,#ffb975 168px,#ffb46e 172px,#ffaf67 176px,#ffaa60 180px,#ffa558 184px,#ffa151 188px,#ff9c49 192px,#ff9841 196px,#ff9439 200px,#ff912f 204px,#ff8d22 208px,#ff8909 212px,#ff8600 216px,#ff8300 220px,#ff7f00 224px,#ff7c00 228px,#ff7900 232px,#ff7600 236px,#ff7300 240px,#ff7000 244px,#ff6d00 248px,#ff6b00 252px,#ff6800 256px,#ff6500 260px,#ff6200 264px,#ff6000 268px,#ff5d00 272px,#ff5b00 276px,#ff5800 280px,#ff5500 284px,#ff5300 288px,#ff5000 292px,#ff4e00 296px,#ff4b00 300px,#ff4900 304px,#ff4600 308px,#ff4300 312px,#ff4100 316px)"></i><i style="top:178px;height:2px;background:linear-gradient(90deg,#00fffc 0px,#00fffb 4px,#00fffa 8px,#00fff9 12px,#00fff8 16px,#00fff7 20px,#00fff6 24px,#00fff5 28px,#00fff4 32px,#00fff3 36px,#00fff2 40px,#00fff1 44px,#00fff0 48px,#00ffee 52px,#00ffed 56px,#00ffec 60px,#00ffea 64px,#00ffe9 68px,#00ffe7 72px,#00ffe6 76px,#00ffe4 80px,#43ffe2 84px,#62ffe1 88px,#79ffdf 92px,#8bffdd 96px,#9cffdb 100px,#abffd9 104px,#b9ffd7 108px,#c7ffd5 112px,#d4ffd2 116px,#e0ffd0 120px,#ecffce 124px,#f7ffcb 128px,#fffcc5 132px,#fff1ba 136px,#ffe8b0 140px,#ffdfa7 144px,#ffd79e 148px,#ffd096 152px,#ffc98e 156px,#ffc386 160px,#ffbd7f 164px,#ffb777 168px,#ffb270 172px,#ffad69 176px,#ffa862 180px,#ffa35b 184px,#ff9f54 188px,#ff9a4d 192px,#ff9645 196px,#ff933d 200px,#ff8f33 204px,#ff8b29 208px,#ff8819 212px,#ff8400 216px,#ff8100 220px,#ff7e00 224px,#ff7a00 228px,#ff7700 232px,#ff7400 236px,#ff7100 240px,#ff6e00 244px,#ff6b00 248px,#ff6900 252px,#ff6600 256px,#ff6300 260px,#ff6000 264px,#ff5e00 268px,#ff5b00 272px,#ff5900 276px,#ff5600 280px,#ff5300 284px,#ff5100 288px,#ff4e00 292px,#ff4b00 296px,#ff4900 300px,#ff4600 304px,#ff4400 308px,#ff4100 312px,#ff3e00 316px)"></i><i style="top:180px;height:2px;background:linear-gradient(90deg,#00fffe 0px,#00fffe 4px,#00fffd 8px,#00fffc 12px,#00fffb 16px,#00fffa 20px,#00fff9 24px,#00fff8 28px,#00fff7 32px,#00fff6 36px,#00fff5 40px,#00fff4 44px,#00fff2 48px,#00fff1 52px,#00fff0 56px,#00ffef 60px,#00ffed 64px,#00ffec 68px,#00ffea 72px,#00ffe9 76px,#00ffe7 80px,#47ffe6 84px,#65ffe4 88px,#7bffe2 92px,#8effe0 96px,#9effdf 100px,#aeffdd 104px,#bcffdb 108px,#c9ffd8 112px,#d6ffd6 116px,#e2ffd4 120px,#eeffd1 124px,#faffcf 128px,#fff9c7 132px,#ffeebc 136px,#ffe5b2 140px,#ffdda9 144px,#ffd5a0 148px,#ffce98 152px,#ffc790 156px,#ffc088 160px,#ffba81 164px,#ffb579 168px,#ffb072 172px,#ffaa6c 176px,#ffa665 180px,#ffa15e 184px,#ff9d57 188px,#ff9950 192px,#ff9448 196px,#ff9140 200px,#ff8d38 204px,#ff892e 208px,#ff8622 212px,#ff820a 216px,#ff7f00 220px,#ff7c00 224px,#ff7800 228px,#ff7500 232px,#ff7200 236px,#ff6f00 240px,#ff6c00 244px,#ff6a00 248px,#ff6700 252px,#ff6400 256px,#ff6100 260px,#ff5e00 264px,#ff5c00 268px,#ff5900 272px,#ff5600 276px,#ff5400 280px,#ff5100 284px,#ff4e00 288px,#ff4c00 292px,#ff4900 296px,#ff4700 300px,#ff4400 304px,#ff4100 308px,#ff3e00 312px,#ff3b00 316px)"></i><i style="top:182px;height:2px;background:linear-gradient(90deg,#00fdff 0px,#00feff 4px,#00ffff 8px,#00ffff 12px,#00fffe 16px,#00fffd 20px,#00fffc 24px,#00fffb 28px,#00fffa 32px,#00fff9 36px,#00fff8 40px,#00fff6 44px,#00fff5 48px,#00fff4 52px,#00fff3 56px,#00fff2 60px,#00fff0 64px,#00ffef 68px,#00ffee 72px,#00ffec 76px,#00ffeb 80px,#4affe9 84px,#67ffe7 88px,#7dffe6 92px,#90ffe4 96px,#a1ffe2 100px,#b0ffe0 104px,#beffde 108px,#ccffdc 112px,#d9ffda 116px,#e5ffd8 120px,#f1ffd5 124px,#fdffd3 128px,#fff6c9 132px,#ffecbe 136px,#ffe3b4 140px,#ffdaab 144px,#ffd2a2 148px,#ffcb9a 152px,#ffc492 156px,#ffbe8a 160px,#ffb883 164px,#ffb37c 168px,#ffad75 172px,#ffa86e 176px,#ffa467 180px,#ff9f60 184px,#ff9b59 188px,#ff9653 192px,#ff924b 196px,#ff8f44 200px,#ff8b3c 204px,#ff8733 208px,#ff8428 212px,#ff8019 216px,#ff7d00 220px,#ff7a00 224px,#ff7600 228px,#ff7300 232px,#ff7000 236px,#ff6d00 240px,#ff6a00 244px,#ff6800 248px,#ff6500 252px,#ff6200 256px,#ff5f00 260px,#ff5c00 264px,#ff5a00 268px,#ff5700 272px,#ff5400 276px,#ff5200 280px,#ff4f00 284px,#ff4c00 288px,#ff4a00 292px,#ff4700 296px,#ff4400 300px,#ff4100 304px,#ff3e00 308px,#ff3c00 312px,#ff3900 316px)"></i><i style="top:184px;height:2px;background:linear-gradient(90deg,#00fbff 0px,#00fbff 4px,#00fcff 8px,#00fdff 12px,#00feff 16px,#00ffff 20px,#00fffe 24px,#00fffe 28px,#00fffd 32px,#00fffc 36px,#00fffa 40px,#00fff9 44px,#00fff8 48px,#00fff7 52px,#00fff6 56px,#00fff5 60px,#00fff3 64px,#00fff2 68px,#00fff1 72px,#00ffef 76px,#10ffee 80px,#4dffec 84px,#6affeb 88px,#80ffe9 92px,#93ffe7 96px,#a3ffe6 100px,#b3ffe4 104px,#c1ffe2 108px,#ceffe0 112px,#dbffde 116px,#e8ffdc 120px,#f4ffd9 124px,#fffed6 128px,#fff3ca 132px,#ffe9c0 136px,#ffe0b6 140px,#ffd8ac 144px,#ffd0a4 148px,#ffc99b 152px,#ffc293 156px,#ffbc8c 160px,#ffb685 164px,#ffb07e 168px,#ffab77 172px,#ffa670 176px,#ffa269 180px,#ff9d63 184px,#ff995c 188px,#ff9455 192px,#ff904e 196px,#ff8d47 200px,#ff893f 204px,#ff8537 208px,#ff822d 212px,#ff7e21 216px,#ff7b0b 220px,#ff7800 224px,#ff7400 228px,#ff7100 232px,#ff6e00 236px,#ff6b00 240px,#ff6800 244px,#ff6600 248px,#ff6300 252px,#ff6000 256px,#ff5d00 260px,#ff5a00 264px,#ff5800 268px,#ff5500 272px,#ff5200 276px,#ff4f00 280px,#ff4d00 284px,#ff4a00 288px,#ff4700 292px,#ff4400 296px,#ff4200 300px,#ff3f00 304px,#ff3c00 308px,#ff3900 312px,#ff3600 316px)"></i><i style="top:186px;height:2px;background:linear-gradient(90deg,#00f8ff 0px,#00f9ff 4px,#00f9ff 8px,#00faff 12px,#00fbff 16px,#00fcff 20px,#00fdff 24px,#00feff 28px,#00ffff 32px,#00fffe 36px,#00fffd 40px,#00fffc 44px,#00fffb 48px,#00fffa 52px,#00fff9 56px,#00fff8 60px,#00fff7 64px,#00fff5 68px,#00fff4 72px,#00fff3 76px,#1cfff1 80px,#50fff0 84px,#6cffee 88px,#82ffed 92px,#95ffeb 96px,#a6ffe9 100px,#b5ffe8 104px,#c3ffe6 108px,#d1ffe4 112px,#deffe2 116px,#ebffe0 120px,#f7ffdd 124px,#fffbd8 128px,#fff0cc 132px,#ffe6c1 136px,#ffddb7 140px,#ffd5ae 144px,#ffcda5 148px,#ffc69d 152px,#ffc095 156px,#ffba8e 160px,#ffb487 164px,#ffae80 168px,#ffa979 172px,#ffa472 176px,#ff9f6c 180px,#ff9b65 184px,#ff975e 188px,#ff9258 192px,#ff8e51 196px,#ff8b4a 200px,#ff8743 204px,#ff833b 208px,#ff8032 212px,#ff7c28 216px,#ff7919 220px,#ff7600 224px,#ff7200 228px,#ff6f00 232px,#ff6c00 236px,#ff6900 240px,#ff6600 244px,#ff6300 248px,#ff6100 252px,#ff5e00 256px,#ff5b00 260px,#ff5800 264px,#ff5500 268px,#ff5300 272px,#ff5000 276px,#ff4d00 280px,#ff4a00 284px,#ff4700 288px,#ff4500 292px,#ff4200 296px,#ff3f00 300px,#ff3c00 304px,#ff3900 308px,#ff3600 312px,#ff3300 316px)"></i><i style="top:188px;height:2px;background:linear-gradient(90deg,#00f6ff 0px,#00f6ff 4px,#00f7ff 8px,#00f8ff 12px,#00f8ff 16px,#00f9ff 20px,#00faff 24px,#00fbff 28px,#00fcff 32px,#00fdff 36px,#00feff 40px,#00ffff 44px,#00fffe 48px,#00fffd 52px,#00fffc 56px,#00fffb 60px,#00fffa 64px,#00fff9 68px,#00fff7 72px,#00fff6 76px,#23fff5 80px,#53fff3 84px,#6ffff2 88px,#85fff0 92px,#97ffef 96px,#a8ffed 100px,#b8ffeb 104px,#c6ffe9 108px,#d4ffe8 112px,#e1ffe6 116px,#eeffe4 120px,#faffe1 124px,#fff8d9 128px,#ffedcd 132px,#ffe4c3 136px,#ffdbb9 140px,#ffd2b0 144px,#ffcba7 148px,#ffc49f 152px,#ffbd97 156px,#ffb790 160px,#ffb189 164px,#ffac82 168px,#ffa77b 172px,#ffa274 176px,#ff9d6e 180px,#ff9967 184px,#ff9461 188px,#ff905a 192px,#ff8c54 196px,#ff884d 200px,#ff8546 204px,#ff813f 208px,#ff7e36 212px,#ff7a2d 216px,#ff7721 220px,#ff740c 224px,#ff7000 228px,#ff6d00 232px,#ff6a00 236px,#ff6700 240px,#ff6400 244px,#ff6100 248px,#ff5e00 252px,#ff5c00 256px,#ff5900 260px,#ff5600 264px,#ff5300 268px,#ff5000 272px,#ff4d00 276px,#ff4b00 280px,#ff4800 284px,#ff4500 288px,#ff4200 292px,#ff3f00 296px,#ff3c00 300px,#ff3900 304px,#ff3600 308px,#ff3300 312px,#ff2f00 316px)"></i><i style="top:190px;height:2px;background:linear-gradient(90deg,#00f3ff 0px,#00f4ff 4px,#00f4ff 8px,#00f5ff 12px,#00f6ff 16px,#00f6ff 20px,#00f7ff 24px,#00f8ff 28px,#00f9ff 32px,#00faff 36px,#00fbff 40px,#00fcff 44px,#00fdff 48px,#00feff 52px,#00ffff 56px,#00fffe 60px,#00fffd 64px,#00fffc 68px,#00fffb 72px,#00fff9 76px,#2afff8 80px,#57fff7 84px,#72fff5 88px,#87fff4 92px,#9afff2 96px,#abfff1 100px,#baffef 104px,#c9ffed 108px,#d7ffec 112px,#e4ffea 116px,#f1ffe8 120px,#fdffe6 124px,#fff5db 128px,#ffeacf 132px,#ffe1c4 136px,#ffd8ba 140px,#ffd0b1 144px,#ffc8a9 148px,#ffc1a1 152px,#ffbb99 156px,#ffb591 160px,#ffaf8a 164px,#ffaa83 168px,#ffa57d 172px,#ffa076 176px,#ff9b70 180px,#ff9769 184px,#ff9263 188px,#ff8e5d 192px,#ff8a56 196px,#ff8650 200px,#ff8349 204px,#ff7f42 208px,#ff7c3a 212px,#ff7832 216px,#ff7527 220px,#ff7219 224px,#ff6e00 228px,#ff6b00 232px,#ff6800 236px,#ff6500 240px,#ff6200 244px,#ff5f00 248px,#ff5c00 252px,#ff5900 256px,#ff5600 260px,#ff5400 264px,#ff5100 268px,#ff4e00 272px,#ff4b00 276px,#ff4800 280px,#ff4500 284px,#ff4200 288px,#ff3f00 292px,#ff3c00 296px,#ff3900 300px,#ff3600 304px,#ff3300 308px,#ff2f00 312px,#ff2c00 316px)"></i><i style="top:192px;height:2px;background:linear-gradient(90deg,#00f1ff 0px,#00f1ff 4px,#00f2ff 8px,#00f2ff 12px,#00f3ff 16px,#00f4ff 20px,#00f5ff 24px,#00f5ff 28px,#00f6ff 32px,#00f7ff 36px,#00f8ff 40px,#00f9ff 44px,#00faff 48px,#00faff 52px,#00fbff 56px,#00fdff 60px,#00feff 64px,#00ffff 68px,#00fffe 72px,#00fffd 76px,#2ffffc 80px,#5afffa 84px,#74fff9 88px,#8afff8 92px,#9cfff6 96px,#adfff5 100px,#bdfff3 104px,#cbfff1 108px,#d9fff0 112px,#e7ffee 116px,#f4ffec 120px,#fffee9 124px,#fff2dc 128px,#ffe7d0 132px,#ffdec6 136px,#ffd5bc 140px,#ffcdb3 144px,#ffc6aa 148px,#ffbfa2 152px,#ffb99b 156px,#ffb393 160px,#ffad8c 164px,#ffa785 168px,#ffa27f 172px,#ff9e78 176px,#ff9972 180px,#ff946c 184px,#ff9065 188px,#ff8c5f 192px,#ff8859 196px,#ff8452 200px,#ff814c 204px,#ff7d45 208px,#ff793e 212px,#ff7636 216px,#ff732c 220px,#ff6f21 224px,#ff6c0d 228px,#ff6900 232px,#ff6600 236px,#ff6300 240px,#ff6000 244px,#ff5d00 248px,#ff5a00 252px,#ff5700 256px,#ff5400 260px,#ff5100 264px,#ff4e00 268px,#ff4b00 272px,#ff4900 276px,#ff4600 280px,#ff4300 284px,#ff4000 288px,#ff3d00 292px,#ff3900 296px,#ff3600 300px,#ff3300 304px,#ff2f00 308px,#ff2b00 312px,#ff2700 316px)"></i><i style="top:194px;height:2px;background:linear-gradient(90deg,#00eeff 0px,#00efff 4px,#00efff 8px,#00f0ff 12px,#00f1ff 16px,#00f1ff 20px,#00f2ff 24px,#00f3ff 28px,#00f3ff 32px,#00f4ff 36px,#00f5ff 40px,#00f6ff 44px,#00f7ff 48px,#00f7ff 52px,#00f8ff 56px,#00f9ff 60px,#00faff 64px,#00fbff 68px,#00fcff 72px,#00feff 76px,#34ffff 80px,#5dfffe 84px,#77fffd 88px,#8cfffb 92px,#9ffffa 96px,#b0fff9 100px,#c0fff7 104px,#cefff5 108px,#dcfff4 112px,#eafff2 116px,#f7fff0 120px,#fffaea 124px,#ffefdd 128px,#ffe5d2 132px,#ffdbc7 136px,#ffd3be 140px,#ffcbb4 144px,#ffc3ac 148px,#ffbda4 152px,#ffb69c 156px,#ffb095 160px,#ffab8e 164px,#ffa587 168px,#ffa081 172px,#ff9b7a 176px,#ff9774 180px,#ff926e 184px,#ff8e68 188px,#ff8a61 192px,#ff865b 196px,#ff8255 200px,#ff7e4f 204px,#ff7b48 208px,#ff7741 212px,#ff7439 216px,#ff7131 220px,#ff6d27 224px,#ff6a19 228px,#ff6700 232px,#ff6400 236px,#ff6100 240px,#ff5e00 244px,#ff5b00 248px,#ff5800 252px,#ff5500 256px,#ff5200 260px,#ff4f00 264px,#ff4c00 268px,#ff4900 272px,#ff4600 276px,#ff4300 280px,#ff4000 284px,#ff3d00 288px,#ff3a00 292px,#ff3600 296px,#ff3300 300px,#ff2f00 304px,#ff2b00 308px,#ff2700 312px,#ff2300 316px)"></i><i style="top:196px;height:2px;background:linear-gradient(90deg,#00ecff 0px,#00ecff 4px,#00edff 8px,#00edff 12px,#00eeff 16px,#00efff 20px,#00efff 24px,#00f0ff 28px,#00f1ff 32px,#00f1ff 36px,#00f2ff 40px,#00f3ff 44px,#00f4ff 48px,#00f4ff 52px,#00f5ff 56px,#00f6ff 60px,#00f7ff 64px,#00f8ff 68px,#00f9ff 72px,#00faff 76px,#38fbff 80px,#5ffcff 84px,#79feff 88px,#8fffff 92px,#a2fffe 96px,#b3fffc 100px,#c2fffb 104px,#d1fffa 108px,#dffff8 112px,#edfff6 116px,#fafff5 120px,#fff7eb 124px,#ffecdf 128px,#ffe2d3 132px,#ffd8c9 136px,#ffd0bf 140px,#ffc8b6 144px,#ffc1ae 148px,#ffbaa6 152px,#ffb49e 156px,#ffae97 160px,#ffa890 164px,#ffa389 168px,#ff9e82 172px,#ff997c 176px,#ff9476 180px,#ff9070 184px,#ff8c6a 188px,#ff8864 192px,#ff845e 196px,#ff8057 200px,#ff7c51 204px,#ff794b 208px,#ff7544 212px,#ff723d 216px,#ff6e35 220px,#ff6b2c 224px,#ff6821 228px,#ff650d 232px,#ff6200 236px,#ff5e00 240px,#ff5b00 244px,#ff5800 248px,#ff5500 252px,#ff5200 256px,#ff4f00 260px,#ff4c00 264px,#ff4900 268px,#ff4600 272px,#ff4300 276px,#ff4000 280px,#ff3d00 284px,#ff3a00 288px,#ff3600 292px,#ff3300 296px,#ff2f00 300px,#ff2b00 304px,#ff2700 308px,#ff2200 312px,#ff1d00 316px)"></i><i style="top:198px;height:2px;background:linear-gradient(90deg,#00e9ff 0px,#00eaff 4px,#00eaff 8px,#00ebff 12px,#00ebff 16px,#00ecff 20px,#00edff 24px,#00edff 28px,#00eeff 32px,#00eeff 36px,#00efff 40px,#00f0ff 44px,#00f1ff 48px,#00f1ff 52px,#00f2ff 56px,#00f3ff 60px,#00f4ff 64px,#00f5ff 68px,#00f6ff 72px,#00f7ff 76px,#3cf8ff 80px,#60f9ff 84px,#7afaff 88px,#8ffbff 92px,#a3fcff 96px,#b4fdff 100px,#c5ffff 104px,#d4fffe 108px,#e2fffc 112px,#f0fffb 116px,#fdfff9 120px,#fff4ed 124px,#ffe9e0 128px,#ffdfd5 132px,#ffd6ca 136px,#ffcdc1 140px,#ffc5b8 144px,#ffbeaf 148px,#ffb8a7 152px,#ffb1a0 156px,#ffab98 160px,#ffa691 164px,#ffa18b 168px,#ff9c84 172px,#ff977e 176px,#ff9278 180px,#ff8e72 184px,#ff8a6c 188px,#ff8566 192px,#ff8260 196px,#ff7e5a 200px,#ff7a54 204px,#ff764d 208px,#ff7347 212px,#ff6f40 216px,#ff6c39 220px,#ff6930 224px,#ff6627 228px,#ff6219 232px,#ff5f00 236px,#ff5c00 240px,#ff5900 244px,#ff5600 248px,#ff5300 252px,#ff5000 256px,#ff4d00 260px,#ff4a00 264px,#ff4700 268px,#ff4400 272px,#ff4000 276px,#ff3d00 280px,#ff3a00 284px,#ff3600 288px,#ff3300 292px,#ff2f00 296px,#ff2b00 300px,#ff2700 304px,#ff2200 308px,#ff1d00 312px,#ff1600 316px)"></i><i style="top:200px;height:2px;background:linear-gradient(90deg,#00e7ff 0px,#00e7ff 4px,#00e8ff 8px,#00e8ff 12px,#00e9ff 16px,#00e9ff 20px,#00eaff 24px,#00eaff 28px,#00ebff 32px,#00ecff 36px,#00ecff 40px,#00edff 44px,#00eeff 48px,#00eeff 52px,#00efff 56px,#00f0ff 60px,#00f1ff 64px,#00f1ff 68px,#00f2ff 72px,#00f3ff 76px,#3ff4ff 80px,#62f5ff 84px,#7bf6ff 88px,#90f7ff 92px,#a3f8ff 96px,#b4f9ff 100px,#c5fbff 104px,#d5fcff 108px,#e4fdff 112px,#f3ffff 116px,#fffdfc 120px,#fff1ee 124px,#ffe6e1 128px,#ffdcd6 132px,#ffd3cc 136px,#ffcac2 140px,#ffc3b9 144px,#ffbcb1 148px,#ffb5a9 152px,#ffafa1 156px,#ffa99a 160px,#ffa393 164px,#ff9e8c 168px,#ff9986 172px,#ff9480 176px,#ff907a 180px,#ff8b74 184px,#ff876e 188px,#ff8368 192px,#ff7f62 196px,#ff7b5c 200px,#ff7856 204px,#ff7450 208px,#ff714a 212px,#ff6d43 216px,#ff6a3c 220px,#ff6634 224px,#ff632c 228px,#ff6021 232px,#ff5d0e 236px,#ff5a00 240px,#ff5700 244px,#ff5300 248px,#ff5000 252px,#ff4d00 256px,#ff4a00 260px,#ff4700 264px,#ff4400 268px,#ff4100 272px,#ff3d00 276px,#ff3a00 280px,#ff3700 284px,#ff3300 288px,#ff2f00 292px,#ff2b00 296px,#ff2700 300px,#ff2200 304px,#ff1c00 308px,#ff1500 312px,#ff0800 316px)"></i><i style="top:202px;height:2px;background:linear-gradient(90deg,#00e5ff 0px,#00e5ff 4px,#00e5ff 8px,#00e6ff 12px,#00e6ff 16px,#00e7ff 20px,#00e7ff 24px,#00e8ff 28px,#00e8ff 32px,#00e9ff 36px,#00e9ff 40px,#00eaff 44px,#00ebff 48px,#00ebff 52px,#00ecff 56px,#00edff 60px,#00edff 64px,#00eeff 68px,#00efff 72px,#00f0ff 76px,#42f1ff 80px,#63f1ff 84px,#7cf2ff 88px,#90f3ff 92px,#a3f4ff 96px,#b4f5ff 100px,#c4f7ff 104px,#d4f8ff 108px,#e3f9ff 112px,#f2faff 116px,#fffafd 120px,#ffeeef 124px,#ffe3e3 128px,#ffd9d7 132px,#ffd0cd 136px,#ffc8c3 140px,#ffc0ba 144px,#ffb9b2 148px,#ffb2aa 152px,#ffaca3 156px,#ffa69c 160px,#ffa195 164px,#ff9c8e 168px,#ff9788 172px,#ff9281 176px,#ff8e7b 180px,#ff8975 184px,#ff8570 188px,#ff816a 192px,#ff7d64 196px,#ff795e 200px,#ff7558 204px,#ff7252 208px,#ff6e4c 212px,#ff6b46 216px,#ff673f 220px,#ff6438 224px,#ff6130 228px,#ff5e26 232px,#ff5a19 236px,#ff5700 240px,#ff5400 244px,#ff5100 248px,#ff4e00 252px,#ff4b00 256px,#ff4700 260px,#ff4400 264px,#ff4100 268px,#ff3e00 272px,#ff3a00 276px,#ff3700 280px,#ff3300 284px,#ff2f00 288px,#ff2b00 292px,#ff2700 296px,#ff2200 300px,#ff1c00 304px,#ff1400 308px,#ff0400 312px,#ff0000 316px)"></i><i style="top:204px;height:2px;background:linear-gradient(90deg,#00e2ff 0px,#00e3ff 4px,#00e3ff 8px,#00e3ff 12px,#00e4ff 16px,#00e4ff 20px,#00e5ff 24px,#00e5ff 28px,#00e6ff 32px,#00e6ff 36px,#00e7ff 40px,#00e7ff 44px,#00e8ff 48px,#00e8ff 52px,#00e9ff 56px,#00eaff 60px,#00eaff 64px,#00ebff 68px,#00ecff 72px,#00ecff 76px,#44edff 80px,#64eeff 84px,#7cefff 88px,#91f0ff 92px,#a3f1ff 96px,#b4f1ff 100px,#c4f3ff 104px,#d3f4ff 108px,#e2f5ff 112px,#f1f6ff 116px,#fff6fe 120px,#ffeaf0 124px,#ffe0e4 128px,#ffd6d9 132px,#ffcdce 136px,#ffc5c5 140px,#ffbdbc 144px,#ffb6b4 148px,#ffb0ac 152px,#ffaaa4 156px,#ffa49d 160px,#ff9f96 164px,#ff9990 168px,#ff9489 172px,#ff9083 176px,#ff8b7d 180px,#ff8777 184px,#ff8371 188px,#ff7f6c 192px,#ff7b66 196px,#ff7760 200px,#ff735b 204px,#ff6f55 208px,#ff6c4f 212px,#ff6849 216px,#ff6542 220px,#ff623b 224px,#ff5e34 228px,#ff5b2b 232px,#ff5820 236px,#ff550e 240px,#ff5100 244px,#ff4e00 248px,#ff4b00 252px,#ff4800 256px,#ff4500 260px,#ff4100 264px,#ff3e00 268px,#ff3a00 272px,#ff3700 276px,#ff3300 280px,#ff2f00 284px,#ff2b00 288px,#ff2600 292px,#ff2100 296px,#ff1b00 300px,#ff1300 304px,#ff0000 308px,#ff0000 312px,#ff0000 316px)"></i><i style="top:206px;height:2px;background:linear-gradient(90deg,#00e0ff 0px,#00e0ff 4px,#00e1ff 8px,#00e1ff 12px,#00e1ff 16px,#00e2ff 20px,#00e2ff 24px,#00e3ff 28px,#00e3ff 32px,#00e3ff 36px,#00e4ff 40px,#00e4ff 44px,#00e5ff 48px,#00e5ff 52px,#00e6ff 56px,#00e6ff 60px,#00e7ff 64px,#00e8ff 68px,#00e8ff 72px,#00e9ff 76px,#47eaff 80px,#66eaff 84px,#7debff 88px,#91ecff 92px,#a3edff 96px,#b4eeff 100px,#c4efff 104px,#d3efff 108px,#e2f1ff 112px,#f0f2ff 116px,#fff3ff 120px,#ffe7f2 124px,#ffdce5 128px,#ffd3da 132px,#ffcad0 136px,#ffc2c6 140px,#ffbbbd 144px,#ffb4b5 148px,#ffadad 152px,#ffa7a6 156px,#ffa19f 160px,#ff9c98 164px,#ff9791 168px,#ff928b 172px,#ff8d85 176px,#ff897f 180px,#ff8479 184px,#ff8073 188px,#ff7c6e 192px,#ff7868 196px,#ff7462 200px,#ff715d 204px,#ff6d57 208px,#ff6a51 212px,#ff664b 216px,#ff6345 220px,#ff5f3e 224px,#ff5c37 228px,#ff592f 232px,#ff5526 236px,#ff5219 240px,#ff4f00 244px,#ff4b00 248px,#ff4800 252px,#ff4500 256px,#ff4200 260px,#ff3e00 264px,#ff3b00 268px,#ff3700 272px,#ff3300 276px,#ff2f00 280px,#ff2b00 284px,#ff2600 288px,#ff2100 292px,#ff1b00 296px,#ff1300 300px,#ff0000 304px,#ff0000 308px,#ff0000 312px,#ff0000 316px)"></i><i style="top:208px;height:2px;background:linear-gradient(90deg,#00deff 0px,#00deff 4px,#00deff 8px,#00deff 12px,#00dfff 16px,#00dfff 20px,#00e0ff 24px,#00e0ff 28px,#00e0ff 32px,#00e1ff 36px,#00e1ff 40px,#00e1ff 44px,#00e2ff 48px,#00e2ff 52px,#00e3ff 56px,#00e3ff 60px,#00e4ff 64px,#00e4ff 68px,#00e5ff 72px,#00e6ff 76px,#49e6ff 80px,#67e7ff 84px,#7ee7ff 88px,#91e8ff 92px,#a3e9ff 96px,#b4eaff 100px,#c3ebff 104px,#d2ebff 108px,#e1ecff 112px,#efedff 116px,#feeeff 120px,#ffe4f3 124px,#ffd9e6 128px,#ffd0db 132px,#ffc7d1 136px,#ffbfc8 140px,#ffb8bf 144px,#ffb1b6 148px,#ffabaf 152px,#ffa5a7 156px,#ff9fa0 160px,#ff9a99 164px,#ff9493 168px,#ff908d 172px,#ff8b86 176px,#ff8681 180px,#ff827b 184px,#ff7e75 188px,#ff7a6f 192px,#ff766a 196px,#ff7264 200px,#ff6e5f 204px,#ff6b59 208px,#ff6754 212px,#ff644e 216px,#ff6048 220px,#ff5d41 224px,#ff593b 228px,#ff5633 232px,#ff532b 236px,#ff4f20 240px,#ff4c0f 244px,#ff4900 248px,#ff4500 252px,#ff4200 256px,#ff3e00 260px,#ff3b00 264px,#ff3700 268px,#ff3300 272px,#ff2f00 276px,#ff2b00 280px,#ff2600 284px,#ff2100 288px,#ff1a00 292px,#ff1200 296px,#ff0000 300px,#ff0000 304px,#ff0000 308px,#ff0000 312px,#ff0000 316px)"></i><i style="top:210px;height:2px;background:linear-gradient(90deg,#00dbff 0px,#00dbff 4px,#00dcff 8px,#00dcff 12px,#00dcff 16px,#00ddff 20px,#00ddff 24px,#00ddff 28px,#00deff 32px,#00deff 36px,#00deff 40px,#00dfff 44px,#00dfff 48px,#00dfff 52px,#00e0ff 56px,#00e0ff 60px,#00e1ff 64px,#00e1ff 68px,#00e2ff 72px,#0be2ff 76px,#4be3ff 80px,#68e3ff 84px,#7fe4ff 88px,#92e5ff 92px,#a3e5ff 96px,#b4e6ff 100px,#c3e7ff 104px,#d2e7ff 108px,#e0e8ff 112px,#efe9ff 116px,#fdeaff 120px,#ffe1f4 124px,#ffd6e8 128px,#ffcddd 132px,#ffc4d2 136px,#ffbcc9 140px,#ffb5c0 144px,#ffaeb8 148px,#ffa8b0 152px,#ffa2a9 156px,#ff9ca2 160px,#ff979b 164px,#ff9294 168px,#ff8d8e 172px,#ff8888 176px,#ff8482 180px,#ff807c 184px,#ff7b77 188px,#ff7771 192px,#ff736c 196px,#ff7066 200px,#ff6c61 204px,#ff685b 208px,#ff6556 212px,#ff6150 216px,#ff5e4a 220px,#ff5a44 224px,#ff573e 228px,#ff5337 232px,#ff502f 236px,#ff4c26 240px,#ff4919 244px,#ff4600 248px,#ff4200 252px,#ff3f00 256px,#ff3b00 260px,#ff3700 264px,#ff3300 268px,#ff2f00 272px,#ff2b00 276px,#ff2600 280px,#ff2000 284px,#ff1a00 288px,#ff1000 292px,#ff0000 296px,#ff0000 300px,#ff0000 304px,#ff0000 308px,#ff0000 312px,#ff0000 316px)"></i><i style="top:212px;height:2px;background:linear-gradient(90deg,#00d9ff 0px,#00d9ff 4px,#00d9ff 8px,#00daff 12px,#00daff 16px,#00daff 20px,#00daff 24px,#00dbff 28px,#00dbff 32px,#00dbff 36px,#00dcff 40px,#00dcff 44px,#00dcff 48px,#00ddff 52px,#00ddff 56px,#00ddff 60px,#00deff 64px,#00deff 68px,#00deff 72px,#19dfff 76px,#4edfff 80px,#69e0ff 84px,#7fe0ff 88px,#92e1ff 92px,#a3e1ff 96px,#b3e2ff 100px,#c3e3ff 104px,#d1e3ff 108px,#e0e4ff 112px,#eee5ff 116px,#fce5ff 120px,#ffddf5 124px,#ffd3e9 128px,#ffcade 132px,#ffc1d4 136px,#ffbaca 140px,#ffb2c1 144px,#ffacb9 148px,#ffa5b1 152px,#ff9faa 156px,#ff9aa3 160px,#ff949c 164px,#ff8f96 168px,#ff8a90 172px,#ff868a 176px,#ff8184 180px,#ff7d7e 184px,#ff7979 188px,#ff7573 192px,#ff716e 196px,#ff6d68 200px,#ff6963 204px,#ff665d 208px,#ff6258 212px,#ff5e52 216px,#ff5b4d 220px,#ff5747 224px,#ff5441 228px,#ff503a 232px,#ff4d33 236px,#ff4a2a 240px,#ff4620 244px,#ff420f 248px,#ff3f00 252px,#ff3b00 256px,#ff3700 260px,#ff3300 264px,#ff2f00 268px,#ff2b00 272px,#ff2600 276px,#ff2000 280px,#ff1900 284px,#ff0f00 288px,#ff0000 292px,#ff0000 296px,#ff0000 300px,#ff0000 304px,#ff0000 308px,#ff0000 312px,#ff0000 316px)"></i><i style="top:214px;height:2px;background:linear-gradient(90deg,#00d7ff 0px,#00d7ff 4px,#00d7ff 8px,#00d7ff 12px,#00d7ff 16px,#00d8ff 20px,#00d8ff 24px,#00d8ff 28px,#00d8ff 32px,#00d9ff 36px,#00d9ff 40px,#00d9ff 44px,#00d9ff 48px,#00daff 52px,#00daff 56px,#00daff 60px,#00dbff 64px,#00dbff 68px,#00dbff 72px,#20dcff 76px,#50dcff 80px,#6adcff 84px,#80ddff 88px,#93ddff 92px,#a4deff 96px,#b3deff 100px,#c2dfff 104px,#d1dfff 108px,#dfe0ff 112px,#ede0ff 116px,#fbe1ff 120px,#ffdaf6 124px,#ffd0ea 128px,#ffc7df 132px,#ffbed5 136px,#ffb7cb 140px,#ffafc3 144px,#ffa9ba 148px,#ffa3b3 152px,#ff9dab 156px,#ff97a4 160px,#ff929e 164px,#ff8d97 168px,#ff8891 172px,#ff838b 176px,#ff7f85 180px,#ff7a80 184px,#ff767a 188px,#ff7275 192px,#ff6e6f 196px,#ff6a6a 200px,#ff6765 204px,#ff635f 208px,#ff5f5a 212px,#ff5c55 216px,#ff584f 220px,#ff5549 224px,#ff5143 228px,#ff4e3d 232px,#ff4a36 236px,#ff462e 240px,#ff4325 244px,#ff3f19 248px,#ff3b00 252px,#ff3700 256px,#ff3300 260px,#ff2f00 264px,#ff2b00 268px,#ff2500 272px,#ff2000 276px,#ff1900 280px,#ff0e00 284px,#ff0000 288px,#ff0000 292px,#ff0000 296px,#ff0000 300px,#ff0000 304px,#ff0000 308px,#ff0000 312px,#ff0000 316px)"></i><i style="top:216px;height:2px;background:linear-gradient(90deg,#00d4ff 0px,#00d4ff 4px,#00d5ff 8px,#00d5ff 12px,#00d5ff 16px,#00d5ff 20px,#00d5ff 24px,#00d5ff 28px,#00d6ff 32px,#00d6ff 36px,#00d6ff 40px,#00d6ff 44px,#00d7ff 48px,#00d7ff 52px,#00d7ff 56px,#00d7ff 60px,#00d8ff 64px,#00d8ff 68px,#00d8ff 72px,#26d8ff 76px,#51d9ff 80px,#6cd9ff 84px,#81d9ff 88px,#93daff 92px,#a4daff 96px,#b3daff 100px,#c2dbff 104px,#d0dbff 108px,#dedcff 112px,#ecdcff 116px,#faddff 120px,#ffd7f7 124px,#ffcdeb 128px,#ffc4e0 132px,#ffbbd6 136px,#ffb4cd 140px,#ffadc4 144px,#ffa6bc 148px,#ffa0b4 152px,#ff9aad 156px,#ff94a6 160px,#ff8f9f 164px,#ff8a99 168px,#ff8593 172px,#ff818d 176px,#ff7c87 180px,#ff7881 184px,#ff747c 188px,#ff7076 192px,#ff6c71 196px,#ff686c 200px,#ff6467 204px,#ff6061 208px,#ff5d5c 212px,#ff5957 216px,#ff5551 220px,#ff524c 224px,#ff4e46 228px,#ff4a40 232px,#ff4739 236px,#ff4332 240px,#ff3f2a 244px,#ff3c20 248px,#ff380f 252px,#ff3300 256px,#ff2f00 260px,#ff2a00 264px,#ff2500 268px,#ff1f00 272px,#ff1800 276px,#ff0c00 280px,#ff0000 284px,#ff0000 288px,#ff0000 292px,#ff0000 296px,#ff0000 300px,#ff0000 304px,#ff0000 308px,#ff0000 312px,#ff0000 316px)"></i><i style="top:218px;height:2px;background:linear-gradient(90deg,#00d2ff 0px,#00d2ff 4px,#00d2ff 8px,#00d2ff 12px,#00d2ff 16px,#00d3ff 20px,#00d3ff 24px,#00d3ff 28px,#00d3ff 32px,#00d3ff 36px,#00d3ff 40px,#00d4ff 44px,#00d4ff 48px,#00d4ff 52px,#00d4ff 56px,#00d4ff 60px,#00d4ff 64px,#00d5ff 68px,#00d5ff 72px,#2bd5ff 76px,#53d5ff 80px,#6dd6ff 84px,#81d6ff 88px,#93d6ff 92px,#a4d6ff 96px,#b3d7ff 100px,#c2d7ff 104px,#d0d7ff 108px,#ded8ff 112px,#ebd8ff 116px,#f9d9ff 120px,#ffd3f8 124px,#ffc9ec 128px,#ffc0e1 132px,#ffb8d7 136px,#ffb1ce 140px,#ffaac5 144px,#ffa3bd 148px,#ff9db5 152px,#ff97ae 156px,#ff92a7 160px,#ff8ca1 164px,#ff879a 168px,#ff8394 172px,#ff7e8e 176px,#ff7988 180px,#ff7583 184px,#ff717d 188px,#ff6d78 192px,#ff6973 196px,#ff656e 200px,#ff6168 204px,#ff5d63 208px,#ff5a5e 212px,#ff5659 216px,#ff5253 220px,#ff4f4e 224px,#ff4b48 228px,#ff4743 232px,#ff443c 236px,#ff4036 240px,#ff3c2e 244px,#ff3825 248px,#ff3419 252px,#ff2f00 256px,#ff2a00 260px,#ff2500 264px,#ff1f00 268px,#ff1700 272px,#ff0a00 276px,#ff0000 280px,#ff0000 284px,#ff0000 288px,#ff0000 292px,#ff0000 296px,#ff0000 300px,#ff0000 304px,#ff0000 308px,#ff0000 312px,#ff0000 316px)"></i><i style="top:220px;height:2px;background:linear-gradient(90deg,#00d0ff 0px,#00d0ff 4px,#00d0ff 8px,#00d0ff 12px,#00d0ff 16px,#00d0ff 20px,#00d0ff 24px,#00d0ff 28px,#00d0ff 32px,#00d1ff 36px,#00d1ff 40px,#00d1ff 44px,#00d1ff 48px,#00d1ff 52px,#00d1ff 56px,#00d1ff 60px,#00d1ff 64px,#00d2ff 68px,#00d2ff 72px,#2fd2ff 76px,#55d2ff 80px,#6ed2ff 84px,#82d2ff 88px,#94d3ff 92px,#a4d3ff 96px,#b3d3ff 100px,#c2d3ff 104px,#d0d3ff 108px,#ddd4ff 112px,#ead4ff 116px,#f8d4ff 120px,#ffd0f9 124px,#ffc6ed 128px,#ffbde2 132px,#ffb5d8 136px,#ffaecf 140px,#ffa7c6 144px,#ffa0be 148px,#ff9ab7 152px,#ff94af 156px,#ff8fa9 160px,#ff8aa2 164px,#ff859c 168px,#ff8096 172px,#ff7b90 176px,#ff778a 180px,#ff7284 184px,#ff6e7f 188px,#ff6a7a 192px,#ff6674 196px,#ff626f 200px,#ff5e6a 204px,#ff5b65 208px,#ff5760 212px,#ff535b 216px,#ff4f55 220px,#ff4c50 224px,#ff484b 228px,#ff4445 232px,#ff403f 236px,#ff3c39 240px,#ff3832 244px,#ff342a 248px,#ff2f20 252px,#ff2a10 256px,#ff2500 260px,#ff1e00 264px,#ff1600 268px,#ff0600 272px,#ff0000 276px,#ff0000 280px,#ff0000 284px,#ff0000 288px,#ff0000 292px,#ff0000 296px,#ff0000 300px,#ff0000 304px,#ff0000 308px,#ff0000 312px,#ff0000 316px)"></i><i style="top:222px;height:2px;background:linear-gradient(90deg,#00cdff 0px,#00cdff 4px,#00ceff 8px,#00ceff 12px,#00ceff 16px,#00ceff 20px,#00ceff 24px,#00ceff 28px,#00ceff 32px,#00ceff 36px,#00ceff 40px,#00ceff 44px,#00ceff 48px,#00ceff 52px,#00ceff 56px,#00ceff 60px,#00ceff 64px,#00ceff 68px,#00cfff 72px,#33cfff 76px,#56cfff 80px,#6fcfff 84px,#82cfff 88px,#94cfff 92px,#a4cfff 96px,#b3cfff 100px,#c1cfff 104px,#cfd0ff 108px,#ddd0ff 112px,#ead0ff 116px,#f7d0ff 120px,#ffccfa 124px,#ffc3ee 128px,#ffbae4 132px,#ffb2da 136px,#ffabd0 140px,#ffa4c8 144px,#ff9dc0 148px,#ff97b8 152px,#ff92b1 156px,#ff8caa 160px,#ff87a3 164px,#ff829d 168px,#ff7d97 172px,#ff7891 176px,#ff748b 180px,#ff7086 184px,#ff6b80 188px,#ff677b 192px,#ff6376 196px,#ff5f71 200px,#ff5b6c 204px,#ff5867 208px,#ff5462 212px,#ff505d 216px,#ff4c58 220px,#ff4852 224px,#ff444d 228px,#ff4047 232px,#ff3c42 236px,#ff383c 240px,#ff3435 244px,#ff2f2e 248px,#ff2a25 252px,#ff2419 256px,#ff1e00 260px,#ff1500 264px,#ff0000 268px,#ff0000 272px,#ff0000 276px,#ff0000 280px,#ff0000 284px,#ff0000 288px,#ff0000 292px,#ff0000 296px,#ff0000 300px,#ff0000 304px,#ff0000 308px,#ff0000 312px,#ff0000 316px)"></i><i style="top:224px;height:2px;background:linear-gradient(90deg,#00cbff 0px,#00cbff 4px,#00cbff 8px,#00cbff 12px,#00cbff 16px,#00cbff 20px,#00cbff 24px,#00cbff 28px,#00cbff 32px,#00cbff 36px,#00cbff 40px,#00cbff 44px,#00cbff 48px,#00cbff 52px,#00cbff 56px,#00cbff 60px,#00cbff 64px,#00cbff 68px,#00cbff 72px,#36cbff 76px,#58cbff 80px,#70ccff 84px,#83ccff 88px,#94ccff 92px,#a4ccff 96px,#b3ccff 100px,#c1ccff 104px,#cfccff 108px,#dcccff 112px,#e9ccff 116px,#f6ccff 120px,#ffc9fb 124px,#ffbfef 128px,#ffb7e5 132px,#ffafdb 136px,#ffa8d1 140px,#ffa1c9 144px,#ff9ac1 148px,#ff94b9 152px,#ff8fb2 156px,#ff89ab 160px,#ff84a5 164px,#ff7f9e 168px,#ff7a98 172px,#ff7692 176px,#ff718d 180px,#ff6d87 184px,#ff6982 188px,#ff647d 192px,#ff6078 196px,#ff5c73 200px,#ff586d 204px,#ff5468 208px,#ff5164 212px,#ff4d5f 216px,#ff4959 220px,#ff4554 224px,#ff414f 228px,#ff3d4a 232px,#ff3844 236px,#ff343e 240px,#ff2f38 244px,#ff2a31 248px,#ff2429 252px,#ff1d20 256px,#ff1410 260px,#ff0000 264px,#ff0000 268px,#ff0000 272px,#ff0000 276px,#ff0000 280px,#ff0000 284px,#ff0000 288px,#ff0000 292px,#ff0000 296px,#ff0000 300px,#ff0000 304px,#ff0000 308px,#ff0000 312px,#ff0000 316px)"></i><i style="top:226px;height:2px;background:linear-gradient(90deg,#00c9ff 0px,#00c9ff 4px,#00c9ff 8px,#00c9ff 12px,#00c9ff 16px,#00c9ff 20px,#00c9ff 24px,#00c9ff 28px,#00c9ff 32px,#00c9ff 36px,#00c9ff 40px,#00c9ff 44px,#00c9ff 48px,#00c9ff 52px,#00c8ff 56px,#00c8ff 60px,#00c8ff 64px,#00c8ff 68px,#00c8ff 72px,#39c8ff 76px,#59c8ff 80px,#70c8ff 84px,#84c8ff 88px,#95c8ff 92px,#a4c8ff 96px,#b3c8ff 100px,#c1c8ff 104px,#cec8ff 108px,#dbc8ff 112px,#e8c8ff 116px,#f5c8ff 120px,#ffc5fc 124px,#ffbcf1 128px,#ffb4e6 132px,#ffacdc 136px,#ffa5d3 140px,#ff9eca 144px,#ff97c2 148px,#ff91ba 152px,#ff8cb3 156px,#ff86ac 160px,#ff81a6 164px,#ff7ca0 168px,#ff779a 172px,#ff7394 176px,#ff6e8e 180px,#ff6a89 184px,#ff6683 188px,#ff617e 192px,#ff5d79 196px,#ff5974 200px,#ff556f 204px,#ff516a 208px,#ff4d65 212px,#ff4960 216px,#ff455b 220px,#ff4156 224px,#ff3d51 228px,#ff384c 232px,#ff3447 236px,#ff2f41 240px,#ff2a3b 244px,#ff2435 248px,#ff1d2d 252px,#ff1325 256px,#ff0019 260px,#ff0000 264px,#ff0000 268px,#ff0000 272px,#ff0000 276px,#ff0000 280px,#ff0000 284px,#ff0000 288px,#ff0000 292px,#ff0000 296px,#ff0000 300px,#ff0000 304px,#ff0000 308px,#ff0000 312px,#ff0000 316px)"></i><i style="top:228px;height:2px;background:linear-gradient(90deg,#00c7ff 0px,#00c7ff 4px,#00c6ff 8px,#00c6ff 12px,#00c6ff 16px,#00c6ff 20px,#00c6ff 24px,#00c6ff 28px,#00c6ff 32px,#00c6ff 36px,#00c6ff 40px,#00c6ff 44px,#00c6ff 48px,#00c6ff 52px,#00c6ff 56px,#00c5ff 60px,#00c5ff 64px,#00c5ff 68px,#00c5ff 72px,#3cc5ff 76px,#5bc5ff 80px,#71c5ff 84px,#84c5ff 88px,#95c5ff 92px,#a4c4ff 96px,#b3c4ff 100px,#c0c4ff 104px,#cec4ff 108px,#dbc4ff 112px,#e8c4ff 116px,#f4c3ff 120px,#ffc2fd 124px,#ffb9f2 128px,#ffb0e7 132px,#ffa9dd 136px,#ffa1d4 140px,#ff9bcb 144px,#ff94c3 148px,#ff8ebc 152px,#ff89b5 156px,#ff83ae 160px,#ff7ea7 164px,#ff79a1 168px,#ff749b 172px,#ff7095 176px,#ff6b90 180px,#ff678a 184px,#ff6385 188px,#ff5e80 192px,#ff5a7b 196px,#ff5676 200px,#ff5271 204px,#ff4e6c 208px,#ff4a67 212px,#ff4662 216px,#ff415d 220px,#ff3d58 224px,#ff3953 228px,#ff344e 232px,#ff2f49 236px,#ff2a43 240px,#ff243e 244px,#ff1c38 248px,#ff1231 252px,#ff0029 256px,#ff001f 260px,#ff0010 264px,#ff0000 268px,#ff0000 272px,#ff0000 276px,#ff0000 280px,#ff0000 284px,#ff0000 288px,#ff0000 292px,#ff0000 296px,#ff0000 300px,#ff0000 304px,#ff0000 308px,#ff0000 312px,#ff0000 316px)"></i><i style="top:230px;height:2px;background:linear-gradient(90deg,#00c4ff 0px,#00c4ff 4px,#00c4ff 8px,#00c4ff 12px,#00c4ff 16px,#00c4ff 20px,#00c4ff 24px,#00c4ff 28px,#00c4ff 32px,#00c3ff 36px,#00c3ff 40px,#00c3ff 44px,#00c3ff 48px,#00c3ff 52px,#00c3ff 56px,#00c3ff 60px,#00c2ff 64px,#00c2ff 68px,#00c2ff 72px,#3fc2ff 76px,#5cc2ff 80px,#72c2ff 84px,#85c1ff 88px,#95c1ff 92px,#a4c1ff 96px,#b3c1ff 100px,#c0c0ff 104px,#cdc0ff 108px,#dac0ff 112px,#e7c0ff 116px,#f3bfff 120px,#ffbefe 124px,#ffb5f3 128px,#ffade8 132px,#ffa5de 136px,#ff9ed5 140px,#ff98cc 144px,#ff91c4 148px,#ff8bbd 152px,#ff86b6 156px,#ff80af 160px,#ff7ba8 164px,#ff76a2 168px,#ff719c 172px,#ff6d97 176px,#ff6891 180px,#ff648c 184px,#ff5f86 188px,#ff5b81 192px,#ff577c 196px,#ff5377 200px,#ff4f72 204px,#ff4a6d 208px,#ff4669 212px,#ff4264 216px,#ff3d5f 220px,#ff395a 224px,#ff3455 228px,#ff2f50 232px,#ff2a4b 236px,#ff2346 240px,#ff1c40 244px,#ff113a 248px,#ff0034 252px,#ff002d 256px,#ff0024 260px,#ff0019 264px,#ff0000 268px,#ff0000 272px,#ff0000 276px,#ff0000 280px,#ff0000 284px,#ff0000 288px,#ff0000 292px,#ff0000 296px,#ff0000 300px,#ff0000 304px,#ff0000 308px,#ff0000 312px,#ff0000 316px)"></i><i style="top:232px;height:2px;background:linear-gradient(90deg,#00c2ff 0px,#00c2ff 4px,#00c2ff 8px,#00c2ff 12px,#00c2ff 16px,#00c1ff 20px,#00c1ff 24px,#00c1ff 28px,#00c1ff 32px,#00c1ff 36px,#00c1ff 40px,#00c0ff 44px,#00c0ff 48px,#00c0ff 52px,#00c0ff 56px,#00c0ff 60px,#00bfff 64px,#00bfff 68px,#00bfff 72px,#41bfff 76px,#5ebeff 80px,#73beff 84px,#85beff 88px,#95beff 92px,#a4bdff 96px,#b3bdff 100px,#c0bdff 104px,#cdbcff 108px,#dabcff 112px,#e6bcff 116px,#f3bbff 120px,#ffbbff 124px,#ffb2f4 128px,#ffaae9 132px,#ffa2df 136px,#ff9bd6 140px,#ff94ce 144px,#ff8ec6 148px,#ff88be 152px,#ff83b7 156px,#ff7db0 160px,#ff78aa 164px,#ff73a4 168px,#ff6e9e 172px,#ff6a98 176px,#ff6592 180px,#ff618d 184px,#ff5c88 188px,#ff5883 192px,#ff547e 196px,#ff4f79 200px,#ff4b74 204px,#ff476f 208px,#ff426a 212px,#ff3e66 216px,#ff3961 220px,#ff345c 224px,#ff2f57 228px,#ff2952 232px,#ff234d 236px,#ff1b48 240px,#ff0f43 244px,#ff003d 248px,#ff0037 252px,#ff0030 256px,#ff0029 260px,#ff001f 264px,#ff0011 268px,#ff0000 272px,#ff0000 276px,#ff0000 280px,#ff0000 284px,#ff0000 288px,#ff0000 292px,#ff0000 296px,#ff0000 300px,#ff0000 304px,#ff0000 308px,#ff0000 312px,#ff0000 316px)"></i><i style="top:234px;height:2px;background:linear-gradient(90deg,#00c0ff 0px,#00c0ff 4px,#00bfff 8px,#00bfff 12px,#00bfff 16px,#00bfff 20px,#00bfff 24px,#00bfff 28px,#00beff 32px,#00beff 36px,#00beff 40px,#00beff 44px,#00bdff 48px,#00bdff 52px,#00bdff 56px,#00bdff 60px,#00bcff 64px,#00bcff 68px,#00bcff 72px,#43bcff 76px,#5fbbff 80px,#74bbff 84px,#86bbff 88px,#96baff 92px,#a5baff 96px,#b2b9ff 100px,#c0b9ff 104px,#cdb8ff 108px,#d9b8ff 112px,#e6b7ff 116px,#f2b7ff 120px,#feb6ff 124px,#ffaef5 128px,#ffa6ea 132px,#ff9fe0 136px,#ff98d7 140px,#ff91cf 144px,#ff8bc7 148px,#ff85bf 152px,#ff7fb8 156px,#ff7ab1 160px,#ff75ab 164px,#ff70a5 168px,#ff6b9f 172px,#ff6699 176px,#ff6294 180px,#ff5d8e 184px,#ff5989 188px,#ff5484 192px,#ff507f 196px,#ff4c7a 200px,#ff4775 204px,#ff4371 208px,#ff3e6c 212px,#ff3967 216px,#ff3462 220px,#ff2f5e 224px,#ff2959 228px,#ff2354 232px,#ff1a4f 236px,#ff0e4a 240px,#ff0045 244px,#ff0040 248px,#ff003a 252px,#ff0034 256px,#ff002d 260px,#ff0024 264px,#ff0019 268px,#ff0000 272px,#ff0000 276px,#ff0000 280px,#ff0000 284px,#ff0000 288px,#ff0000 292px,#ff0000 296px,#ff0000 300px,#ff0000 304px,#ff0000 308px,#ff0000 312px,#ff0000 316px)"></i><i style="top:236px;height:2px;background:linear-gradient(90deg,#00beff 0px,#00bdff 4px,#00bdff 8px,#00bdff 12px,#00bdff 16px,#00bdff 20px,#00bcff 24px,#00bcff 28px,#00bcff 32px,#00bcff 36px,#00bbff 40px,#00bbff 44px,#00bbff 48px,#00baff 52px,#00baff 56px,#00baff 60px,#00b9ff 64px,#00b9ff 68px,#00b9ff 72px,#45b8ff 76px,#60b8ff 80px,#75b8ff 84px,#86b7ff 88px,#96b7ff 92px,#a5b6ff 96px,#b2b6ff 100px,#c0b5ff 104px,#ccb5ff 108px,#d9b4ff 112px,#e5b3ff 116px,#f1b3ff 120px,#fdb2ff 124px,#ffabf6 128px,#ffa3eb 132px,#ff9be1 136px,#ff94d8 140px,#ff8ed0 144px,#ff88c8 148px,#ff82c0 152px,#ff7cb9 156px,#ff77b3 160px,#ff72ac 164px,#ff6da6 168px,#ff68a0 172px,#ff639a 176px,#ff5e95 180px,#ff5a90 184px,#ff558a 188px,#ff5185 192px,#ff4c80 196px,#ff487c 200px,#ff4377 204px,#ff3e72 208px,#ff3a6d 212px,#ff3469 216px,#ff2f64 220px,#ff295f 224px,#ff225b 228px,#ff1a56 232px,#ff0b51 236px,#ff004c 240px,#ff0047 244px,#ff0042 248px,#ff003c 252px,#ff0036 256px,#ff0030 260px,#ff0028 264px,#ff001f 268px,#ff0011 272px,#ff0000 276px,#ff0000 280px,#ff0000 284px,#ff0000 288px,#ff0000 292px,#ff0000 296px,#ff0000 300px,#ff0000 304px,#ff0000 308px,#ff0000 312px,#ff0000 316px)"></i><i style="top:238px;height:2px;background:linear-gradient(90deg,#00bbff 0px,#00bbff 4px,#00bbff 8px,#00bbff 12px,#00baff 16px,#00baff 20px,#00baff 24px,#00baff 28px,#00b9ff 32px,#00b9ff 36px,#00b9ff 40px,#00b8ff 44px,#00b8ff 48px,#00b8ff 52px,#00b7ff 56px,#00b7ff 60px,#00b6ff 64px,#00b6ff 68px,#15b6ff 72px,#47b5ff 76px,#61b5ff 80px,#75b4ff 84px,#87b4ff 88px,#96b3ff 92px,#a5b3ff 96px,#b2b2ff 100px,#bfb1ff 104px,#ccb1ff 108px,#d8b0ff 112px,#e4afff 116px,#f0afff 120px,#fcaeff 124px,#ffa7f7 128px,#ff9fec 132px,#ff98e2 136px,#ff91d9 140px,#ff8ad1 144px,#ff84c9 148px,#ff7ec1 152px,#ff79ba 156px,#ff73b4 160px,#ff6ead 164px,#ff69a7 168px,#ff64a1 172px,#ff5f9c 176px,#ff5b96 180px,#ff5691 184px,#ff528c 188px,#ff4d87 192px,#ff4882 196px,#ff447d 200px,#ff3f78 204px,#ff3a74 208px,#ff356f 212px,#ff2f6a 216px,#ff2966 220px,#ff2261 224px,#ff195d 228px,#ff0858 232px,#ff0053 236px,#ff004e 240px,#ff0049 244px,#ff0044 248px,#ff003f 252px,#ff0039 256px,#ff0033 260px,#ff002c 264px,#ff0024 268px,#ff0019 272px,#ff0000 276px,#ff0000 280px,#ff0000 284px,#ff0000 288px,#ff0000 292px,#ff0000 296px,#ff0000 300px,#ff0000 304px,#ff0000 308px,#ff0000 312px,#ff0000 316px)"></i><i style="top:240px;height:2px;background:linear-gradient(90deg,#00b9ff 0px,#00b9ff 4px,#00b9ff 8px,#00b8ff 12px,#00b8ff 16px,#00b8ff 20px,#00b7ff 24px,#00b7ff 28px,#00b7ff 32px,#00b6ff 36px,#00b6ff 40px,#00b6ff 44px,#00b5ff 48px,#00b5ff 52px,#00b4ff 56px,#00b4ff 60px,#00b3ff 64px,#00b3ff 68px,#1db3ff 72px,#49b2ff 76px,#62b1ff 80px,#76b1ff 84px,#87b0ff 88px,#96b0ff 92px,#a5afff 96px,#b2aeff 100px,#bfaeff 104px,#ccadff 108px,#d8acff 112px,#e4abff 116px,#efaaff 120px,#fbaaff 124px,#ffa4f7 128px,#ff9ced 132px,#ff94e3 136px,#ff8dda 140px,#ff87d2 144px,#ff81ca 148px,#ff7bc3 152px,#ff75bc 156px,#ff70b5 160px,#ff6baf 164px,#ff66a8 168px,#ff61a3 172px,#ff5c9d 176px,#ff5798 180px,#ff5292 184px,#ff4e8d 188px,#ff4988 192px,#ff4483 196px,#ff3f7e 200px,#ff3a7a 204px,#ff3575 208px,#ff2f70 212px,#ff296c 216px,#ff2167 220px,#ff1863 224px,#ff005e 228px,#ff005a 232px,#ff0055 236px,#ff0050 240px,#ff004c 244px,#ff0047 248px,#ff0041 252px,#ff003c 256px,#ff0036 260px,#ff0030 264px,#ff0028 268px,#ff001f 272px,#ff0011 276px,#ff0000 280px,#ff0000 284px,#ff0000 288px,#ff0000 292px,#ff0000 296px,#ff0000 300px,#ff0000 304px,#ff0000 308px,#ff0000 312px,#ff0000 316px)"></i><i style="top:242px;height:2px;background:linear-gradient(90deg,#00b7ff 0px,#00b7ff 4px,#00b6ff 8px,#00b6ff 12px,#00b6ff 16px,#00b5ff 20px,#00b5ff 24px,#00b4ff 28px,#00b4ff 32px,#00b4ff 36px,#00b3ff 40px,#00b3ff 44px,#00b2ff 48px,#00b2ff 52px,#00b2ff 56px,#00b1ff 60px,#00b0ff 64px,#00b0ff 68px,#22afff 72px,#4bafff 76px,#63aeff 80px,#77aeff 84px,#88adff 88px,#97acff 92px,#a5acff 96px,#b2abff 100px,#bfaaff 104px,#cba9ff 108px,#d7a8ff 112px,#e3a7ff 116px,#efa6ff 120px,#faa5ff 124px,#ffa0f8 128px,#ff98ee 132px,#ff91e4 136px,#ff8adb 140px,#ff83d3 144px,#ff7dcb 148px,#ff77c4 152px,#ff72bd 156px,#ff6cb6 160px,#ff67b0 164px,#ff62aa 168px,#ff5da4 172px,#ff589e 176px,#ff5399 180px,#ff4e93 184px,#ff498e 188px,#ff4589 192px,#ff3f85 196px,#ff3a80 200px,#ff357b 204px,#ff2f76 208px,#ff2872 212px,#ff216d 216px,#ff1769 220px,#ff0064 224px,#ff0060 228px,#ff005b 232px,#ff0057 236px,#ff0052 240px,#ff004e 244px,#ff0049 248px,#ff0044 252px,#ff003e 256px,#ff0039 260px,#ff0033 264px,#ff002c 268px,#ff0024 272px,#ff0019 276px,#ff0000 280px,#ff0000 284px,#ff0000 288px,#ff0000 292px,#ff0000 296px,#ff0000 300px,#ff0000 304px,#ff0000 308px,#ff0000 312px,#ff0000 316px)"></i><i style="top:244px;height:2px;background:linear-gradient(90deg,#00b4ff 0px,#00b4ff 4px,#00b4ff 8px,#00b4ff 12px,#00b3ff 16px,#00b3ff 20px,#00b2ff 24px,#00b2ff 28px,#00b2ff 32px,#00b1ff 36px,#00b1ff 40px,#00b0ff 44px,#00b0ff 48px,#00afff 52px,#00afff 56px,#00aeff 60px,#00aeff 64px,#00adff 68px,#27acff 72px,#4dacff 76px,#64abff 80px,#77aaff 84px,#88aaff 88px,#97a9ff 92px,#a5a8ff 96px,#b2a7ff 100px,#bfa6ff 104px,#cba5ff 108px,#d7a4ff 112px,#e3a3ff 116px,#eea2ff 120px,#f9a1ff 124px,#ff9cf9 128px,#ff94ef 132px,#ff8de5 136px,#ff86dc 140px,#ff80d4 144px,#ff7acc 148px,#ff74c5 152px,#ff6ebe 156px,#ff69b7 160px,#ff63b1 164px,#ff5eab 168px,#ff59a5 172px,#ff549f 176px,#ff4f9a 180px,#ff4a95 184px,#ff4590 188px,#ff408b 192px,#ff3b86 196px,#ff3581 200px,#ff2f7c 204px,#ff2878 208px,#ff2073 212px,#ff166f 216px,#ff006a 220px,#ff0066 224px,#ff0062 228px,#ff005d 232px,#ff0059 236px,#ff0054 240px,#ff004f 244px,#ff004b 248px,#ff0046 252px,#ff0041 256px,#ff003b 260px,#ff0036 264px,#ff002f 268px,#ff0028 272px,#ff001f 276px,#ff0011 280px,#ff0000 284px,#ff0000 288px,#ff0000 292px,#ff0000 296px,#ff0000 300px,#ff0000 304px,#ff0000 308px,#ff0000 312px,#ff0000 316px)"></i><i style="top:246px;height:2px;background:linear-gradient(90deg,#00b2ff 0px,#00b2ff 4px,#00b2ff 8px,#00b1ff 12px,#00b1ff 16px,#00b0ff 20px,#00b0ff 24px,#00afff 28px,#00afff 32px,#00aeff 36px,#00aeff 40px,#00adff 44px,#00adff 48px,#00acff 52px,#00acff 56px,#00abff 60px,#00abff 64px,#00aaff 68px,#2ba9ff 72px,#4ea8ff 76px,#65a8ff 80px,#78a7ff 84px,#88a6ff 88px,#97a5ff 92px,#a5a4ff 96px,#b2a3ff 100px,#bea2ff 104px,#cba1ff 108px,#d6a0ff 112px,#e29fff 116px,#ed9eff 120px,#f99cff 124px,#ff98fa 128px,#ff90f0 132px,#ff89e6 136px,#ff82dd 140px,#ff7cd5 144px,#ff76cd 148px,#ff70c6 152px,#ff6abf 156px,#ff65b8 160px,#ff60b2 164px,#ff5aac 168px,#ff55a6 172px,#ff50a1 176px,#ff4b9b 180px,#ff4696 184px,#ff4091 188px,#ff3b8c 192px,#ff3587 196px,#ff2f82 200px,#ff287e 204px,#ff2079 208px,#ff1575 212px,#ff0070 216px,#ff006c 220px,#ff0068 224px,#ff0063 228px,#ff005f 232px,#ff005a 236px,#ff0056 240px,#ff0051 244px,#ff004d 248px,#ff0048 252px,#ff0043 256px,#ff003e 260px,#ff0038 264px,#ff0032 268px,#ff002b 272px,#ff0024 276px,#ff0019 280px,#ff0000 284px,#ff0000 288px,#ff0000 292px,#ff0000 296px,#ff0000 300px,#ff0000 304px,#ff0000 308px,#ff0000 312px,#ff0000 316px)"></i><i style="top:248px;height:2px;background:linear-gradient(90deg,#00b0ff 0px,#00b0ff 4px,#00afff 8px,#00afff 12px,#00aeff 16px,#00aeff 20px,#00adff 24px,#00adff 28px,#00acff 32px,#00acff 36px,#00abff 40px,#00abff 44px,#00aaff 48px,#00aaff 52px,#00a9ff 56px,#00a8ff 60px,#00a8ff 64px,#00a7ff 68px,#2fa6ff 72px,#50a5ff 76px,#66a4ff 80px,#79a4ff 84px,#89a3ff 88px,#97a2ff 92px,#a5a1ff 96px,#b2a0ff 100px,#be9fff 104px,#ca9dff 108px,#d69cff 112px,#e19bff 116px,#ed9aff 120px,#f898ff 124px,#ff94fb 128px,#ff8df1 132px,#ff85e7 136px,#ff7fde 140px,#ff78d6 144px,#ff72ce 148px,#ff6cc7 152px,#ff67c0 156px,#ff61b9 160px,#ff5cb3 164px,#ff56ad 168px,#ff51a7 172px,#ff4ca2 176px,#ff469c 180px,#ff4197 184px,#ff3b92 188px,#ff358d 192px,#ff2f88 196px,#ff2884 200px,#ff1f7f 204px,#ff137b 208px,#ff0076 212px,#ff0072 216px,#ff006d 220px,#ff0069 224px,#ff0065 228px,#ff0060 232px,#ff005c 236px,#ff0058 240px,#ff0053 244px,#ff004f 248px,#ff004a 252px,#ff0045 256px,#ff0040 260px,#ff003b 264px,#ff0035 268px,#ff002f 272px,#ff0028 276px,#ff001f 280px,#ff0011 284px,#ff0000 288px,#ff0000 292px,#ff0000 296px,#ff0000 300px,#ff0000 304px,#ff0000 308px,#ff0000 312px,#ff0000 316px)"></i><i style="top:250px;height:2px;background:linear-gradient(90deg,#00aeff 0px,#00adff 4px,#00adff 8px,#00acff 12px,#00acff 16px,#00abff 20px,#00abff 24px,#00aaff 28px,#00aaff 32px,#00a9ff 36px,#00a9ff 40px,#00a8ff 44px,#00a7ff 48px,#00a7ff 52px,#00a6ff 56px,#00a5ff 60px,#00a4ff 64px,#00a4ff 68px,#32a3ff 72px,#52a2ff 76px,#67a1ff 80px,#79a0ff 84px,#899fff 88px,#989eff 92px,#a59dff 96px,#b29cff 100px,#be9bff 104px,#ca99ff 108px,#d598ff 112px,#e197ff 116px,#ec95ff 120px,#f794ff 124px,#ff90fc 128px,#ff89f2 132px,#ff81e8 136px,#ff7bdf 140px,#ff74d7 144px,#ff6ecf 148px,#ff68c8 152px,#ff62c1 156px,#ff5dba 160px,#ff57b4 164px,#ff52ae 168px,#ff4ca8 172px,#ff47a3 176px,#ff419e 180px,#ff3c98 184px,#ff3593 188px,#ff2f8e 192px,#ff288a 196px,#ff1f85 200px,#ff1280 204px,#ff007c 208px,#ff0078 212px,#ff0073 216px,#ff006f 220px,#ff006a 224px,#ff0066 228px,#ff0062 232px,#ff005e 236px,#ff0059 240px,#ff0055 244px,#ff0050 248px,#ff004c 252px,#ff0047 256px,#ff0042 260px,#ff003d 264px,#ff0038 268px,#ff0032 272px,#ff002b 276px,#ff0023 280px,#ff0019 284px,#ff0000 288px,#ff0000 292px,#ff0000 296px,#ff0000 300px,#ff0000 304px,#ff0000 308px,#ff0000 312px,#ff0000 316px)"></i><i style="top:252px;height:2px;background:linear-gradient(90deg,#00abff 0px,#00abff 4px,#00abff 8px,#00aaff 12px,#00aaff 16px,#00a9ff 20px,#00a8ff 24px,#00a8ff 28px,#00a7ff 32px,#00a7ff 36px,#00a6ff 40px,#00a5ff 44px,#00a5ff 48px,#00a4ff 52px,#00a3ff 56px,#00a2ff 60px,#00a1ff 64px,#00a1ff 68px,#35a0ff 72px,#539fff 76px,#689eff 80px,#7a9dff 84px,#8a9cff 88px,#989bff 92px,#a599ff 96px,#b298ff 100px,#be97ff 104px,#ca96ff 108px,#d594ff 112px,#e093ff 116px,#eb91ff 120px,#f68fff 124px,#ff8cfd 128px,#ff84f3 132px,#ff7de9 136px,#ff77e0 140px,#ff70d8 144px,#ff6ad0 148px,#ff64c9 152px,#ff5ec2 156px,#ff59bc 160px,#ff53b5 164px,#ff4daf 168px,#ff48aa 172px,#ff42a4 176px,#ff3c9f 180px,#ff369a 184px,#ff2f95 188px,#ff2790 192px,#ff1e8b 196px,#ff1086 200px,#ff0082 204px,#ff007d 208px,#ff0079 212px,#ff0074 216px,#ff0070 220px,#ff006c 224px,#ff0068 228px,#ff0063 232px,#ff005f 236px,#ff005b 240px,#ff0057 244px,#ff0052 248px,#ff004e 252px,#ff0049 256px,#ff0044 260px,#ff003f 264px,#ff003a 268px,#ff0035 272px,#ff002e 276px,#ff0027 280px,#ff001f 284px,#ff0012 288px,#ff0000 292px,#ff0000 296px,#ff0000 300px,#ff0000 304px,#ff0000 308px,#ff0000 312px,#ff0000 316px)"></i><i style="top:254px;height:2px;background:linear-gradient(90deg,#00a9ff 0px,#00a9ff 4px,#00a8ff 8px,#00a8ff 12px,#00a7ff 16px,#00a7ff 20px,#00a6ff 24px,#00a5ff 28px,#00a5ff 32px,#00a4ff 36px,#00a3ff 40px,#00a3ff 44px,#00a2ff 48px,#00a1ff 52px,#00a0ff 56px,#009fff 60px,#009eff 64px,#009eff 68px,#379dff 72px,#549cff 76px,#699aff 80px,#7b99ff 84px,#8a98ff 88px,#9897ff 92px,#a596ff 96px,#b294ff 100px,#be93ff 104px,#c992ff 108px,#d590ff 112px,#e08eff 116px,#eb8cff 120px,#f68bff 124px,#ff88fe 128px,#ff80f3 132px,#ff79ea 136px,#ff72e1 140px,#ff6cd9 144px,#ff66d1 148px,#ff60ca 152px,#ff5ac3 156px,#ff54bd 160px,#ff4eb6 164px,#ff48b0 168px,#ff42ab 172px,#ff3ca5 176px,#ff36a0 180px,#ff2f9b 184px,#ff2796 188px,#ff1d91 192px,#ff0e8c 196px,#ff0087 200px,#ff0083 204px,#ff007f 208px,#ff007a 212px,#ff0076 216px,#ff0072 220px,#ff006d 224px,#ff0069 228px,#ff0065 232px,#ff0061 236px,#ff005d 240px,#ff0058 244px,#ff0054 248px,#ff0050 252px,#ff004b 256px,#ff0046 260px,#ff0042 264px,#ff003d 268px,#ff0037 272px,#ff0031 276px,#ff002b 280px,#ff0023 284px,#ff0019 288px,#ff0000 292px,#ff0000 296px,#ff0000 300px,#ff0000 304px,#ff0000 308px,#ff0000 312px,#ff0000 316px)"></i><i style="top:256px;height:2px;background:linear-gradient(90deg,#00a7ff 0px,#00a6ff 4px,#00a6ff 8px,#00a5ff 12px,#00a5ff 16px,#00a4ff 20px,#00a3ff 24px,#00a3ff 28px,#00a2ff 32px,#00a1ff 36px,#00a1ff 40px,#00a0ff 44px,#009fff 48px,#009eff 52px,#009dff 56px,#009cff 60px,#009bff 64px,#009aff 68px,#3a99ff 72px,#5698ff 76px,#6a97ff 80px,#7b96ff 84px,#8a95ff 88px,#9893ff 92px,#a592ff 96px,#b291ff 100px,#be8fff 104px,#c98dff 108px,#d48cff 112px,#df8aff 116px,#ea88ff 120px,#f586ff 124px,#ff83fe 128px,#ff7cf4 132px,#ff75eb 136px,#ff6ee2 140px,#ff68da 144px,#ff61d2 148px,#ff5bcb 152px,#ff55c4 156px,#ff4fbe 160px,#ff49b7 164px,#ff43b1 168px,#ff3dac 172px,#ff36a6 176px,#ff2fa1 180px,#ff279c 184px,#ff1d97 188px,#ff0a92 192px,#ff008d 196px,#ff0089 200px,#ff0084 204px,#ff0080 208px,#ff007b 212px,#ff0077 216px,#ff0073 220px,#ff006f 224px,#ff006b 228px,#ff0066 232px,#ff0062 236px,#ff005e 240px,#ff005a 244px,#ff0056 248px,#ff0051 252px,#ff004d 256px,#ff0048 260px,#ff0044 264px,#ff003f 268px,#ff003a 272px,#ff0034 276px,#ff002e 280px,#ff0027 284px,#ff001f 288px,#ff0012 292px,#ff0000 296px,#ff0000 300px,#ff0000 304px,#ff0000 308px,#ff0000 312px,#ff0000 316px)"></i><i style="top:258px;height:2px;background:linear-gradient(90deg,#00a5ff 0px,#00a4ff 4px,#00a4ff 8px,#00a3ff 12px,#00a2ff 16px,#00a2ff 20px,#00a1ff 24px,#00a0ff 28px,#009fff 32px,#009fff 36px,#009eff 40px,#009dff 44px,#009cff 48px,#009bff 52px,#009aff 56px,#0099ff 60px,#0098ff 64px,#0097ff 68px,#3c96ff 72px,#5795ff 76px,#6b94ff 80px,#7c92ff 84px,#8b91ff 88px,#9990ff 92px,#a58eff 96px,#b28dff 100px,#bd8bff 104px,#c989ff 108px,#d488ff 112px,#df86ff 116px,#e983ff 120px,#f481ff 124px,#ff7fff 128px,#ff77f5 132px,#ff70ec 136px,#ff6ae3 140px,#ff63db 144px,#ff5dd3 148px,#ff56cc 152px,#ff50c5 156px,#ff4abf 160px,#ff44b8 164px,#ff3db2 168px,#ff36ad 172px,#ff2fa7 176px,#ff26a2 180px,#ff1c9d 184px,#ff0498 188px,#ff0093 192px,#ff008e 196px,#ff008a 200px,#ff0085 204px,#ff0081 208px,#ff007d 212px,#ff0078 216px,#ff0074 220px,#ff0070 224px,#ff006c 228px,#ff0068 232px,#ff0064 236px,#ff0060 240px,#ff005b 244px,#ff0057 248px,#ff0053 252px,#ff004f 256px,#ff004a 260px,#ff0046 264px,#ff0041 268px,#ff003c 272px,#ff0037 276px,#ff0031 280px,#ff002b 284px,#ff0023 288px,#ff0019 292px,#ff0000 296px,#ff0000 300px,#ff0000 304px,#ff0000 308px,#ff0000 312px,#ff0000 316px)"></i><i style="top:260px;height:2px;background:linear-gradient(90deg,#00a2ff 0px,#00a2ff 4px,#00a1ff 8px,#00a0ff 12px,#00a0ff 16px,#009fff 20px,#009eff 24px,#009eff 28px,#009dff 32px,#009cff 36px,#009bff 40px,#009aff 44px,#0099ff 48px,#0098ff 52px,#0097ff 56px,#0096ff 60px,#0095ff 64px,#0094ff 68px,#3e93ff 72px,#5892ff 76px,#6c90ff 80px,#7c8fff 84px,#8b8eff 88px,#998cff 92px,#a58aff 96px,#b289ff 100px,#bd87ff 104px,#c885ff 108px,#d383ff 112px,#de81ff 116px,#e97fff 120px,#f37cff 124px,#fe7aff 128px,#ff73f6 132px,#ff6ced 136px,#ff65e4 140px,#ff5edc 144px,#ff58d4 148px,#ff51cd 152px,#ff4bc6 156px,#ff44c0 160px,#ff3eb9 164px,#ff36b4 168px,#ff2fae 172px,#ff26a8 176px,#ff1ba3 180px,#ff009e 184px,#ff0099 188px,#ff0094 192px,#ff0090 196px,#ff008b 200px,#ff0087 204px,#ff0082 208px,#ff007e 212px,#ff007a 216px,#ff0076 220px,#ff0071 224px,#ff006d 228px,#ff0069 232px,#ff0065 236px,#ff0061 240px,#ff005d 244px,#ff0059 248px,#ff0055 252px,#ff0050 256px,#ff004c 260px,#ff0048 264px,#ff0043 268px,#ff003e 272px,#ff0039 276px,#ff0034 280px,#ff002e 284px,#ff0027 288px,#ff001e 292px,#ff0012 296px,#ff0000 300px,#ff0000 304px,#ff0000 308px,#ff0000 312px,#ff0000 316px)"></i><i style="top:262px;height:2px;background:linear-gradient(90deg,#00a0ff 0px,#009fff 4px,#009fff 8px,#009eff 12px,#009dff 16px,#009dff 20px,#009cff 24px,#009bff 28px,#009aff 32px,#0099ff 36px,#0098ff 40px,#0097ff 44px,#0096ff 48px,#0095ff 52px,#0094ff 56px,#0093ff 60px,#0092ff 64px,#0091ff 68px,#4190ff 72px,#5a8eff 76px,#6d8dff 80px,#7d8bff 84px,#8c8aff 88px,#9988ff 92px,#a687ff 96px,#b285ff 100px,#bd83ff 104px,#c881ff 108px,#d37fff 112px,#de7dff 116px,#e87aff 120px,#f377ff 124px,#fd75ff 128px,#ff6ef7 132px,#ff67ed 136px,#ff60e5 140px,#ff59dd 144px,#ff52d5 148px,#ff4cce 152px,#ff45c7 156px,#ff3ec1 160px,#ff37ba 164px,#ff2fb5 168px,#ff26af 172px,#ff1aa9 176px,#ff00a4 180px,#ff009f 184px,#ff009a 188px,#ff0095 192px,#ff0091 196px,#ff008c 200px,#ff0088 204px,#ff0083 208px,#ff007f 212px,#ff007b 216px,#ff0077 220px,#ff0073 224px,#ff006f 228px,#ff006b 232px,#ff0067 236px,#ff0063 240px,#ff005f 244px,#ff005a 248px,#ff0056 252px,#ff0052 256px,#ff004e 260px,#ff004a 264px,#ff0045 268px,#ff0040 272px,#ff003c 276px,#ff0036 280px,#ff0031 284px,#ff002a 288px,#ff0023 292px,#ff0019 296px,#ff0000 300px,#ff0000 304px,#ff0000 308px,#ff0000 312px,#ff0000 316px)"></i><i style="top:264px;height:2px;background:linear-gradient(90deg,#009eff 0px,#009dff 4px,#009cff 8px,#009cff 12px,#009bff 16px,#009aff 20px,#0099ff 24px,#0098ff 28px,#0097ff 32px,#0097ff 36px,#0096ff 40px,#0095ff 44px,#0094ff 48px,#0092ff 52px,#0091ff 56px,#0090ff 60px,#008fff 64px,#128eff 68px,#428cff 72px,#5b8bff 76px,#6d89ff 80px,#7d88ff 84px,#8c86ff 88px,#9985ff 92px,#a683ff 96px,#b181ff 100px,#bd7fff 104px,#c87dff 108px,#d37aff 112px,#dd78ff 116px,#e875ff 120px,#f272ff 124px,#fc6fff 128px,#ff69f8 132px,#ff62ee 136px,#ff5be6 140px,#ff54de 144px,#ff4dd6 148px,#ff46cf 152px,#ff3fc8 156px,#ff37c2 160px,#ff2fbb 164px,#ff25b6 168px,#ff18b0 172px,#ff00aa 176px,#ff00a5 180px,#ff00a0 184px,#ff009b 188px,#ff0097 192px,#ff0092 196px,#ff008d 200px,#ff0089 204px,#ff0085 208px,#ff0080 212px,#ff007c 216px,#ff0078 220px,#ff0074 224px,#ff0070 228px,#ff006c 232px,#ff0068 236px,#ff0064 240px,#ff0060 244px,#ff005c 248px,#ff0058 252px,#ff0054 256px,#ff0050 260px,#ff004b 264px,#ff0047 268px,#ff0043 272px,#ff003e 276px,#ff0039 280px,#ff0033 284px,#ff002d 288px,#ff0027 292px,#ff001e 296px,#ff0012 300px,#ff0000 304px,#ff0000 308px,#ff0000 312px,#ff0000 316px)"></i><i style="top:266px;height:2px;background:linear-gradient(90deg,#009bff 0px,#009bff 4px,#009aff 8px,#0099ff 12px,#0098ff 16px,#0098ff 20px,#0097ff 24px,#0096ff 28px,#0095ff 32px,#0094ff 36px,#0093ff 40px,#0092ff 44px,#0091ff 48px,#0090ff 52px,#008eff 56px,#008dff 60px,#008cff 64px,#1a8aff 68px,#4489ff 72px,#5c88ff 76px,#6e86ff 80px,#7e84ff 84px,#8c83ff 88px,#9981ff 92px,#a67fff 96px,#b17dff 100px,#bd7bff 104px,#c878ff 108px,#d276ff 112px,#dd73ff 116px,#e770ff 120px,#f16dff 124px,#fc6aff 128px,#ff64f8 132px,#ff5cef 136px,#ff55e7 140px,#ff4ede 144px,#ff47d7 148px,#ff3fd0 152px,#ff37c9 156px,#ff2fc3 160px,#ff25bc 164px,#ff17b7 168px,#ff00b1 172px,#ff00ac 176px,#ff00a6 180px,#ff00a1 184px,#ff009c 188px,#ff0098 192px,#ff0093 196px,#ff008f 200px,#ff008a 204px,#ff0086 208px,#ff0082 212px,#ff007d 216px,#ff0079 220px,#ff0075 224px,#ff0071 228px,#ff006d 232px,#ff0069 236px,#ff0065 240px,#ff0061 244px,#ff005d 248px,#ff0059 252px,#ff0055 256px,#ff0051 260px,#ff004d 264px,#ff0049 268px,#ff0044 272px,#ff0040 276px,#ff003b 280px,#ff0036 284px,#ff0030 288px,#ff002a 292px,#ff0023 296px,#ff0019 300px,#ff0001 304px,#ff0000 308px,#ff0000 312px,#ff0000 316px)"></i><i style="top:268px;height:2px;background:linear-gradient(90deg,#0099ff 0px,#0098ff 4px,#0098ff 8px,#0097ff 12px,#0096ff 16px,#0095ff 20px,#0094ff 24px,#0093ff 28px,#0092ff 32px,#0091ff 36px,#0090ff 40px,#008fff 44px,#008eff 48px,#008dff 52px,#008bff 56px,#008aff 60px,#0089ff 64px,#1f87ff 68px,#4686ff 72px,#5d84ff 76px,#6f82ff 80px,#7f81ff 84px,#8d7fff 88px,#9a7dff 92px,#a67bff 96px,#b179ff 100px,#bd76ff 104px,#c774ff 108px,#d271ff 112px,#dc6eff 116px,#e76bff 120px,#f168ff 124px,#fb64ff 128px,#ff5ef9 132px,#ff56f0 136px,#ff4fe7 140px,#ff47df 144px,#ff40d8 148px,#ff38d1 152px,#ff2fca 156px,#ff24c4 160px,#ff15bd 164px,#ff00b8 168px,#ff00b2 172px,#ff00ad 176px,#ff00a7 180px,#ff00a2 184px,#ff009d 188px,#ff0099 192px,#ff0094 196px,#ff0090 200px,#ff008b 204px,#ff0087 208px,#ff0083 212px,#ff007f 216px,#ff007b 220px,#ff0077 224px,#ff0073 228px,#ff006f 232px,#ff006b 236px,#ff0067 240px,#ff0063 244px,#ff005f 248px,#ff005b 252px,#ff0057 256px,#ff0053 260px,#ff004f 264px,#ff004b 268px,#ff0046 272px,#ff0042 276px,#ff003d 280px,#ff0038 284px,#ff0033 288px,#ff002d 292px,#ff0026 296px,#ff001e 300px,#ff0012 304px,#ff0000 308px,#ff0000 312px,#ff0000 316px)"></i><i style="top:270px;height:2px;background:linear-gradient(90deg,#0097ff 0px,#0096ff 4px,#0095ff 8px,#0094ff 12px,#0093ff 16px,#0092ff 20px,#0092ff 24px,#0090ff 28px,#008fff 32px,#008eff 36px,#008dff 40px,#008cff 44px,#008bff 48px,#008aff 52px,#0088ff 56px,#0087ff 60px,#0085ff 64px,#2484ff 68px,#4882ff 72px,#5e81ff 76px,#707fff 80px,#7f7dff 84px,#8d7bff 88px,#9a79ff 92px,#a677ff 96px,#b174ff 100px,#bc72ff 104px,#c76fff 108px,#d26cff 112px,#dc69ff 116px,#e666ff 120px,#f062ff 124px,#fa5eff 128px,#ff58fa 132px,#ff50f1 136px,#ff48e8 140px,#ff40e0 144px,#ff38d9 148px,#ff2fd2 152px,#ff24cb 156px,#ff13c4 160px,#ff00be 164px,#ff00b9 168px,#ff00b3 172px,#ff00ae 176px,#ff00a8 180px,#ff00a3 184px,#ff009e 188px,#ff009a 192px,#ff0095 196px,#ff0091 200px,#ff008c 204px,#ff0088 208px,#ff0084 212px,#ff0080 216px,#ff007c 220px,#ff0078 224px,#ff0074 228px,#ff0070 232px,#ff006c 236px,#ff0068 240px,#ff0064 244px,#ff0060 248px,#ff005c 252px,#ff0059 256px,#ff0055 260px,#ff0051 264px,#ff004c 268px,#ff0048 272px,#ff0044 276px,#ff003f 280px,#ff003b 284px,#ff0035 288px,#ff0030 292px,#ff002a 296px,#ff0023 300px,#ff0019 304px,#ff0004 308px,#ff0000 312px,#ff0000 316px)"></i><i style="top:272px;height:2px;background:linear-gradient(90deg,#0094ff 0px,#0094ff 4px,#0093ff 8px,#0092ff 12px,#0091ff 16px,#0090ff 20px,#008fff 24px,#008eff 28px,#008dff 32px,#008cff 36px,#008aff 40px,#0089ff 44px,#0088ff 48px,#0086ff 52px,#0085ff 56px,#0084ff 60px,#0082ff 64px,#2880ff 68px,#497fff 72px,#5f7dff 76px,#707bff 80px,#8079ff 84px,#8d77ff 88px,#9a75ff 92px,#a672ff 96px,#b170ff 100px,#bc6dff 104px,#c76aff 108px,#d167ff 112px,#db64ff 116px,#e660ff 120px,#ef5cff 124px,#f958ff 128px,#ff52fb 132px,#ff49f2 136px,#ff41e9 140px,#ff38e1 144px,#ff2fda 148px,#ff23d2 152px,#ff11cc 156px,#ff00c5 160px,#ff00bf 164px,#ff00b9 168px,#ff00b4 172px,#ff00af 176px,#ff00a9 180px,#ff00a4 184px,#ff00a0 188px,#ff009b 192px,#ff0096 196px,#ff0092 200px,#ff008d 204px,#ff0089 208px,#ff0085 212px,#ff0081 216px,#ff007d 220px,#ff0079 224px,#ff0075 228px,#ff0071 232px,#ff006d 236px,#ff0069 240px,#ff0066 244px,#ff0062 248px,#ff005e 252px,#ff005a 256px,#ff0056 260px,#ff0052 264px,#ff004e 268px,#ff004a 272px,#ff0046 276px,#ff0041 280px,#ff003d 284px,#ff0038 288px,#ff0033 292px,#ff002d 296px,#ff0026 300px,#ff001e 304px,#ff0012 308px,#ff0000 312px,#ff0000 316px)"></i><i style="top:274px;height:2px;background:linear-gradient(90deg,#0092ff 0px,#0091ff 4px,#0090ff 8px,#008fff 12px,#008eff 16px,#008dff 20px,#008cff 24px,#008bff 28px,#008aff 32px,#0089ff 36px,#0088ff 40px,#0086ff 44px,#0085ff 48px,#0083ff 52px,#0082ff 56px,#0080ff 60px,#007fff 64px,#2b7dff 68px,#4b7bff 72px,#6079ff 76px,#7177ff 80px,#8075ff 84px,#8e73ff 88px,#9a71ff 92px,#a66eff 96px,#b16bff 100px,#bc68ff 104px,#c765ff 108px,#d162ff 112px,#db5eff 116px,#e55aff 120px,#ef56ff 124px,#f951ff 128px,#ff4bfc 132px,#ff42f2 136px,#ff39ea 140px,#ff2ee2 144px,#ff22da 148px,#ff0dd3 152px,#ff00cd 156px,#ff00c6 160px,#ff00c0 164px,#ff00ba 168px,#ff00b5 172px,#ff00b0 176px,#ff00aa 180px,#ff00a5 184px,#ff00a1 188px,#ff009c 192px,#ff0097 196px,#ff0093 200px,#ff008f 204px,#ff008a 208px,#ff0086 212px,#ff0082 216px,#ff007e 220px,#ff007a 224px,#ff0076 228px,#ff0072 232px,#ff006f 236px,#ff006b 240px,#ff0067 244px,#ff0063 248px,#ff005f 252px,#ff005b 256px,#ff0058 260px,#ff0054 264px,#ff0050 268px,#ff004c 272px,#ff0048 276px,#ff0043 280px,#ff003f 284px,#ff003a 288px,#ff0035 292px,#ff0030 296px,#ff002a 300px,#ff0022 304px,#ff0019 308px,#ff0006 312px,#ff0000 316px)"></i><i style="top:276px;height:2px;background:linear-gradient(90deg,#0090ff 0px,#008fff 4px,#008eff 8px,#008dff 12px,#008cff 16px,#008bff 20px,#008aff 24px,#0088ff 28px,#0087ff 32px,#0086ff 36px,#0085ff 40px,#0083ff 44px,#0082ff 48px,#0080ff 52px,#007fff 56px,#007dff 60px,#007bff 64px,#2e7aff 68px,#4c78ff 72px,#6176ff 76px,#7273ff 80px,#8071ff 84px,#8e6fff 88px,#9a6cff 92px,#a66aff 96px,#b167ff 100px,#bc64ff 104px,#c660ff 108px,#d15dff 112px,#db59ff 116px,#e454ff 120px,#ee4fff 124px,#f84aff 128px,#ff43fc 132px,#ff39f3 136px,#ff2eeb 140px,#ff21e3 144px,#ff08db 148px,#ff00d4 152px,#ff00ce 156px,#ff00c7 160px,#ff00c1 164px,#ff00bb 168px,#ff00b6 172px,#ff00b0 176px,#ff00ab 180px,#ff00a6 184px,#ff00a2 188px,#ff009d 192px,#ff0098 196px,#ff0094 200px,#ff0090 204px,#ff008b 208px,#ff0087 212px,#ff0083 216px,#ff007f 220px,#ff007b 224px,#ff0077 228px,#ff0074 232px,#ff0070 236px,#ff006c 240px,#ff0068 244px,#ff0064 248px,#ff0061 252px,#ff005d 256px,#ff0059 260px,#ff0055 264px,#ff0051 268px,#ff004d 272px,#ff0049 276px,#ff0045 280px,#ff0041 284px,#ff003c 288px,#ff0037 292px,#ff0032 296px,#ff002d 300px,#ff0026 304px,#ff001e 308px,#ff0013 312px,#ff0000 316px)"></i><i style="top:278px;height:2px;background:linear-gradient(90deg,#008dff 0px,#008cff 4px,#008bff 8px,#008aff 12px,#0089ff 16px,#0088ff 20px,#0087ff 24px,#0086ff 28px,#0084ff 32px,#0083ff 36px,#0082ff 40px,#0080ff 44px,#007fff 48px,#007dff 52px,#007bff 56px,#007aff 60px,#0078ff 64px,#3176ff 68px,#4e74ff 72px,#6272ff 76px,#7270ff 80px,#816dff 84px,#8e6bff 88px,#9a68ff 92px,#a665ff 96px,#b162ff 100px,#bc5fff 104px,#c65bff 108px,#d057ff 112px,#da52ff 116px,#e44eff 120px,#ee48ff 124px,#f742ff 128px,#ff3afd 132px,#ff2ef4 136px,#ff21ec 140px,#ff00e4 144px,#ff00dc 148px,#ff00d5 152px,#ff00ce 156px,#ff00c8 160px,#ff00c2 164px,#ff00bc 168px,#ff00b7 172px,#ff00b1 176px,#ff00ac 180px,#ff00a7 184px,#ff00a3 188px,#ff009e 192px,#ff0099 196px,#ff0095 200px,#ff0091 204px,#ff008c 208px,#ff0088 212px,#ff0084 216px,#ff0080 220px,#ff007c 224px,#ff0079 228px,#ff0075 232px,#ff0071 236px,#ff006d 240px,#ff006a 244px,#ff0066 248px,#ff0062 252px,#ff005e 256px,#ff005b 260px,#ff0057 264px,#ff0053 268px,#ff004f 272px,#ff004b 276px,#ff0047 280px,#ff0043 284px,#ff003e 288px,#ff003a 292px,#ff0035 296px,#ff002f 300px,#ff0029 304px,#ff0022 308px,#ff0019 312px,#ff0007 316px)"></i><i style="top:280px;height:2px;background:linear-gradient(90deg,#008bff 0px,#008aff 4px,#0089ff 8px,#0088ff 12px,#0087ff 16px,#0085ff 20px,#0084ff 24px,#0083ff 28px,#0082ff 32px,#0080ff 36px,#007fff 40px,#007dff 44px,#007cff 48px,#007aff 52px,#0078ff 56px,#0076ff 60px,#0074ff 64px,#3472ff 68px,#4f70ff 72px,#636eff 76px,#736cff 80px,#8169ff 84px,#8e66ff 88px,#9b63ff 92px,#a660ff 96px,#b15dff 100px,#bc59ff 104px,#c655ff 108px,#d051ff 112px,#da4cff 116px,#e346ff 120px,#ed40ff 124px,#f738ff 128px,#ff2efe 132px,#ff1ff5 136px,#ff00ec 140px,#ff00e4 144px,#ff00dd 148px,#ff00d6 152px,#ff00cf 156px,#ff00c9 160px,#ff00c3 164px,#ff00bd 168px,#ff00b8 172px,#ff00b2 176px,#ff00ad 180px,#ff00a8 184px,#ff00a4 188px,#ff009f 192px,#ff009a 196px,#ff0096 200px,#ff0092 204px,#ff008e 208px,#ff0089 212px,#ff0085 216px,#ff0081 220px,#ff007e 224px,#ff007a 228px,#ff0076 232px,#ff0072 236px,#ff006e 240px,#ff006b 244px,#ff0067 248px,#ff0063 252px,#ff0060 256px,#ff005c 260px,#ff0058 264px,#ff0054 268px,#ff0051 272px,#ff004d 276px,#ff0049 280px,#ff0045 284px,#ff0040 288px,#ff003c 292px,#ff0037 296px,#ff0032 300px,#ff002c 304px,#ff0026 308px,#ff001e 312px,#ff0013 316px)"></i><i style="top:282px;height:2px;background:linear-gradient(90deg,#0088ff 0px,#0088ff 4px,#0086ff 8px,#0085ff 12px,#0084ff 16px,#0083ff 20px,#0081ff 24px,#0080ff 28px,#007fff 32px,#007dff 36px,#007cff 40px,#007aff 44px,#0078ff 48px,#0077ff 52px,#0075ff 56px,#0073ff 60px,#0071ff 64px,#366fff 68px,#506cff 72px,#646aff 76px,#7467ff 80px,#8265ff 84px,#8f62ff 88px,#9b5fff 92px,#a65bff 96px,#b158ff 100px,#bb54ff 104px,#c64fff 108px,#d04aff 112px,#d945ff 116px,#e33eff 120px,#ed36ff 124px,#f62dff 128px,#ff1eff 132px,#ff00f6 136px,#ff00ed 140px,#ff00e5 144px,#ff00de 148px,#ff00d7 152px,#ff00d0 156px,#ff00ca 160px,#ff00c4 164px,#ff00be 168px,#ff00b9 172px,#ff00b3 176px,#ff00ae 180px,#ff00a9 184px,#ff00a5 188px,#ff00a0 192px,#ff009b 196px,#ff0097 200px,#ff0093 204px,#ff008f 208px,#ff008b 212px,#ff0087 216px,#ff0083 220px,#ff007f 224px,#ff007b 228px,#ff0077 232px,#ff0073 236px,#ff0070 240px,#ff006c 244px,#ff0068 248px,#ff0065 252px,#ff0061 256px,#ff005d 260px,#ff005a 264px,#ff0056 268px,#ff0052 272px,#ff004e 276px,#ff004a 280px,#ff0046 284px,#ff0042 288px,#ff003e 292px,#ff0039 296px,#ff0034 300px,#ff002f 304px,#ff0029 308px,#ff0022 312px,#ff0019 316px)"></i><i style="top:284px;height:2px;background:linear-gradient(90deg,#0086ff 0px,#0085ff 4px,#0084ff 8px,#0083ff 12px,#0081ff 16px,#0080ff 20px,#007fff 24px,#007dff 28px,#007cff 32px,#007aff 36px,#0079ff 40px,#0077ff 44px,#0075ff 48px,#0073ff 52px,#0071ff 56px,#006fff 60px,#006dff 64px,#386bff 68px,#5268ff 72px,#6566ff 76px,#7463ff 80px,#8260ff 84px,#8f5dff 88px,#9b5aff 92px,#a656ff 96px,#b152ff 100px,#bb4eff 104px,#c549ff 108px,#cf43ff 112px,#d93cff 116px,#e335ff 120px,#ec2bff 124px,#f51cff 128px,#ff00ff 132px,#ff00f6 136px,#ff00ee 140px,#ff00e6 144px,#ff00df 148px,#ff00d8 152px,#ff00d1 156px,#ff00cb 160px,#ff00c5 164px,#ff00bf 168px,#ff00ba 172px,#ff00b4 176px,#ff00af 180px,#ff00aa 184px,#ff00a5 188px,#ff00a1 192px,#ff009c 196px,#ff0098 200px,#ff0094 204px,#ff0090 208px,#ff008c 212px,#ff0088 216px,#ff0084 220px,#ff0080 224px,#ff007c 228px,#ff0078 232px,#ff0075 236px,#ff0071 240px,#ff006d 244px,#ff006a 248px,#ff0066 252px,#ff0062 256px,#ff005f 260px,#ff005b 264px,#ff0057 268px,#ff0054 272px,#ff0050 276px,#ff004c 280px,#ff0048 284px,#ff0044 288px,#ff0040 292px,#ff003b 296px,#ff0037 300px,#ff0032 304px,#ff002c 308px,#ff0026 312px,#ff001e 316px)"></i><i style="top:286px;height:2px;background:linear-gradient(90deg,#0083ff 0px,#0082ff 4px,#0081ff 8px,#0080ff 12px,#007fff 16px,#007dff 20px,#007cff 24px,#007aff 28px,#0079ff 32px,#0077ff 36px,#0076ff 40px,#0074ff 44px,#0072ff 48px,#0070ff 52px,#006eff 56px,#006cff 60px,#0069ff 64px,#3a67ff 68px,#5364ff 72px,#6562ff 76px,#755fff 80px,#835cff 84px,#8f58ff 88px,#9b55ff 92px,#a650ff 96px,#b14cff 100px,#bb47ff 104px,#c541ff 108px,#cf3bff 112px,#d933ff 116px,#e229ff 120px,#eb19ff 124px,#f500ff 128px,#fe00ff 132px,#ff00f7 136px,#ff00ef 140px,#ff00e7 144px,#ff00df 148px,#ff00d9 152px,#ff00d2 156px,#ff00cc 160px,#ff00c6 164px,#ff00c0 168px,#ff00ba 172px,#ff00b5 176px,#ff00b0 180px,#ff00ab 184px,#ff00a6 188px,#ff00a2 192px,#ff009d 196px,#ff0099 200px,#ff0095 204px,#ff0091 208px,#ff008d 212px,#ff0089 216px,#ff0085 220px,#ff0081 224px,#ff007d 228px,#ff0079 232px,#ff0076 236px,#ff0072 240px,#ff006e 244px,#ff006b 248px,#ff0067 252px,#ff0064 256px,#ff0060 260px,#ff005c 264px,#ff0059 268px,#ff0055 272px,#ff0051 276px,#ff004e 280px,#ff004a 284px,#ff0046 288px,#ff0042 292px,#ff003d 296px,#ff0039 300px,#ff0034 304px,#ff002f 308px,#ff0029 312px,#ff0022 316px)"></i><i style="top:288px;height:2px;background:linear-gradient(90deg,#0081ff 0px,#0080ff 4px,#007fff 8px,#007dff 12px,#007cff 16px,#007bff 20px,#0079ff 24px,#0077ff 28px,#0076ff 32px,#0074ff 36px,#0072ff 40px,#0070ff 44px,#006fff 48px,#006cff 52px,#006aff 56px,#0068ff 60px,#0066ff 64px,#3c63ff 68px,#5460ff 72px,#665dff 76px,#755aff 80px,#8357ff 84px,#9053ff 88px,#9b4fff 92px,#a64bff 96px,#b146ff 100px,#bb40ff 104px,#c539ff 108px,#cf31ff 112px,#d827ff 116px,#e216ff 120px,#eb00ff 124px,#f400ff 128px,#fd00ff 132px,#ff00f8 136px,#ff00ef 140px,#ff00e8 144px,#ff00e0 148px,#ff00d9 152px,#ff00d3 156px,#ff00cc 160px,#ff00c7 164px,#ff00c1 168px,#ff00bb 172px,#ff00b6 176px,#ff00b1 180px,#ff00ac 184px,#ff00a7 188px,#ff00a3 192px,#ff009e 196px,#ff009a 200px,#ff0096 204px,#ff0092 208px,#ff008e 212px,#ff008a 216px,#ff0086 220px,#ff0082 224px,#ff007e 228px,#ff007b 232px,#ff0077 236px,#ff0073 240px,#ff0070 244px,#ff006c 248px,#ff0068 252px,#ff0065 256px,#ff0061 260px,#ff005e 264px,#ff005a 268px,#ff0057 272px,#ff0053 276px,#ff004f 280px,#ff004b 284px,#ff0047 288px,#ff0043 292px,#ff003f 296px,#ff003b 300px,#ff0036 304px,#ff0031 308px,#ff002c 312px,#ff0025 316px)"></i><i style="top:290px;height:2px;background:linear-gradient(90deg,#007eff 0px,#007dff 4px,#007cff 8px,#007bff 12px,#0079ff 16px,#0078ff 20px,#0076ff 24px,#0075ff 28px,#0073ff 32px,#0071ff 36px,#006fff 40px,#006dff 44px,#006bff 48px,#0069ff 52px,#0067ff 56px,#0064ff 60px,#0e62ff 64px,#3e5fff 68px,#555cff 72px,#6759ff 76px,#7655ff 80px,#8352ff 84px,#904eff 88px,#9b49ff 92px,#a644ff 96px,#b13eff 100px,#bb38ff 104px,#c530ff 108px,#ce25ff 112px,#d813ff 116px,#e100ff 120px,#ea00ff 124px,#f300ff 128px,#fd00ff 132px,#ff00f9 136px,#ff00f0 140px,#ff00e8 144px,#ff00e1 148px,#ff00da 152px,#ff00d4 156px,#ff00cd 160px,#ff00c7 164px,#ff00c2 168px,#ff00bc 172px,#ff00b7 176px,#ff00b2 180px,#ff00ad 184px,#ff00a8 188px,#ff00a4 192px,#ff009f 196px,#ff009b 200px,#ff0097 204px,#ff0093 208px,#ff008f 212px,#ff008b 216px,#ff0087 220px,#ff0083 224px,#ff007f 228px,#ff007c 232px,#ff0078 236px,#ff0074 240px,#ff0071 244px,#ff006d 248px,#ff006a 252px,#ff0066 256px,#ff0063 260px,#ff005f 264px,#ff005c 268px,#ff0058 272px,#ff0054 276px,#ff0051 280px,#ff004d 284px,#ff0049 288px,#ff0045 292px,#ff0041 296px,#ff003d 300px,#ff0038 304px,#ff0034 308px,#ff002e 312px,#ff0029 316px)"></i><i style="top:292px;height:2px;background:linear-gradient(90deg,#007cff 0px,#007bff 4px,#0079ff 8px,#0078ff 12px,#0076ff 16px,#0075ff 20px,#0073ff 24px,#0071ff 28px,#0070ff 32px,#006eff 36px,#006cff 40px,#006aff 44px,#0068ff 48px,#0065ff 52px,#0063ff 56px,#0060ff 60px,#175dff 64px,#405bff 68px,#5657ff 72px,#6854ff 76px,#7750ff 80px,#844cff 84px,#9048ff 88px,#9b43ff 92px,#a63dff 96px,#b136ff 100px,#bb2eff 104px,#c523ff 108px,#ce0fff 112px,#d700ff 116px,#e100ff 120px,#ea00ff 124px,#f300ff 128px,#fc00ff 132px,#ff00f9 136px,#ff00f1 140px,#ff00e9 144px,#ff00e2 148px,#ff00db 152px,#ff00d4 156px,#ff00ce 160px,#ff00c8 164px,#ff00c3 168px,#ff00bd 172px,#ff00b8 176px,#ff00b3 180px,#ff00ae 184px,#ff00a9 188px,#ff00a5 192px,#ff00a0 196px,#ff009c 200px,#ff0098 204px,#ff0094 208px,#ff0090 212px,#ff008c 216px,#ff0088 220px,#ff0084 224px,#ff0080 228px,#ff007d 232px,#ff0079 236px,#ff0075 240px,#ff0072 244px,#ff006e 248px,#ff006b 252px,#ff0067 256px,#ff0064 260px,#ff0060 264px,#ff005d 268px,#ff0059 272px,#ff0056 276px,#ff0052 280px,#ff004e 284px,#ff004b 288px,#ff0047 292px,#ff0043 296px,#ff003f 300px,#ff003a 304px,#ff0036 308px,#ff0031 312px,#ff002b 316px)"></i><i style="top:294px;height:2px;background:linear-gradient(90deg,#0079ff 0px,#0078ff 4px,#0077ff 8px,#0075ff 12px,#0074ff 16px,#0072ff 20px,#0070ff 24px,#006eff 28px,#006dff 32px,#006bff 36px,#0068ff 40px,#0066ff 44px,#0064ff 48px,#0062ff 52px,#005fff 56px,#005cff 60px,#1d59ff 64px,#4256ff 68px,#5753ff 72px,#684fff 76px,#774bff 80px,#8446ff 84px,#9041ff 88px,#9c3cff 92px,#a635ff 96px,#b12dff 100px,#bb21ff 104px,#c40aff 108px,#ce00ff 112px,#d700ff 116px,#e000ff 120px,#e900ff 124px,#f200ff 128px,#fb00ff 132px,#ff00fa 136px,#ff00f2 140px,#ff00ea 144px,#ff00e3 148px,#ff00dc 152px,#ff00d5 156px,#ff00cf 160px,#ff00c9 164px,#ff00c3 168px,#ff00be 172px,#ff00b9 176px,#ff00b4 180px,#ff00af 184px,#ff00aa 188px,#ff00a6 192px,#ff00a1 196px,#ff009d 200px,#ff0099 204px,#ff0095 208px,#ff0091 212px,#ff008d 216px,#ff0089 220px,#ff0085 224px,#ff0081 228px,#ff007e 232px,#ff007a 236px,#ff0077 240px,#ff0073 244px,#ff0070 248px,#ff006c 252px,#ff0069 256px,#ff0065 260px,#ff0062 264px,#ff005e 268px,#ff005b 272px,#ff0057 276px,#ff0054 280px,#ff0050 284px,#ff004c 288px,#ff0048 292px,#ff0045 296px,#ff0041 300px,#ff003c 304px,#ff0038 308px,#ff0033 312px,#ff002e 316px)"></i><i style="top:296px;height:2px;background:linear-gradient(90deg,#0077ff 0px,#0075ff 4px,#0074ff 8px,#0072ff 12px,#0071ff 16px,#006fff 20px,#006dff 24px,#006bff 28px,#0069ff 32px,#0067ff 36px,#0065ff 40px,#0063ff 44px,#0060ff 48px,#005eff 52px,#005bff 56px,#0058ff 60px,#2155ff 64px,#4351ff 68px,#594eff 72px,#694aff 76px,#7845ff 80px,#8540ff 84px,#913aff 88px,#9c33ff 92px,#a62bff 96px,#b11fff 100px,#bb00ff 104px,#c400ff 108px,#ce00ff 112px,#d700ff 116px,#e000ff 120px,#e900ff 124px,#f200ff 128px,#fb00ff 132px,#ff00fb 136px,#ff00f2 140px,#ff00eb 144px,#ff00e3 148px,#ff00dd 152px,#ff00d6 156px,#ff00d0 160px,#ff00ca 164px,#ff00c4 168px,#ff00bf 172px,#ff00ba 176px,#ff00b5 180px,#ff00b0 184px,#ff00ab 188px,#ff00a6 192px,#ff00a2 196px,#ff009e 200px,#ff009a 204px,#ff0096 208px,#ff0092 212px,#ff008e 216px,#ff008a 220px,#ff0086 224px,#ff0082 228px,#ff007f 232px,#ff007b 236px,#ff0078 240px,#ff0074 244px,#ff0071 248px,#ff006d 252px,#ff006a 256px,#ff0066 260px,#ff0063 264px,#ff005f 268px,#ff005c 272px,#ff0058 276px,#ff0055 280px,#ff0051 284px,#ff004e 288px,#ff004a 292px,#ff0046 296px,#ff0042 300px,#ff003e 304px,#ff003a 308px,#ff0035 312px,#ff0031 316px)"></i><i style="top:298px;height:2px;background:linear-gradient(90deg,#0074ff 0px,#0073ff 4px,#0071ff 8px,#006fff 12px,#006eff 16px,#006cff 20px,#006aff 24px,#0068ff 28px,#0066ff 32px,#0064ff 36px,#0061ff 40px,#005fff 44px,#005cff 48px,#005aff 52px,#0057ff 56px,#0053ff 60px,#2550ff 64px,#454cff 68px,#5a48ff 72px,#6a44ff 76px,#783fff 80px,#8539ff 84px,#9132ff 88px,#9c29ff 92px,#a61dff 96px,#b100ff 100px,#ba00ff 104px,#c400ff 108px,#cd00ff 112px,#d600ff 116px,#df00ff 120px,#e800ff 124px,#f100ff 128px,#fa00ff 132px,#ff00fb 136px,#ff00f3 140px,#ff00eb 144px,#ff00e4 148px,#ff00dd 152px,#ff00d7 156px,#ff00d1 160px,#ff00cb 164px,#ff00c5 168px,#ff00c0 172px,#ff00ba 176px,#ff00b5 180px,#ff00b1 184px,#ff00ac 188px,#ff00a7 192px,#ff00a3 196px,#ff009f 200px,#ff009b 204px,#ff0097 208px,#ff0093 212px,#ff008f 216px,#ff008b 220px,#ff0087 224px,#ff0083 228px,#ff0080 232px,#ff007c 236px,#ff0079 240px,#ff0075 244px,#ff0072 248px,#ff006e 252px,#ff006b 256px,#ff0068 260px,#ff0064 264px,#ff0061 268px,#ff005d 272px,#ff005a 276px,#ff0056 280px,#ff0053 284px,#ff004f 288px,#ff004c 292px,#ff0048 296px,#ff0044 300px,#ff0040 304px,#ff003c 308px,#ff0038 312px,#ff0033 316px)"></i><i style="top:300px;height:2px;background:linear-gradient(90deg,#0071ff 0px,#0070ff 4px,#006eff 8px,#006dff 12px,#006bff 16px,#0069ff 20px,#0067ff 24px,#0065ff 28px,#0063ff 32px,#0060ff 36px,#005eff 40px,#005bff 44px,#0058ff 48px,#0055ff 52px,#0052ff 56px,#004fff 60px,#284bff 64px,#4747ff 68px,#5b42ff 72px,#6b3dff 76px,#7937ff 80px,#8531ff 84px,#9128ff 88px,#9c1bff 92px,#a700ff 96px,#b100ff 100px,#ba00ff 104px,#c400ff 108px,#cd00ff 112px,#d600ff 116px,#df00ff 120px,#e800ff 124px,#f100ff 128px,#f900ff 132px,#ff00fc 136px,#ff00f4 140px,#ff00ec 144px,#ff00e5 148px,#ff00de 152px,#ff00d8 156px,#ff00d1 160px,#ff00cb 164px,#ff00c6 168px,#ff00c0 172px,#ff00bb 176px,#ff00b6 180px,#ff00b1 184px,#ff00ad 188px,#ff00a8 192px,#ff00a4 196px,#ff00a0 200px,#ff009b 204px,#ff0097 208px,#ff0093 212px,#ff0090 216px,#ff008c 220px,#ff0088 224px,#ff0084 228px,#ff0081 232px,#ff007d 236px,#ff007a 240px,#ff0076 244px,#ff0073 248px,#ff006f 252px,#ff006c 256px,#ff0069 260px,#ff0065 264px,#ff0062 268px,#ff005f 272px,#ff005b 276px,#ff0058 280px,#ff0054 284px,#ff0051 288px,#ff004d 292px,#ff0049 296px,#ff0046 300px,#ff0042 304px,#ff003e 308px,#ff003a 312px,#ff0035 316px)"></i><i style="top:302px;height:2px;background:linear-gradient(90deg,#006fff 0px,#006dff 4px,#006bff 8px,#006aff 12px,#0068ff 16px,#0066ff 20px,#0064ff 24px,#0061ff 28px,#005fff 32px,#005dff 36px,#005aff 40px,#0057ff 44px,#0054ff 48px,#0051ff 52px,#004eff 56px,#004aff 60px,#2b46ff 64px,#4841ff 68px,#5b3cff 72px,#6b36ff 76px,#792fff 80px,#8626ff 84px,#9119ff 88px,#9c00ff 92px,#a700ff 96px,#b100ff 100px,#ba00ff 104px,#c400ff 108px,#cd00ff 112px,#d600ff 116px,#df00ff 120px,#e700ff 124px,#f000ff 128px,#f900ff 132px,#ff00fd 136px,#ff00f5 140px,#ff00ed 144px,#ff00e6 148px,#ff00df 152px,#ff00d8 156px,#ff00d2 160px,#ff00cc 164px,#ff00c7 168px,#ff00c1 172px,#ff00bc 176px,#ff00b7 180px,#ff00b2 184px,#ff00ae 188px,#ff00a9 192px,#ff00a5 196px,#ff00a1 200px,#ff009c 204px,#ff0098 208px,#ff0094 212px,#ff0091 216px,#ff008d 220px,#ff0089 224px,#ff0085 228px,#ff0082 232px,#ff007e 236px,#ff007b 240px,#ff0077 244px,#ff0074 248px,#ff0071 252px,#ff006d 256px,#ff006a 260px,#ff0066 264px,#ff0063 268px,#ff0060 272px,#ff005c 276px,#ff0059 280px,#ff0056 284px,#ff0052 288px,#ff004f 292px,#ff004b 296px,#ff0047 300px,#ff0044 304px,#ff0040 308px,#ff003b 312px,#ff0037 316px)"></i><i style="top:304px;height:2px;background:linear-gradient(90deg,#006cff 0px,#006aff 4px,#0068ff 8px,#0067ff 12px,#0065ff 16px,#0062ff 20px,#0060ff 24px,#005eff 28px,#005bff 32px,#0059ff 36px,#0056ff 40px,#0053ff 44px,#0050ff 48px,#004cff 52px,#0049ff 56px,#0045ff 60px,#2e40ff 64px,#493bff 68px,#5c35ff 72px,#6c2eff 76px,#7a25ff 80px,#8617ff 84px,#9200ff 88px,#9c00ff 92px,#a700ff 96px,#b000ff 100px,#ba00ff 104px,#c300ff 108px,#cc00ff 112px,#d500ff 116px,#de00ff 120px,#e700ff 124px,#ef00ff 128px,#f800ff 132px,#ff00fd 136px,#ff00f5 140px,#ff00ee 144px,#ff00e6 148px,#ff00e0 152px,#ff00d9 156px,#ff00d3 160px,#ff00cd 164px,#ff00c7 168px,#ff00c2 172px,#ff00bd 176px,#ff00b8 180px,#ff00b3 184px,#ff00af 188px,#ff00aa 192px,#ff00a6 196px,#ff00a1 200px,#ff009d 204px,#ff0099 208px,#ff0095 212px,#ff0092 216px,#ff008e 220px,#ff008a 224px,#ff0086 228px,#ff0083 232px,#ff007f 236px,#ff007c 240px,#ff0078 244px,#ff0075 248px,#ff0072 252px,#ff006e 256px,#ff006b 260px,#ff0068 264px,#ff0064 268px,#ff0061 272px,#ff005e 276px,#ff005a 280px,#ff0057 284px,#ff0053 288px,#ff0050 292px,#ff004c 296px,#ff0049 300px,#ff0045 304px,#ff0041 308px,#ff003d 312px,#ff0039 316px)"></i><i style="top:306px;height:2px;background:linear-gradient(90deg,#0069ff 0px,#0067ff 4px,#0065ff 8px,#0063ff 12px,#0061ff 16px,#005fff 20px,#005dff 24px,#005aff 28px,#0058ff 32px,#0055ff 36px,#0052ff 40px,#004fff 44px,#004bff 48px,#0048ff 52px,#0043ff 56px,#003fff 60px,#313aff 64px,#4b34ff 68px,#5d2cff 72px,#6d23ff 76px,#7a15ff 80px,#8600ff 84px,#9200ff 88px,#9c00ff 92px,#a700ff 96px,#b000ff 100px,#ba00ff 104px,#c300ff 108px,#cc00ff 112px,#d500ff 116px,#de00ff 120px,#e600ff 124px,#ef00ff 128px,#f700ff 132px,#ff00fe 136px,#ff00f6 140px,#ff00ee 144px,#ff00e7 148px,#ff00e0 152px,#ff00da 156px,#ff00d4 160px,#ff00ce 164px,#ff00c8 168px,#ff00c3 172px,#ff00be 176px,#ff00b9 180px,#ff00b4 184px,#ff00af 188px,#ff00ab 192px,#ff00a7 196px,#ff00a2 200px,#ff009e 204px,#ff009a 208px,#ff0096 212px,#ff0092 216px,#ff008f 220px,#ff008b 224px,#ff0087 228px,#ff0084 232px,#ff0080 236px,#ff007d 240px,#ff0079 244px,#ff0076 248px,#ff0073 252px,#ff006f 256px,#ff006c 260px,#ff0069 264px,#ff0065 268px,#ff0062 272px,#ff005f 276px,#ff005c 280px,#ff0058 284px,#ff0055 288px,#ff0051 292px,#ff004e 296px,#ff004a 300px,#ff0047 304px,#ff0043 308px,#ff003f 312px,#ff003b 316px)"></i><i style="top:308px;height:2px;background:linear-gradient(90deg,#0066ff 0px,#0064ff 4px,#0062ff 8px,#0060ff 12px,#005eff 16px,#005cff 20px,#0059ff 24px,#0057ff 28px,#0054ff 32px,#0051ff 36px,#004eff 40px,#004aff 44px,#0046ff 48px,#0042ff 52px,#003eff 56px,#0038ff 60px,#3332ff 64px,#4c2bff 68px,#5e22ff 72px,#6d12ff 76px,#7b00ff 80px,#8700ff 84px,#9200ff 88px,#9d00ff 92px,#a700ff 96px,#b000ff 100px,#ba00ff 104px,#c300ff 108px,#cc00ff 112px,#d500ff 116px,#dd00ff 120px,#e600ff 124px,#ee00ff 128px,#f700ff 132px,#ff00ff 136px,#ff00f7 140px,#ff00ef 144px,#ff00e8 148px,#ff00e1 152px,#ff00db 156px,#ff00d4 160px,#ff00cf 164px,#ff00c9 168px,#ff00c4 172px,#ff00bf 176px,#ff00ba 180px,#ff00b5 184px,#ff00b0 188px,#ff00ac 192px,#ff00a7 196px,#ff00a3 200px,#ff009f 204px,#ff009b 208px,#ff0097 212px,#ff0093 216px,#ff0090 220px,#ff008c 224px,#ff0088 228px,#ff0085 232px,#ff0081 236px,#ff007e 240px,#ff007a 244px,#ff0077 248px,#ff0074 252px,#ff0070 256px,#ff006d 260px,#ff006a 264px,#ff0067 268px,#ff0063 272px,#ff0060 276px,#ff005d 280px,#ff0059 284px,#ff0056 288px,#ff0053 292px,#ff004f 296px,#ff004c 300px,#ff0048 304px,#ff0045 308px,#ff0041 312px,#ff003d 316px)"></i><i style="top:310px;height:2px;background:linear-gradient(90deg,#0063ff 0px,#0061ff 4px,#005fff 8px,#005dff 12px,#005bff 16px,#0058ff 20px,#0056ff 24px,#0053ff 28px,#0050ff 32px,#004dff 36px,#0049ff 40px,#0045ff 44px,#0041ff 48px,#003dff 52px,#0037ff 56px,#0031ff 60px,#352aff 64px,#4d20ff 68px,#5f0fff 72px,#6e00ff 76px,#7b00ff 80px,#8700ff 84px,#9200ff 88px,#9d00ff 92px,#a700ff 96px,#b000ff 100px,#ba00ff 104px,#c300ff 108px,#cc00ff 112px,#d400ff 116px,#dd00ff 120px,#e500ff 124px,#ee00ff 128px,#f600ff 132px,#ff00ff 136px,#ff00f7 140px,#ff00f0 144px,#ff00e9 148px,#ff00e2 152px,#ff00db 156px,#ff00d5 160px,#ff00cf 164px,#ff00ca 168px,#ff00c4 172px,#ff00bf 176px,#ff00ba 180px,#ff00b6 184px,#ff00b1 188px,#ff00ad 192px,#ff00a8 196px,#ff00a4 200px,#ff00a0 204px,#ff009c 208px,#ff0098 212px,#ff0094 216px,#ff0091 220px,#ff008d 224px,#ff0089 228px,#ff0086 232px,#ff0082 236px,#ff007f 240px,#ff007b 244px,#ff0078 248px,#ff0075 252px,#ff0072 256px,#ff006e 260px,#ff006b 264px,#ff0068 268px,#ff0065 272px,#ff0061 276px,#ff005e 280px,#ff005b 284px,#ff0057 288px,#ff0054 292px,#ff0051 296px,#ff004d 300px,#ff004a 304px,#ff0046 308px,#ff0043 312px,#ff003f 316px)"></i><i style="top:312px;height:2px;background:linear-gradient(90deg,#0060ff 0px,#005eff 4px,#005cff 8px,#005aff 12px,#0057ff 16px,#0054ff 20px,#0052ff 24px,#004fff 28px,#004bff 32px,#0048ff 36px,#0044ff 40px,#0040ff 44px,#003bff 48px,#0036ff 52px,#0030ff 56px,#0028ff 60px,#371eff 64px,#4e0bff 68px,#6000ff 72px,#6f00ff 76px,#7c00ff 80px,#8700ff 84px,#9200ff 88px,#9d00ff 92px,#a700ff 96px,#b000ff 100px,#ba00ff 104px,#c300ff 108px,#cb00ff 112px,#d400ff 116px,#dd00ff 120px,#e500ff 124px,#ed00ff 128px,#f600ff 132px,#fe00ff 136px,#ff00f8 140px,#ff00f0 144px,#ff00e9 148px,#ff00e2 152px,#ff00dc 156px,#ff00d6 160px,#ff00d0 164px,#ff00cb 168px,#ff00c5 172px,#ff00c0 176px,#ff00bb 180px,#ff00b6 184px,#ff00b2 188px,#ff00ad 192px,#ff00a9 196px,#ff00a5 200px,#ff00a1 204px,#ff009d 208px,#ff0099 212px,#ff0095 216px,#ff0091 220px,#ff008e 224px,#ff008a 228px,#ff0087 232px,#ff0083 236px,#ff0080 240px,#ff007c 244px,#ff0079 248px,#ff0076 252px,#ff0073 256px,#ff006f 260px,#ff006c 264px,#ff0069 268px,#ff0066 272px,#ff0062 276px,#ff005f 280px,#ff005c 284px,#ff0059 288px,#ff0055 292px,#ff0052 296px,#ff004f 300px,#ff004b 304px,#ff0048 308px,#ff0044 312px,#ff0040 316px)"></i><i style="top:314px;height:2px;background:linear-gradient(90deg,#005dff 0px,#005bff 4px,#0059ff 8px,#0056ff 12px,#0053ff 16px,#0051ff 20px,#004eff 24px,#004aff 28px,#0047ff 32px,#0043ff 36px,#003fff 40px,#003aff 44px,#0035ff 48px,#002fff 52px,#0027ff 56px,#001dff 60px,#3900ff 64px,#5000ff 68px,#6100ff 72px,#6f00ff 76px,#7c00ff 80px,#8800ff 84px,#9300ff 88px,#9d00ff 92px,#a700ff 96px,#b000ff 100px,#b900ff 104px,#c200ff 108px,#cb00ff 112px,#d400ff 116px,#dc00ff 120px,#e500ff 124px,#ed00ff 128px,#f500ff 132px,#fd00ff 136px,#ff00f9 140px,#ff00f1 144px,#ff00ea 148px,#ff00e3 152px,#ff00dd 156px,#ff00d7 160px,#ff00d1 164px,#ff00cb 168px,#ff00c6 172px,#ff00c1 176px,#ff00bc 180px,#ff00b7 184px,#ff00b3 188px,#ff00ae 192px,#ff00aa 196px,#ff00a6 200px,#ff00a2 204px,#ff009e 208px,#ff009a 212px,#ff0096 216px,#ff0092 220px,#ff008f 224px,#ff008b 228px,#ff0088 232px,#ff0084 236px,#ff0081 240px,#ff007d 244px,#ff007a 248px,#ff0077 252px,#ff0074 256px,#ff0070 260px,#ff006d 264px,#ff006a 268px,#ff0067 272px,#ff0064 276px,#ff0060 280px,#ff005d 284px,#ff005a 288px,#ff0057 292px,#ff0053 296px,#ff0050 300px,#ff004d 304px,#ff0049 308px,#ff0046 312px,#ff0042 316px)"></i><i style="top:316px;height:2px;background:linear-gradient(90deg,#0059ff 0px,#0058ff 4px,#0055ff 8px,#0052ff 12px,#0050ff 16px,#004dff 20px,#0049ff 24px,#0046ff 28px,#0042ff 32px,#003eff 36px,#0039ff 40px,#0034ff 44px,#002eff 48px,#0026ff 52px,#001bff 56px,#0b00ff 60px,#3b00ff 64px,#5100ff 68px,#6200ff 72px,#7000ff 76px,#7c00ff 80px,#8800ff 84px,#9300ff 88px,#9d00ff 92px,#a700ff 96px,#b000ff 100px,#b900ff 104px,#c200ff 108px,#cb00ff 112px,#d300ff 116px,#dc00ff 120px,#e400ff 124px,#ec00ff 128px,#f500ff 132px,#fd00ff 136px,#ff00f9 140px,#ff00f2 144px,#ff00eb 148px,#ff00e4 152px,#ff00de 156px,#ff00d7 160px,#ff00d2 164px,#ff00cc 168px,#ff00c7 172px,#ff00c2 176px,#ff00bd 180px,#ff00b8 184px,#ff00b3 188px,#ff00af 192px,#ff00ab 196px,#ff00a7 200px,#ff00a3 204px,#ff009f 208px,#ff009b 212px,#ff0097 216px,#ff0093 220px,#ff0090 224px,#ff008c 228px,#ff0089 232px,#ff0085 236px,#ff0082 240px,#ff007e 244px,#ff007b 248px,#ff0078 252px,#ff0075 256px,#ff0071 260px,#ff006e 264px,#ff006b 268px,#ff0068 272px,#ff0065 276px,#ff0062 280px,#ff005e 284px,#ff005b 288px,#ff0058 292px,#ff0055 296px,#ff0051 300px,#ff004e 304px,#ff004b 308px,#ff0047 312px,#ff0044 316px)"></i><i style="top:318px;height:2px;background:linear-gradient(90deg,#0056ff 0px,#0054ff 4px,#0051ff 8px,#004fff 12px,#004cff 16px,#0048ff 20px,#0045ff 24px,#0041ff 28px,#003dff 32px,#0038ff 36px,#0033ff 40px,#002cff 44px,#0024ff 48px,#0019ff 52px,#0000ff 56px,#1400ff 60px,#3d00ff 64px,#5200ff 68px,#6200ff 72px,#7000ff 76px,#7d00ff 80px,#8800ff 84px,#9300ff 88px,#9d00ff 92px,#a700ff 96px,#b000ff 100px,#b900ff 104px,#c200ff 108px,#cb00ff 112px,#d300ff 116px,#dc00ff 120px,#e400ff 124px,#ec00ff 128px,#f400ff 132px,#fc00ff 136px,#ff00fa 140px,#ff00f2 144px,#ff00eb 148px,#ff00e5 152px,#ff00de 156px,#ff00d8 160px,#ff00d2 164px,#ff00cd 168px,#ff00c8 172px,#ff00c2 176px,#ff00be 180px,#ff00b9 184px,#ff00b4 188px,#ff00b0 192px,#ff00ac 196px,#ff00a7 200px,#ff00a3 204px,#ff009f 208px,#ff009c 212px,#ff0098 216px,#ff0094 220px,#ff0091 224px,#ff008d 228px,#ff0089 232px,#ff0086 236px,#ff0083 240px,#ff007f 244px,#ff007c 248px,#ff0079 252px,#ff0076 256px,#ff0072 260px,#ff006f 264px,#ff006c 268px,#ff0069 272px,#ff0066 276px,#ff0063 280px,#ff0060 284px,#ff005c 288px,#ff0059 292px,#ff0056 296px,#ff0053 300px,#ff004f 304px,#ff004c 308px,#ff0049 312px,#ff0045 316px)"></i></div>
<div class="gl" style="left:36px;top:0;width:1px;height:320px"></div><div class="gl" style="left:0;top:284px;width:314px;height:1px"></div><div class="gl" style="left:72px;top:0;width:1px;height:320px"></div><div class="gl" style="left:0;top:248px;width:314px;height:1px"></div><div class="gl" style="left:107px;top:0;width:1px;height:320px"></div><div class="gl" style="left:0;top:213px;width:314px;height:1px"></div><div class="gl" style="left:142px;top:0;width:1px;height:320px"></div><div class="gl" style="left:0;top:178px;width:314px;height:1px"></div><div class="gl" style="left:178px;top:0;width:1px;height:320px"></div><div class="gl" style="left:0;top:142px;width:314px;height:1px"></div><div class="gl" style="left:213px;top:0;width:1px;height:320px"></div><div class="gl" style="left:0;top:107px;width:314px;height:1px"></div><div class="gl" style="left:248px;top:0;width:1px;height:320px"></div><div class="gl" style="left:0;top:72px;width:314px;height:1px"></div><div class="gl" style="left:284px;top:0;width:1px;height:320px"></div><div class="gl" style="left:0;top:36px;width:314px;height:1px"></div>
<div class="a" style="left:0;top:0;width:2px;height:320px;background:#888"></div>
<div class="a" style="left:0;top:319px;width:314px;height:2px;background:#888"></div>
<div class="a" style="left:0;top:0;width:314px;height:1px;background:#c4c4c4"></div>
<svg class="a" style="left:0;top:0" width="314" height="320">
<polygon points="52.6,295.9 123.5,114.6 240.9,220.9" fill="none" stroke="#000" stroke-width="1"/>
<polygon points="58,289.4 110.3,108.2 156,144.6 220.4,202.2" fill="none" stroke="rgba(255,155,20,0.8)" stroke-width="1.25"/>
</svg>
<div class="t cl" style="left:4px;top:3px">y</div>
<div class="t cl" style="left:4px;top:31.5px">0.8</div>
<div class="t cl" style="left:4px;top:102.5px">0.6</div>
<div class="t cl" style="left:4px;top:173.5px">0.4</div>
<div class="t cl" style="left:4px;top:244.5px">0.2</div>
<div class="t cl" style="left:4px;top:308.5px">0</div>
<div class="t cl" style="left:65px;top:308.5px">0.2</div>
<div class="t cl" style="left:135px;top:308.5px">0.4</div>
<div class="t cl" style="left:206px;top:308.5px">0.6</div>
<div class="t cl" style="left:278px;top:308.5px">0.8</div>
<div class="t cl" style="left:311px;top:308.5px">x</div>
<div class="t" style="left:209.5px;top:63.1px;font-size:16.8px;font-weight:bold;color:#000">Monitor</div>
<div class="t" style="left:209.7px;top:83.1px;font-size:16.8px;letter-spacing:0.4px;font-weight:bold;color:#f0a030">sRGB</div>
</div>

<!-- bar chart -->
<div id="bars">
<div class="bg" style="top:62.5px"></div><div class="bg" style="top:126.5px"></div><div class="bg" style="top:190.0px"></div><div class="bg" style="top:254.0px"></div>
<div class="bar" style="left:55px;height:320px;bottom:-1px;background:#333333"></div><div class="bar" style="left:70px;height:303px;bottom:-1px;background:#444444"></div><div class="bar" style="left:85px;height:209px;bottom:-1px;background:#888888"></div><div class="bar" style="left:100px;height:110px;bottom:-1px;background:#c0c0c0"></div><div class="bar" style="left:130px;height:277px;bottom:-1px;background:#ff0000"></div><div class="bar" style="left:145px;height:75px;bottom:-1px;background:#00ff00"></div><div class="bar" style="left:160px;height:184px;bottom:-1px;background:#0000ff"></div><div class="bar" style="left:175px;height:133px;bottom:-1px;background:#00ffff"></div><div class="bar" style="left:190px;height:108px;bottom:-1px;background:#ff00ff"></div><div class="bar" style="left:205px;height:63px;bottom:-1px;background:#ffff00"></div><div class="bar" style="left:220px;height:242px;bottom:-1px;background:#aa5555"></div><div class="bar" style="left:235px;height:168px;bottom:-1px;background:#55aa55"></div><div class="bar" style="left:250px;height:254px;bottom:-1px;background:#5555aa"></div><div class="bar" style="left:265px;height:172px;bottom:-1px;background:#55aaaa"></div><div class="bar" style="left:280px;height:149px;bottom:-1px;background:#aa55aa"></div><div class="bar" style="left:295px;height:139px;bottom:-1px;background:#aaaa55"></div>
<div class="t bl" style="top:2px">10 d E 94</div>
<div class="t bl" style="top:59.7px">8 d E 94</div>
<div class="t bl" style="top:123.4px">6 d E 94</div>
<div class="t bl" style="top:186.1px">4 d E 94</div>
<div class="t bl" style="top:249.6px">2 d E 94</div>
</div>

<!-- table -->
<div class="t tb" style="left:136.5px;top:475.3px">Target</div>
<div class="t tb" style="left:215.7px;top:475.3px;letter-spacing:0.35px">Current</div>
<div class="t tb" style="left:295px;top:475.3px;letter-spacing:0.35px">Deviation</div>
<div class="t tb" style="left:56px;top:493.8px;letter-spacing:0.6px">Gamma</div>
<div class="t tb" style="left:136.5px;top:493.8px">2.2</div>
<div class="t tb or" style="left:215.7px;top:493.8px;letter-spacing:0.7px">1.8</div>
<div class="t tb or" style="left:296px;top:493.8px;letter-spacing:0.8px">17%</div>
<div class="t tb" style="left:56px;top:512.3px">Kelvin</div>
<div class="t tb" style="left:136.5px;top:512.3px;letter-spacing:0.4px">6500</div>
<div class="t tb or" style="left:215.7px;top:512.3px;letter-spacing:0.9px">4754</div>
<div class="t tb or" style="left:295.5px;top:512.3px;letter-spacing:0.8px">27%</div>
<div class="t tb" style="left:56px;top:530.8px;letter-spacing:0.4px">cd/m2</div>
<div class="t tb" style="left:136.5px;top:530.8px">120</div>
<div class="t tb gr" style="left:215.7px;top:530.8px;letter-spacing:0.7px">123</div>
<div class="t tb gr" style="left:295.5px;top:530.8px;letter-spacing:0.8px">3%</div>

<div class="t tb" style="left:400px;top:475px">Delta E Average</div>
<div class="t tb" style="left:400px;top:493px;letter-spacing:0.25px">Delta E Maximum</div>
<div class="t tb or" style="left:523px;top:475px;width:60px;text-align:center;letter-spacing:0.5px">5.2</div>
<div class="t tb or" style="left:523px;top:493px;width:60px;text-align:center;letter-spacing:0.6px">10.2</div>

<!-- buttons -->
<div class="btn" style="left:24px;border:2px solid #0078d7;line-height:21px;padding-top:1px"><div class="a" style="left:0;top:0;right:0;bottom:0;border:1px dotted #000"></div>Main Menu</div>
<div class="btn" style="left:116px;padding-top:1px">Calibration</div>
<div class="btn" style="left:589px;width:74px;padding-top:1px">Save</div>
<div class="btn" style="left:679px;width:74px;padding-top:1px">Quit</div>
</body></html>
